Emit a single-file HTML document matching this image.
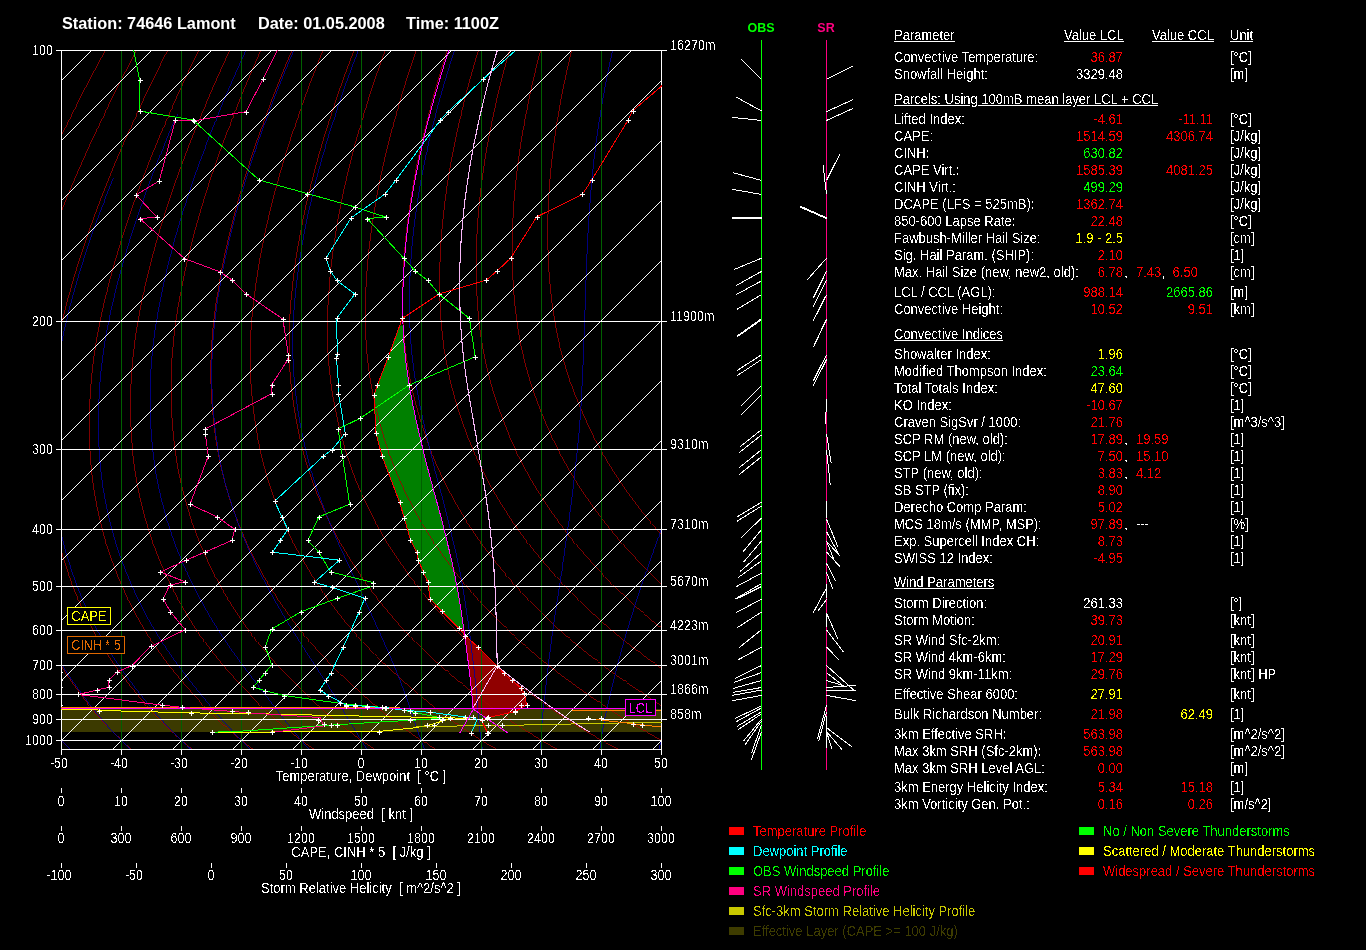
<!DOCTYPE html>
<html><head><meta charset="utf-8"><style>
html,body{margin:0;padding:0;background:#000;}
body{width:1366px;height:950px;position:relative;overflow:hidden;font-family:"Liberation Sans",sans-serif;}
svg{position:absolute;left:0;top:0;}
svg text{font-family:"Liberation Sans",sans-serif;white-space:pre;}
</style></head><body>
<svg width="1366" height="950" viewBox="0 0 1366 950">
<defs><filter id="crisp" x="0" y="0" width="1366" height="950" filterUnits="userSpaceOnUse"><feComponentTransfer><feFuncA type="discrete" tableValues="0 0 0 0 0 0 0 0 0 0 0 1 1 1 1 1 1 1 1 1"/></feComponentTransfer></filter><clipPath id="cp"><rect x="61" y="50" width="601" height="700"/></clipPath><pattern id="diag" x="0" y="0" width="60" height="60" patternUnits="userSpaceOnUse"><path d="M0 21h1v1h-1zM1 20h1v1h-1zM2 19h1v1h-1zM3 18h1v1h-1zM4 17h1v1h-1zM5 16h1v1h-1zM6 15h1v1h-1zM7 14h1v1h-1zM8 13h1v1h-1zM9 12h1v1h-1zM10 11h1v1h-1zM11 10h1v1h-1zM12 9h1v1h-1zM13 8h1v1h-1zM14 7h1v1h-1zM15 6h1v1h-1zM16 5h1v1h-1zM17 4h1v1h-1zM18 3h1v1h-1zM19 2h1v1h-1zM20 1h1v1h-1zM21 0h1v1h-1zM22 59h1v1h-1zM23 58h1v1h-1zM24 57h1v1h-1zM25 56h1v1h-1zM26 55h1v1h-1zM27 54h1v1h-1zM28 53h1v1h-1zM29 52h1v1h-1zM30 51h1v1h-1zM31 50h1v1h-1zM32 49h1v1h-1zM33 48h1v1h-1zM34 47h1v1h-1zM35 46h1v1h-1zM36 45h1v1h-1zM37 44h1v1h-1zM38 43h1v1h-1zM39 42h1v1h-1zM40 41h1v1h-1zM41 40h1v1h-1zM42 39h1v1h-1zM43 38h1v1h-1zM44 37h1v1h-1zM45 36h1v1h-1zM46 35h1v1h-1zM47 34h1v1h-1zM48 33h1v1h-1zM49 32h1v1h-1zM50 31h1v1h-1zM51 30h1v1h-1zM52 29h1v1h-1zM53 28h1v1h-1zM54 27h1v1h-1zM55 26h1v1h-1zM56 25h1v1h-1zM57 24h1v1h-1zM58 23h1v1h-1zM59 22h1v1h-1z" fill="#fff"/></pattern></defs>
<g clip-path="url(#cp)">
<rect x="61" y="709" width="600" height="23" fill="#3c3a00" stroke="none" stroke-width="1"/>
<polygon points="399.6,325.5 388.4,356.8 377.4,385.2 374.2,394.7 375.8,432.6 382.1,456.3 399.5,502.0 404.2,517.8 410.5,539.9 416.8,552.5 418.4,560.4 423.1,571.5 427.9,582.5 430.2,599.2 441.7,611.3 458.7,628.3 463.7,628.3 462.6,620.5 461.4,612.8 460.2,605.0 458.9,597.2 457.5,589.5 456.1,581.7 454.5,574.0 452.8,566.2 451.1,558.4 449.3,550.7 447.4,542.9 445.5,535.1 443.6,527.4 441.6,519.6 439.5,511.8 437.4,504.1 435.3,496.3 433.2,488.5 431.0,480.8 429.0,473.0 426.9,465.3 424.9,457.5 423.0,449.7 421.1,442.0 419.3,434.2 417.5,426.4 415.8,418.7 414.1,410.9 412.5,403.1 411.0,395.4 409.7,387.6 408.4,379.8 407.2,372.1 406.2,364.3 405.3,356.6 404.6,348.8 403.9,341.0 403.4,333.3 403.1,325.5" fill="#008000" stroke="none"/>
<polygon points="473.0,708.0 472.7,703.8 472.3,699.6 471.9,695.4 471.5,691.2 471.1,687.0 470.6,682.8 470.2,678.6 469.7,674.4 469.2,670.2 468.7,666.1 468.2,661.9 467.7,657.7 467.1,653.5 466.6,649.3 466.0,645.1 465.5,640.9 464.9,636.7 464.3,632.5 463.7,628.3 458.7,628.3 465.0,635.5 477.5,646.6 497.2,665.9 503.5,673.0 511.5,680.2 521.3,688.2 524.0,692.7 526.7,705.2 515.1,711.5 487.4,717.8 487.4,717.8 480.0,713.0 473.0,708.0" fill="#900000" stroke="none"/>
</g>
<g clip-path="url(#cp)" shape-rendering="crispEdges">
<polyline points="105.6,50.0 103.0,54.7 100.5,59.4 97.9,64.1 95.4,68.8 92.9,73.4 90.5,78.1 88.0,82.7 85.6,87.3 83.2,91.9 80.9,96.4 78.5,101.0 76.2,105.5 73.9,110.0 71.6,114.5 69.4,119.0 67.1,123.5 64.9,128.0 62.7,132.4 60.6,136.8 58.4,141.2 56.3,145.6 54.2,150.0 52.2,154.4 50.1,158.7 48.1,163.0 46.1,167.3 44.1,171.6 42.2,175.9 40.2,180.2 38.3,184.4 36.4,188.7 34.6,192.9 32.7,197.1 30.9,201.3 29.1,205.4 27.3,209.6 25.6,213.7 23.9,217.9 22.1,222.0 20.5,226.1 18.8,230.1 17.2,234.2 15.5,238.3 14.0,242.3 12.4,246.3 10.8,250.3 9.3,254.3 7.8,258.3 6.3,262.2 4.9,266.2 3.4,270.1 2.0,274.0 0.6,277.9 -0.7,281.8 -2.1,285.7 -3.4,289.5 -4.7,293.4 -6.0,297.2 -7.2,301.0 -8.5,304.8 -9.7,308.6 -10.9,312.4 -12.0,316.1 -13.2,319.9 -14.3,323.6 -15.4,327.3 -16.5,331.0 -17.5,334.7 -18.5,338.3 -19.5,341.9 -20.4,345.5 -21.3,349.1 -22.2,352.6 -23.1,356.2 -23.9,359.7 -24.7,363.2 -25.5,366.7 -26.2,370.2 -27.0,373.6 -27.7,377.0 -28.4,380.5 -29.0,383.9 -29.7,387.3 -30.3,390.6 -30.8,394.0 -31.4,397.3 -32.0,400.7 -32.5,404.0 -33.0,407.3 -33.5,410.6 -33.9,413.9 -34.3,417.1 -34.8,420.4 -35.2,423.6 -35.5,426.9 -35.9,430.1 -36.3,433.3 -36.6,436.5 -36.9,439.7 -37.2,442.9 -37.5,446.1 -37.7,449.3 -38.0,452.5 -38.2,455.6 -38.4,458.7 -38.5,461.9 -38.7,465.0 -38.8,468.0 -38.9,471.1 -38.9,474.2 -39.0,477.2 -39.0,480.3 -39.0,483.3 -39.0,486.3 -38.9,489.3 -38.9,492.3 -38.8,495.2 -38.7,498.2 -38.5,501.1 -38.4,504.1 -38.2,507.0 -38.0,509.9 -37.8,512.8 -37.6,515.8 -37.4,518.6 -37.1,521.5 -36.9,524.4 -36.6,527.3 -36.3,530.2 -35.9,533.0 -35.6,535.8 -35.2,538.7 -34.8,541.5 -34.4,544.3 -33.9,547.1 -33.5,549.9 -33.0,552.6 -32.5,555.4 -32.0,558.1 -31.4,560.9 -30.9,563.6 -30.3,566.3 -29.7,569.1 -29.1,571.8 -28.4,574.5 -27.8,577.2 -27.1,579.8 -26.4,582.5 -25.8,585.2 -25.0,587.9 -24.3,590.5 -23.6,593.2 -22.8,595.8 -22.0,598.5 -21.2,601.1 -20.4,603.7 -19.5,606.4 -18.7,609.0 -17.8,611.6 -16.9,614.2 -16.0,616.7 -15.0,619.3 -14.1,621.9 -13.1,624.4 -12.1,626.9 -11.0,629.5 -10.0,632.0 -8.9,634.5 -7.8,637.0 -6.7,639.5 -5.6,641.9 -4.4,644.4 -3.2,646.9 -2.0,649.3 -0.8,651.7 0.5,654.2 1.7,656.6 3.0,659.0 4.3,661.4 5.6,663.8 6.9,666.2 8.3,668.6 9.7,670.9 11.1,673.3 12.5,675.6 13.9,678.0 15.4,680.3 16.9,682.6 18.4,685.0 19.9,687.3 21.4,689.6 22.9,691.9 24.5,694.2 26.0,696.6 27.6,698.9 29.2,701.2 30.8,703.5 32.4,705.8 34.0,708.1 35.7,710.4 37.4,712.7 39.1,714.9 40.8,717.2 42.6,719.4 44.4,721.6 46.3,723.8 48.1,726.0 50.0,728.1 51.9,730.3 53.8,732.4 55.8,734.6 57.8,736.7 59.8,738.8 61.8,740.8 63.9,742.9 66.0,745.0 68.1,747.0 70.2,749.0 72.4,751.1" fill="none" stroke="#a00000" stroke-width="0.8" />
<polyline points="136.7,50.0 134.2,54.7 131.7,59.4 129.3,64.1 126.9,68.8 124.5,73.4 122.1,78.1 119.8,82.7 117.5,87.3 115.2,91.9 112.9,96.4 110.7,101.0 108.4,105.5 106.2,110.0 104.1,114.5 101.9,119.0 99.8,123.5 97.7,128.0 95.6,132.4 93.5,136.8 91.5,141.2 89.5,145.6 87.5,150.0 85.5,154.4 83.6,158.7 81.7,163.0 79.8,167.3 77.9,171.6 76.0,175.9 74.2,180.2 72.4,184.4 70.6,188.7 68.9,192.9 67.1,197.1 65.4,201.3 63.7,205.4 62.1,209.6 60.4,213.7 58.8,217.9 57.2,222.0 55.6,226.1 54.1,230.1 52.5,234.2 51.0,238.3 49.5,242.3 48.1,246.3 46.6,250.3 45.2,254.3 43.8,258.3 42.5,262.2 41.1,266.2 39.8,270.1 38.5,274.0 37.2,277.9 36.0,281.8 34.7,285.7 33.5,289.5 32.3,293.4 31.2,297.2 30.0,301.0 28.9,304.8 27.8,308.6 26.7,312.4 25.7,316.1 24.7,319.9 23.7,323.6 22.7,327.3 21.7,331.0 20.8,334.7 20.0,338.3 19.1,341.9 18.3,345.5 17.5,349.1 16.7,352.6 16.0,356.2 15.3,359.7 14.6,363.2 13.9,366.7 13.3,370.2 12.7,373.6 12.1,377.0 11.5,380.5 11.0,383.9 10.5,387.3 10.0,390.6 9.5,394.0 9.1,397.3 8.7,400.7 8.3,404.0 7.9,407.3 7.6,410.6 7.2,413.9 6.9,417.1 6.6,420.4 6.3,423.6 6.1,426.9 5.9,430.1 5.6,433.3 5.4,436.5 5.3,439.7 5.1,442.9 5.0,446.1 4.8,449.3 4.7,452.5 4.6,455.6 4.6,458.7 4.6,461.9 4.6,465.0 4.6,468.0 4.6,471.1 4.7,474.2 4.8,477.2 4.9,480.3 5.0,483.3 5.2,486.3 5.4,489.3 5.6,492.3 5.8,495.2 6.0,498.2 6.3,501.1 6.6,504.1 6.9,507.0 7.2,509.9 7.6,512.8 7.9,515.8 8.3,518.6 8.7,521.5 9.1,524.4 9.5,527.3 10.0,530.2 10.5,533.0 11.0,535.8 11.5,538.7 12.0,541.5 12.6,544.3 13.2,547.1 13.8,549.9 14.4,552.6 15.0,555.4 15.7,558.1 16.4,560.9 17.1,563.6 17.8,566.3 18.6,569.1 19.3,571.8 20.1,574.5 20.9,577.2 21.7,579.8 22.6,582.5 23.4,585.2 24.3,587.9 25.2,590.5 26.1,593.2 27.0,595.8 27.9,598.5 28.9,601.1 29.9,603.7 30.9,606.4 31.9,609.0 32.9,611.6 34.0,614.2 35.1,616.7 36.2,619.3 37.3,621.9 38.4,624.4 39.6,626.9 40.8,629.5 42.0,632.0 43.2,634.5 44.5,637.0 45.8,639.5 47.1,641.9 48.4,644.4 49.7,646.9 51.1,649.3 52.5,651.7 53.9,654.2 55.3,656.6 56.8,659.0 58.2,661.4 59.7,663.8 61.2,666.2 62.7,668.6 64.3,670.9 65.8,673.3 67.4,675.6 69.0,678.0 70.7,680.3 72.3,682.6 74.0,685.0 75.7,687.3 77.3,689.6 79.1,691.9 80.8,694.2 82.5,696.6 84.3,698.9 86.0,701.2 87.8,703.5 89.6,705.8 91.4,708.1 93.2,710.4 95.1,712.7 97.0,714.9 98.9,717.2 100.9,719.4 102.9,721.6 104.9,723.8 106.9,726.0 109.0,728.1 111.1,730.3 113.2,732.4 115.3,734.6 117.5,736.7 119.7,738.8 121.9,740.8 124.2,742.9 126.4,745.0 128.7,747.0 131.1,749.0 133.4,751.1" fill="none" stroke="#a00000" stroke-width="0.8" />
<polyline points="167.8,50.0 165.4,54.7 163.0,59.4 160.7,64.1 158.4,68.8 156.1,73.4 153.8,78.1 151.5,82.7 149.3,87.3 147.1,91.9 145.0,96.4 142.8,101.0 140.7,105.5 138.6,110.0 136.5,114.5 134.5,119.0 132.4,123.5 130.4,128.0 128.4,132.4 126.5,136.8 124.5,141.2 122.6,145.6 120.7,150.0 118.9,154.4 117.0,158.7 115.2,163.0 113.4,167.3 111.7,171.6 109.9,175.9 108.2,180.2 106.5,184.4 104.8,188.7 103.2,192.9 101.5,197.1 99.9,201.3 98.3,205.4 96.8,209.6 95.2,213.7 93.7,217.9 92.2,222.0 90.8,226.1 89.3,230.1 87.9,234.2 86.5,238.3 85.1,242.3 83.8,246.3 82.5,250.3 81.2,254.3 79.9,258.3 78.6,262.2 77.4,266.2 76.2,270.1 75.0,274.0 73.8,277.9 72.7,281.8 71.6,285.7 70.5,289.5 69.4,293.4 68.3,297.2 67.3,301.0 66.3,304.8 65.3,308.6 64.4,312.4 63.4,316.1 62.5,319.9 61.6,323.6 60.8,327.3 59.9,331.0 59.2,334.7 58.4,338.3 57.7,341.9 56.9,345.5 56.3,349.1 55.6,352.6 55.0,356.2 54.4,359.7 53.8,363.2 53.3,366.7 52.8,370.2 52.3,373.6 51.8,377.0 51.4,380.5 51.0,383.9 50.6,387.3 50.2,390.6 49.9,394.0 49.6,397.3 49.3,400.7 49.0,404.0 48.8,407.3 48.6,410.6 48.4,413.9 48.2,417.1 48.0,420.4 47.9,423.6 47.7,426.9 47.6,430.1 47.5,433.3 47.5,436.5 47.4,439.7 47.4,442.9 47.4,446.1 47.4,449.3 47.4,452.5 47.5,455.6 47.5,458.7 47.6,461.9 47.8,465.0 47.9,468.0 48.1,471.1 48.3,474.2 48.5,477.2 48.8,480.3 49.0,483.3 49.3,486.3 49.7,489.3 50.0,492.3 50.3,495.2 50.7,498.2 51.1,501.1 51.6,504.1 52.0,507.0 52.5,509.9 52.9,512.8 53.4,515.8 54.0,518.6 54.5,521.5 55.1,524.4 55.6,527.3 56.2,530.2 56.8,533.0 57.5,535.8 58.1,538.7 58.8,541.5 59.5,544.3 60.3,547.1 61.0,549.9 61.8,552.6 62.6,555.4 63.4,558.1 64.2,560.9 65.1,563.6 66.0,566.3 66.9,569.1 67.8,571.8 68.7,574.5 69.6,577.2 70.6,579.8 71.6,582.5 72.6,585.2 73.6,587.9 74.7,590.5 75.7,593.2 76.8,595.8 77.9,598.5 79.0,601.1 80.1,603.7 81.3,606.4 82.4,609.0 83.6,611.6 84.9,614.2 86.1,616.7 87.4,619.3 88.6,621.9 89.9,624.4 91.3,626.9 92.6,629.5 94.0,632.0 95.4,634.5 96.8,637.0 98.2,639.5 99.7,641.9 101.2,644.4 102.7,646.9 104.2,649.3 105.8,651.7 107.3,654.2 108.9,656.6 110.5,659.0 112.2,661.4 113.8,663.8 115.5,666.2 117.2,668.6 118.9,670.9 120.6,673.3 122.4,675.6 124.2,678.0 125.9,680.3 127.8,682.6 129.6,685.0 131.4,687.3 133.3,689.6 135.2,691.9 137.1,694.2 139.0,696.6 140.9,698.9 142.9,701.2 144.8,703.5 146.8,705.8 148.8,708.1 150.8,710.4 152.8,712.7 154.9,714.9 157.0,717.2 159.1,719.4 161.3,721.6 163.5,723.8 165.7,726.0 167.9,728.1 170.2,730.3 172.5,732.4 174.8,734.6 177.2,736.7 179.6,738.8 182.0,740.8 184.4,742.9 186.9,745.0 189.4,747.0 191.9,749.0 194.4,751.1" fill="none" stroke="#a00000" stroke-width="0.8" />
<polyline points="198.8,50.0 196.5,54.7 194.3,59.4 192.0,64.1 189.8,68.8 187.6,73.4 185.5,78.1 183.3,82.7 181.2,87.3 179.1,91.9 177.0,96.4 175.0,101.0 172.9,105.5 170.9,110.0 169.0,114.5 167.0,119.0 165.1,123.5 163.2,128.0 161.3,132.4 159.4,136.8 157.6,141.2 155.8,145.6 154.0,150.0 152.2,154.4 150.5,158.7 148.8,163.0 147.1,167.3 145.4,171.6 143.8,175.9 142.2,180.2 140.6,184.4 139.0,188.7 137.4,192.9 135.9,197.1 134.4,201.3 132.9,205.4 131.5,209.6 130.1,213.7 128.7,217.9 127.3,222.0 125.9,226.1 124.6,230.1 123.3,234.2 122.0,238.3 120.7,242.3 119.5,246.3 118.3,250.3 117.1,254.3 115.9,258.3 114.8,262.2 113.6,266.2 112.5,270.1 111.5,274.0 110.4,277.9 109.4,281.8 108.4,285.7 107.4,289.5 106.4,293.4 105.5,297.2 104.6,301.0 103.7,304.8 102.8,308.6 102.0,312.4 101.2,316.1 100.4,319.9 99.6,323.6 98.9,327.3 98.1,331.0 97.5,334.7 96.8,338.3 96.2,341.9 95.6,345.5 95.1,349.1 94.5,352.6 94.0,356.2 93.6,359.7 93.1,363.2 92.7,366.7 92.3,370.2 91.9,373.6 91.6,377.0 91.3,380.5 91.0,383.9 90.7,387.3 90.5,390.6 90.3,394.0 90.1,397.3 89.9,400.7 89.8,404.0 89.7,407.3 89.6,410.6 89.5,413.9 89.4,417.1 89.4,420.4 89.4,423.6 89.4,426.9 89.4,430.1 89.4,433.3 89.5,436.5 89.6,439.7 89.7,442.9 89.8,446.1 89.9,449.3 90.1,452.5 90.3,455.6 90.5,458.7 90.7,461.9 91.0,465.0 91.3,468.0 91.6,471.1 91.9,474.2 92.3,477.2 92.6,480.3 93.1,483.3 93.5,486.3 93.9,489.3 94.4,492.3 94.9,495.2 95.4,498.2 96.0,501.1 96.5,504.1 97.1,507.0 97.7,509.9 98.3,512.8 99.0,515.8 99.6,518.6 100.3,521.5 101.0,524.4 101.7,527.3 102.5,530.2 103.2,533.0 104.0,535.8 104.8,538.7 105.6,541.5 106.5,544.3 107.4,547.1 108.3,549.9 109.2,552.6 110.1,555.4 111.1,558.1 112.1,560.9 113.1,563.6 114.1,566.3 115.1,569.1 116.2,571.8 117.3,574.5 118.4,577.2 119.5,579.8 120.6,582.5 121.8,585.2 122.9,587.9 124.1,590.5 125.3,593.2 126.6,595.8 127.8,598.5 129.1,601.1 130.4,603.7 131.7,606.4 133.0,609.0 134.4,611.6 135.7,614.2 137.1,616.7 138.5,619.3 140.0,621.9 141.4,624.4 142.9,626.9 144.4,629.5 146.0,632.0 147.5,634.5 149.1,637.0 150.7,639.5 152.3,641.9 154.0,644.4 155.6,646.9 157.3,649.3 159.0,651.7 160.8,654.2 162.5,656.6 164.3,659.0 166.1,661.4 167.9,663.8 169.7,666.2 171.6,668.6 173.5,670.9 175.4,673.3 177.3,675.6 179.3,678.0 181.2,680.3 183.2,682.6 185.2,685.0 187.2,687.3 189.3,689.6 191.3,691.9 193.4,694.2 195.5,696.6 197.6,698.9 199.7,701.2 201.8,703.5 204.0,705.8 206.1,708.1 208.3,710.4 210.5,712.7 212.8,714.9 215.1,717.2 217.4,719.4 219.7,721.6 222.1,723.8 224.5,726.0 226.9,728.1 229.4,730.3 231.9,732.4 234.4,734.6 236.9,736.7 239.5,738.8 242.1,740.8 244.7,742.9 247.3,745.0 250.0,747.0 252.7,749.0 255.4,751.1" fill="none" stroke="#a00000" stroke-width="0.8" />
<polyline points="229.9,50.0 227.7,54.7 225.5,59.4 223.4,64.1 221.3,68.8 219.2,73.4 217.1,78.1 215.1,82.7 213.0,87.3 211.0,91.9 209.1,96.4 207.1,101.0 205.2,105.5 203.3,110.0 201.4,114.5 199.5,119.0 197.7,123.5 195.9,128.0 194.1,132.4 192.4,136.8 190.6,141.2 188.9,145.6 187.3,150.0 185.6,154.4 184.0,158.7 182.3,163.0 180.8,167.3 179.2,171.6 177.7,175.9 176.1,180.2 174.7,184.4 173.2,188.7 171.7,192.9 170.3,197.1 168.9,201.3 167.6,205.4 166.2,209.6 164.9,213.7 163.6,217.9 162.3,222.0 161.1,226.1 159.8,230.1 158.6,234.2 157.5,238.3 156.3,242.3 155.2,246.3 154.1,250.3 153.0,254.3 151.9,258.3 150.9,262.2 149.9,266.2 148.9,270.1 147.9,274.0 147.0,277.9 146.1,281.8 145.2,285.7 144.3,289.5 143.5,293.4 142.6,297.2 141.8,301.0 141.1,304.8 140.3,308.6 139.6,312.4 138.9,316.1 138.2,319.9 137.6,323.6 136.9,327.3 136.3,331.0 135.8,334.7 135.3,338.3 134.8,341.9 134.3,345.5 133.9,349.1 133.4,352.6 133.1,356.2 132.7,359.7 132.4,363.2 132.1,366.7 131.8,370.2 131.6,373.6 131.4,377.0 131.2,380.5 131.0,383.9 130.9,387.3 130.8,390.6 130.7,394.0 130.6,397.3 130.6,400.7 130.5,404.0 130.5,407.3 130.6,410.6 130.6,413.9 130.7,417.1 130.8,420.4 130.9,423.6 131.0,426.9 131.2,430.1 131.3,433.3 131.5,436.5 131.7,439.7 132.0,442.9 132.2,446.1 132.5,449.3 132.8,452.5 133.1,455.6 133.4,458.7 133.8,461.9 134.2,465.0 134.6,468.0 135.0,471.1 135.5,474.2 136.0,477.2 136.5,480.3 137.1,483.3 137.6,486.3 138.2,489.3 138.8,492.3 139.5,495.2 140.1,498.2 140.8,501.1 141.5,504.1 142.2,507.0 143.0,509.9 143.7,512.8 144.5,515.8 145.3,518.6 146.1,521.5 147.0,524.4 147.8,527.3 148.7,530.2 149.6,533.0 150.5,535.8 151.5,538.7 152.4,541.5 153.4,544.3 154.5,547.1 155.5,549.9 156.6,552.6 157.7,555.4 158.8,558.1 159.9,560.9 161.0,563.6 162.2,566.3 163.4,569.1 164.6,571.8 165.8,574.5 167.1,577.2 168.4,579.8 169.6,582.5 171.0,585.2 172.3,587.9 173.6,590.5 175.0,593.2 176.4,595.8 177.8,598.5 179.2,601.1 180.6,603.7 182.1,606.4 183.6,609.0 185.1,611.6 186.6,614.2 188.1,616.7 189.7,619.3 191.3,621.9 192.9,624.4 194.6,626.9 196.2,629.5 197.9,632.0 199.6,634.5 201.4,637.0 203.2,639.5 204.9,641.9 206.8,644.4 208.6,646.9 210.4,649.3 212.3,651.7 214.2,654.2 216.1,656.6 218.1,659.0 220.0,661.4 222.0,663.8 224.0,666.2 226.0,668.6 228.1,670.9 230.2,673.3 232.3,675.6 234.4,678.0 236.5,680.3 238.7,682.6 240.8,685.0 243.0,687.3 245.2,689.6 247.5,691.9 249.7,694.2 252.0,696.6 254.2,698.9 256.5,701.2 258.8,703.5 261.1,705.8 263.5,708.1 265.9,710.4 268.3,712.7 270.7,714.9 273.1,717.2 275.6,719.4 278.2,721.6 280.7,723.8 283.3,726.0 285.9,728.1 288.5,730.3 291.2,732.4 293.9,734.6 296.6,736.7 299.4,738.8 302.1,740.8 304.9,742.9 307.8,745.0 310.6,747.0 313.5,749.0 316.4,751.1" fill="none" stroke="#a00000" stroke-width="0.8" />
<polyline points="261.0,50.0 258.9,54.7 256.8,59.4 254.8,64.1 252.7,68.8 250.7,73.4 248.8,78.1 246.8,82.7 244.9,87.3 243.0,91.9 241.1,96.4 239.3,101.0 237.4,105.5 235.6,110.0 233.8,114.5 232.1,119.0 230.4,123.5 228.7,128.0 227.0,132.4 225.3,136.8 223.7,141.2 222.1,145.6 220.5,150.0 219.0,154.4 217.4,158.7 215.9,163.0 214.4,167.3 213.0,171.6 211.5,175.9 210.1,180.2 208.7,184.4 207.4,188.7 206.0,192.9 204.7,197.1 203.4,201.3 202.2,205.4 200.9,209.6 199.7,213.7 198.5,217.9 197.4,222.0 196.2,226.1 195.1,230.1 194.0,234.2 192.9,238.3 191.9,242.3 190.9,246.3 189.9,250.3 188.9,254.3 188.0,258.3 187.0,262.2 186.1,266.2 185.3,270.1 184.4,274.0 183.6,277.9 182.8,281.8 182.0,285.7 181.2,289.5 180.5,293.4 179.8,297.2 179.1,301.0 178.5,304.8 177.8,308.6 177.2,312.4 176.6,316.1 176.1,319.9 175.5,323.6 175.0,327.3 174.5,331.0 174.1,334.7 173.7,338.3 173.3,341.9 173.0,345.5 172.6,349.1 172.4,352.6 172.1,356.2 171.9,359.7 171.7,363.2 171.5,366.7 171.3,370.2 171.2,373.6 171.1,377.0 171.1,380.5 171.0,383.9 171.0,387.3 171.0,390.6 171.0,394.0 171.1,397.3 171.2,400.7 171.3,404.0 171.4,407.3 171.6,410.6 171.7,413.9 171.9,417.1 172.2,420.4 172.4,423.6 172.7,426.9 172.9,430.1 173.2,433.3 173.6,436.5 173.9,439.7 174.3,442.9 174.6,446.1 175.0,449.3 175.4,452.5 175.9,455.6 176.4,458.7 176.9,461.9 177.4,465.0 177.9,468.0 178.5,471.1 179.1,474.2 179.8,477.2 180.4,480.3 181.1,483.3 181.8,486.3 182.5,489.3 183.3,492.3 184.0,495.2 184.8,498.2 185.6,501.1 186.5,504.1 187.3,507.0 188.2,509.9 189.1,512.8 190.0,515.8 191.0,518.6 191.9,521.5 192.9,524.4 193.9,527.3 194.9,530.2 196.0,533.0 197.0,535.8 198.1,538.7 199.3,541.5 200.4,544.3 201.6,547.1 202.8,549.9 204.0,552.6 205.2,555.4 206.5,558.1 207.7,560.9 209.0,563.6 210.3,566.3 211.7,569.1 213.0,571.8 214.4,574.5 215.8,577.2 217.2,579.8 218.7,582.5 220.1,585.2 221.6,587.9 223.1,590.5 224.6,593.2 226.1,595.8 227.7,598.5 229.3,601.1 230.9,603.7 232.5,606.4 234.1,609.0 235.8,611.6 237.5,614.2 239.2,616.7 240.9,619.3 242.7,621.9 244.4,624.4 246.2,626.9 248.1,629.5 249.9,632.0 251.8,634.5 253.7,637.0 255.6,639.5 257.6,641.9 259.5,644.4 261.5,646.9 263.6,649.3 265.6,651.7 267.7,654.2 269.7,656.6 271.8,659.0 274.0,661.4 276.1,663.8 278.3,666.2 280.5,668.6 282.7,670.9 284.9,673.3 287.2,675.6 289.5,678.0 291.8,680.3 294.1,682.6 296.5,685.0 298.8,687.3 301.2,689.6 303.6,691.9 306.0,694.2 308.5,696.6 310.9,698.9 313.4,701.2 315.8,703.5 318.3,705.8 320.9,708.1 323.4,710.4 326.0,712.7 328.6,714.9 331.2,717.2 333.9,719.4 336.6,721.6 339.3,723.8 342.1,726.0 344.9,728.1 347.7,730.3 350.5,732.4 353.4,734.6 356.3,736.7 359.2,738.8 362.2,740.8 365.2,742.9 368.2,745.0 371.3,747.0 374.3,749.0 377.4,751.1" fill="none" stroke="#a00000" stroke-width="0.8" />
<polyline points="292.1,50.0 290.1,54.7 288.1,59.4 286.1,64.1 284.2,68.8 282.3,73.4 280.4,78.1 278.6,82.7 276.7,87.3 274.9,91.9 273.2,96.4 271.4,101.0 269.7,105.5 268.0,110.0 266.3,114.5 264.6,119.0 263.0,123.5 261.4,128.0 259.8,132.4 258.3,136.8 256.7,141.2 255.2,145.6 253.8,150.0 252.3,154.4 250.9,158.7 249.5,163.0 248.1,167.3 246.7,171.6 245.4,175.9 244.1,180.2 242.8,184.4 241.6,188.7 240.3,192.9 239.1,197.1 238.0,201.3 236.8,205.4 235.7,209.6 234.6,213.7 233.5,217.9 232.4,222.0 231.4,226.1 230.4,230.1 229.4,234.2 228.4,238.3 227.5,242.3 226.6,246.3 225.7,250.3 224.8,254.3 224.0,258.3 223.2,262.2 222.4,266.2 221.6,270.1 220.9,274.0 220.2,277.9 219.5,281.8 218.8,285.7 218.2,289.5 217.6,293.4 217.0,297.2 216.4,301.0 215.8,304.8 215.3,308.6 214.8,312.4 214.4,316.1 213.9,319.9 213.5,323.6 213.1,327.3 212.7,331.0 212.4,334.7 212.1,338.3 211.9,341.9 211.6,345.5 211.4,349.1 211.3,352.6 211.1,356.2 211.0,359.7 210.9,363.2 210.9,366.7 210.9,370.2 210.9,373.6 210.9,377.0 210.9,380.5 211.0,383.9 211.1,387.3 211.3,390.6 211.4,394.0 211.6,397.3 211.8,400.7 212.0,404.0 212.3,407.3 212.6,410.6 212.9,413.9 213.2,417.1 213.5,420.4 213.9,423.6 214.3,426.9 214.7,430.1 215.1,433.3 215.6,436.5 216.1,439.7 216.5,442.9 217.1,446.1 217.6,449.3 218.1,452.5 218.7,455.6 219.3,458.7 219.9,461.9 220.6,465.0 221.3,468.0 222.0,471.1 222.7,474.2 223.5,477.2 224.3,480.3 225.1,483.3 225.9,486.3 226.8,489.3 227.7,492.3 228.6,495.2 229.5,498.2 230.5,501.1 231.5,504.1 232.4,507.0 233.5,509.9 234.5,512.8 235.6,515.8 236.7,518.6 237.8,521.5 238.9,524.4 240.0,527.3 241.2,530.2 242.4,533.0 243.6,535.8 244.8,538.7 246.1,541.5 247.4,544.3 248.7,547.1 250.0,549.9 251.4,552.6 252.7,555.4 254.1,558.1 255.6,560.9 257.0,563.6 258.5,566.3 260.0,569.1 261.5,571.8 263.0,574.5 264.5,577.2 266.1,579.8 267.7,582.5 269.3,585.2 270.9,587.9 272.6,590.5 274.2,593.2 275.9,595.8 277.6,598.5 279.4,601.1 281.1,603.7 282.9,606.4 284.7,609.0 286.5,611.6 288.3,614.2 290.2,616.7 292.1,619.3 294.0,621.9 295.9,624.4 297.9,626.9 299.9,629.5 301.9,632.0 303.9,634.5 306.0,637.0 308.1,639.5 310.2,641.9 312.3,644.4 314.5,646.9 316.7,649.3 318.9,651.7 321.1,654.2 323.3,656.6 325.6,659.0 327.9,661.4 330.2,663.8 332.6,666.2 334.9,668.6 337.3,670.9 339.7,673.3 342.1,675.6 344.6,678.0 347.1,680.3 349.6,682.6 352.1,685.0 354.6,687.3 357.2,689.6 359.8,691.9 362.3,694.2 364.9,696.6 367.6,698.9 370.2,701.2 372.8,703.5 375.5,705.8 378.2,708.1 380.9,710.4 383.7,712.7 386.5,714.9 389.3,717.2 392.1,719.4 395.0,721.6 397.9,723.8 400.9,726.0 403.8,728.1 406.8,730.3 409.9,732.4 412.9,734.6 416.0,736.7 419.1,738.8 422.3,740.8 425.5,742.9 428.7,745.0 431.9,747.0 435.2,749.0 438.5,751.1" fill="none" stroke="#a00000" stroke-width="0.8" />
<polyline points="323.1,50.0 321.2,54.7 319.4,59.4 317.5,64.1 315.7,68.8 313.9,73.4 312.1,78.1 310.3,82.7 308.6,87.3 306.9,91.9 305.2,96.4 303.6,101.0 301.9,105.5 300.3,110.0 298.7,114.5 297.2,119.0 295.7,123.5 294.2,128.0 292.7,132.4 291.2,136.8 289.8,141.2 288.4,145.6 287.0,150.0 285.7,154.4 284.3,158.7 283.0,163.0 281.8,167.3 280.5,171.6 279.3,175.9 278.1,180.2 276.9,184.4 275.8,188.7 274.6,192.9 273.5,197.1 272.5,201.3 271.4,205.4 270.4,209.6 269.4,213.7 268.4,217.9 267.5,222.0 266.5,226.1 265.6,230.1 264.8,234.2 263.9,238.3 263.1,242.3 262.3,246.3 261.5,250.3 260.7,254.3 260.0,258.3 259.3,262.2 258.6,266.2 258.0,270.1 257.4,274.0 256.8,277.9 256.2,281.8 255.6,285.7 255.1,289.5 254.6,293.4 254.1,297.2 253.7,301.0 253.2,304.8 252.8,308.6 252.4,312.4 252.1,316.1 251.8,319.9 251.5,323.6 251.2,327.3 250.9,331.0 250.7,334.7 250.6,338.3 250.4,341.9 250.3,345.5 250.2,349.1 250.2,352.6 250.2,356.2 250.2,359.7 250.2,363.2 250.3,366.7 250.4,370.2 250.5,373.6 250.6,377.0 250.8,380.5 251.0,383.9 251.3,387.3 251.5,390.6 251.8,394.0 252.1,397.3 252.4,400.7 252.8,404.0 253.2,407.3 253.6,410.6 254.0,413.9 254.5,417.1 254.9,420.4 255.4,423.6 255.9,426.9 256.5,430.1 257.0,433.3 257.6,436.5 258.2,439.7 258.8,442.9 259.5,446.1 260.1,449.3 260.8,452.5 261.5,455.6 262.3,458.7 263.0,461.9 263.8,465.0 264.6,468.0 265.5,471.1 266.3,474.2 267.2,477.2 268.2,480.3 269.1,483.3 270.1,486.3 271.1,489.3 272.1,492.3 273.2,495.2 274.2,498.2 275.3,501.1 276.4,504.1 277.6,507.0 278.7,509.9 279.9,512.8 281.1,515.8 282.3,518.6 283.6,521.5 284.8,524.4 286.1,527.3 287.4,530.2 288.7,533.0 290.1,535.8 291.5,538.7 292.9,541.5 294.3,544.3 295.8,547.1 297.2,549.9 298.7,552.6 300.3,555.4 301.8,558.1 303.4,560.9 305.0,563.6 306.6,566.3 308.2,569.1 309.9,571.8 311.6,574.5 313.3,577.2 315.0,579.8 316.7,582.5 318.5,585.2 320.3,587.9 322.0,590.5 323.9,593.2 325.7,595.8 327.6,598.5 329.5,601.1 331.4,603.7 333.3,606.4 335.2,609.0 337.2,611.6 339.2,614.2 341.2,616.7 343.3,619.3 345.3,621.9 347.4,624.4 349.6,626.9 351.7,629.5 353.9,632.0 356.1,634.5 358.3,637.0 360.5,639.5 362.8,641.9 365.1,644.4 367.4,646.9 369.8,649.3 372.1,651.7 374.5,654.2 377.0,656.6 379.4,659.0 381.8,661.4 384.3,663.8 386.8,666.2 389.4,668.6 391.9,670.9 394.5,673.3 397.1,675.6 399.7,678.0 402.4,680.3 405.0,682.6 407.7,685.0 410.4,687.3 413.1,689.6 415.9,691.9 418.7,694.2 421.4,696.6 424.2,698.9 427.0,701.2 429.9,703.5 432.7,705.8 435.6,708.1 438.5,710.4 441.4,712.7 444.4,714.9 447.4,717.2 450.4,719.4 453.4,721.6 456.5,723.8 459.7,726.0 462.8,728.1 466.0,730.3 469.2,732.4 472.4,734.6 475.7,736.7 479.0,738.8 482.4,740.8 485.7,742.9 489.1,745.0 492.5,747.0 496.0,749.0 499.5,751.1" fill="none" stroke="#a00000" stroke-width="0.8" />
<polyline points="354.2,50.0 352.4,54.7 350.6,59.4 348.9,64.1 347.1,68.8 345.4,73.4 343.7,78.1 342.1,82.7 340.4,87.3 338.8,91.9 337.3,96.4 335.7,101.0 334.2,105.5 332.7,110.0 331.2,114.5 329.7,119.0 328.3,123.5 326.9,128.0 325.5,132.4 324.2,136.8 322.9,141.2 321.6,145.6 320.3,150.0 319.0,154.4 317.8,158.7 316.6,163.0 315.4,167.3 314.3,171.6 313.2,175.9 312.1,180.2 311.0,184.4 310.0,188.7 308.9,192.9 307.9,197.1 307.0,201.3 306.0,205.4 305.1,209.6 304.2,213.7 303.3,217.9 302.5,222.0 301.7,226.1 300.9,230.1 300.1,234.2 299.4,238.3 298.7,242.3 298.0,246.3 297.3,250.3 296.7,254.3 296.0,258.3 295.5,262.2 294.9,266.2 294.4,270.1 293.8,274.0 293.3,277.9 292.9,281.8 292.4,285.7 292.0,289.5 291.6,293.4 291.3,297.2 290.9,301.0 290.6,304.8 290.3,308.6 290.1,312.4 289.8,316.1 289.6,319.9 289.4,323.6 289.3,327.3 289.2,331.0 289.1,334.7 289.0,338.3 289.0,341.9 289.0,345.5 289.0,349.1 289.1,352.6 289.2,356.2 289.3,359.7 289.5,363.2 289.7,366.7 289.9,370.2 290.1,373.6 290.4,377.0 290.7,380.5 291.0,383.9 291.4,387.3 291.8,390.6 292.2,394.0 292.6,397.3 293.1,400.7 293.5,404.0 294.1,407.3 294.6,410.6 295.1,413.9 295.7,417.1 296.3,420.4 296.9,423.6 297.6,426.9 298.2,430.1 298.9,433.3 299.6,436.5 300.4,439.7 301.1,442.9 301.9,446.1 302.7,449.3 303.5,452.5 304.3,455.6 305.2,458.7 306.1,461.9 307.0,465.0 308.0,468.0 309.0,471.1 310.0,474.2 311.0,477.2 312.0,480.3 313.1,483.3 314.2,486.3 315.4,489.3 316.5,492.3 317.7,495.2 318.9,498.2 320.1,501.1 321.4,504.1 322.7,507.0 324.0,509.9 325.3,512.8 326.6,515.8 328.0,518.6 329.4,521.5 330.8,524.4 332.2,527.3 333.7,530.2 335.1,533.0 336.6,535.8 338.1,538.7 339.7,541.5 341.3,544.3 342.9,547.1 344.5,549.9 346.1,552.6 347.8,555.4 349.5,558.1 351.2,560.9 353.0,563.6 354.7,566.3 356.5,569.1 358.3,571.8 360.1,574.5 362.0,577.2 363.9,579.8 365.7,582.5 367.7,585.2 369.6,587.9 371.5,590.5 373.5,593.2 375.5,595.8 377.5,598.5 379.5,601.1 381.6,603.7 383.7,606.4 385.8,609.0 387.9,611.6 390.1,614.2 392.3,616.7 394.5,619.3 396.7,621.9 398.9,624.4 401.2,626.9 403.5,629.5 405.9,632.0 408.2,634.5 410.6,637.0 413.0,639.5 415.4,641.9 417.9,644.4 420.4,646.9 422.9,649.3 425.4,651.7 428.0,654.2 430.6,656.6 433.2,659.0 435.8,661.4 438.4,663.8 441.1,666.2 443.8,668.6 446.5,670.9 449.3,673.3 452.0,675.6 454.8,678.0 457.6,680.3 460.5,682.6 463.3,685.0 466.2,687.3 469.1,689.6 472.0,691.9 475.0,694.2 477.9,696.6 480.9,698.9 483.9,701.2 486.9,703.5 489.9,705.8 492.9,708.1 496.0,710.4 499.1,712.7 502.3,714.9 505.4,717.2 508.6,719.4 511.9,721.6 515.2,723.8 518.5,726.0 521.8,728.1 525.2,730.3 528.5,732.4 532.0,734.6 535.4,736.7 538.9,738.8 542.4,740.8 546.0,742.9 549.6,745.0 553.2,747.0 556.8,749.0 560.5,751.1" fill="none" stroke="#a00000" stroke-width="0.8" />
<polyline points="385.3,50.0 383.6,54.7 381.9,59.4 380.2,64.1 378.6,68.8 377.0,73.4 375.4,78.1 373.8,82.7 372.3,87.3 370.8,91.9 369.3,96.4 367.9,101.0 366.4,105.5 365.0,110.0 363.6,114.5 362.3,119.0 361.0,123.5 359.7,128.0 358.4,132.4 357.1,136.8 355.9,141.2 354.7,145.6 353.5,150.0 352.4,154.4 351.3,158.7 350.2,163.0 349.1,167.3 348.1,171.6 347.0,175.9 346.1,180.2 345.1,184.4 344.1,188.7 343.2,192.9 342.3,197.1 341.5,201.3 340.6,205.4 339.8,209.6 339.0,213.7 338.3,217.9 337.5,222.0 336.8,226.1 336.1,230.1 335.5,234.2 334.9,238.3 334.3,242.3 333.7,246.3 333.1,250.3 332.6,254.3 332.1,258.3 331.6,262.2 331.1,266.2 330.7,270.1 330.3,274.0 329.9,277.9 329.6,281.8 329.3,285.7 329.0,289.5 328.7,293.4 328.4,297.2 328.2,301.0 328.0,304.8 327.8,308.6 327.7,312.4 327.6,316.1 327.5,319.9 327.4,323.6 327.4,327.3 327.4,331.0 327.4,334.7 327.4,338.3 327.5,341.9 327.7,345.5 327.8,349.1 328.0,352.6 328.2,356.2 328.5,359.7 328.8,363.2 329.1,366.7 329.4,370.2 329.8,373.6 330.2,377.0 330.6,380.5 331.0,383.9 331.5,387.3 332.0,390.6 332.6,394.0 333.1,397.3 333.7,400.7 334.3,404.0 334.9,407.3 335.6,410.6 336.3,413.9 337.0,417.1 337.7,420.4 338.4,423.6 339.2,426.9 340.0,430.1 340.8,433.3 341.7,436.5 342.5,439.7 343.4,442.9 344.3,446.1 345.2,449.3 346.2,452.5 347.1,455.6 348.1,458.7 349.2,461.9 350.2,465.0 351.3,468.0 352.4,471.1 353.6,474.2 354.7,477.2 355.9,480.3 357.1,483.3 358.4,486.3 359.7,489.3 361.0,492.3 362.3,495.2 363.6,498.2 365.0,501.1 366.4,504.1 367.8,507.0 369.2,509.9 370.7,512.8 372.2,515.8 373.7,518.6 375.2,521.5 376.7,524.4 378.3,527.3 379.9,530.2 381.5,533.0 383.1,535.8 384.8,538.7 386.5,541.5 388.2,544.3 390.0,547.1 391.7,549.9 393.5,552.6 395.3,555.4 397.2,558.1 399.1,560.9 400.9,563.6 402.9,566.3 404.8,569.1 406.7,571.8 408.7,574.5 410.7,577.2 412.7,579.8 414.8,582.5 416.8,585.2 418.9,587.9 421.0,590.5 423.1,593.2 425.3,595.8 427.4,598.5 429.6,601.1 431.9,603.7 434.1,606.4 436.4,609.0 438.6,611.6 441.0,614.2 443.3,616.7 445.6,619.3 448.0,621.9 450.4,624.4 452.9,626.9 455.3,629.5 457.8,632.0 460.3,634.5 462.9,637.0 465.5,639.5 468.1,641.9 470.7,644.4 473.3,646.9 476.0,649.3 478.7,651.7 481.4,654.2 484.2,656.6 486.9,659.0 489.7,661.4 492.5,663.8 495.4,666.2 498.2,668.6 501.1,670.9 504.0,673.3 507.0,675.6 509.9,678.0 512.9,680.3 515.9,682.6 519.0,685.0 522.0,687.3 525.1,689.6 528.2,691.9 531.3,694.2 534.4,696.6 537.5,698.9 540.7,701.2 543.9,703.5 547.1,705.8 550.3,708.1 553.6,710.4 556.8,712.7 560.2,714.9 563.5,717.2 566.9,719.4 570.3,721.6 573.8,723.8 577.3,726.0 580.8,728.1 584.3,730.3 587.9,732.4 591.5,734.6 595.1,736.7 598.8,738.8 602.5,740.8 606.2,742.9 610.0,745.0 613.8,747.0 617.6,749.0 621.5,751.1" fill="none" stroke="#a00000" stroke-width="0.8" />
<polyline points="416.4,50.0 414.8,54.7 413.2,59.4 411.6,64.1 410.1,68.8 408.5,73.4 407.1,78.1 405.6,82.7 404.2,87.3 402.7,91.9 401.4,96.4 400.0,101.0 398.7,105.5 397.4,110.0 396.1,114.5 394.8,119.0 393.6,123.5 392.4,128.0 391.2,132.4 390.1,136.8 389.0,141.2 387.9,145.6 386.8,150.0 385.7,154.4 384.7,158.7 383.7,163.0 382.8,167.3 381.8,171.6 380.9,175.9 380.0,180.2 379.2,184.4 378.3,188.7 377.5,192.9 376.7,197.1 376.0,201.3 375.3,205.4 374.5,209.6 373.9,213.7 373.2,217.9 372.6,222.0 372.0,226.1 371.4,230.1 370.9,234.2 370.3,238.3 369.8,242.3 369.4,246.3 368.9,250.3 368.5,254.3 368.1,258.3 367.7,262.2 367.4,266.2 367.1,270.1 366.8,274.0 366.5,277.9 366.3,281.8 366.1,285.7 365.9,289.5 365.7,293.4 365.6,297.2 365.5,301.0 365.4,304.8 365.3,308.6 365.3,312.4 365.3,316.1 365.3,319.9 365.4,323.6 365.4,327.3 365.6,331.0 365.7,334.7 365.9,338.3 366.1,341.9 366.3,345.5 366.6,349.1 366.9,352.6 367.3,356.2 367.6,359.7 368.0,363.2 368.5,366.7 368.9,370.2 369.4,373.6 369.9,377.0 370.5,380.5 371.0,383.9 371.6,387.3 372.3,390.6 372.9,394.0 373.6,397.3 374.3,400.7 375.1,404.0 375.8,407.3 376.6,410.6 377.4,413.9 378.2,417.1 379.1,420.4 380.0,423.6 380.9,426.9 381.8,430.1 382.7,433.3 383.7,436.5 384.7,439.7 385.7,442.9 386.7,446.1 387.8,449.3 388.8,452.5 390.0,455.6 391.1,458.7 392.2,461.9 393.4,465.0 394.7,468.0 395.9,471.1 397.2,474.2 398.5,477.2 399.8,480.3 401.2,483.3 402.5,486.3 403.9,489.3 405.4,492.3 406.8,495.2 408.3,498.2 409.8,501.1 411.3,504.1 412.9,507.0 414.5,509.9 416.1,512.8 417.7,515.8 419.3,518.6 421.0,521.5 422.7,524.4 424.4,527.3 426.1,530.2 427.9,533.0 429.7,535.8 431.5,538.7 433.3,541.5 435.2,544.3 437.1,547.1 439.0,549.9 440.9,552.6 442.9,555.4 444.9,558.1 446.9,560.9 448.9,563.6 451.0,566.3 453.1,569.1 455.2,571.8 457.3,574.5 459.4,577.2 461.6,579.8 463.8,582.5 466.0,585.2 468.2,587.9 470.5,590.5 472.8,593.2 475.1,595.8 477.4,598.5 479.7,601.1 482.1,603.7 484.5,606.4 486.9,609.0 489.4,611.6 491.8,614.2 494.3,616.7 496.8,619.3 499.4,621.9 501.9,624.4 504.5,626.9 507.2,629.5 509.8,632.0 512.5,634.5 515.2,637.0 517.9,639.5 520.7,641.9 523.5,644.4 526.3,646.9 529.1,649.3 532.0,651.7 534.9,654.2 537.8,656.6 540.7,659.0 543.7,661.4 546.6,663.8 549.6,666.2 552.7,668.6 555.7,670.9 558.8,673.3 561.9,675.6 565.0,678.0 568.2,680.3 571.4,682.6 574.6,685.0 577.8,687.3 581.0,689.6 584.3,691.9 587.6,694.2 590.9,696.6 594.2,698.9 597.5,701.2 600.9,703.5 604.3,705.8 607.7,708.1 611.1,710.4 614.6,712.7 618.1,714.9 621.6,717.2 625.1,719.4 628.7,721.6 632.4,723.8 636.0,726.0 639.7,728.1 643.5,730.3 647.2,732.4 651.0,734.6 654.8,736.7 658.7,738.8 662.6,740.8 666.5,742.9 670.4,745.0 674.4,747.0 678.4,749.0 682.5,751.1" fill="none" stroke="#a00000" stroke-width="0.8" />
<polyline points="447.5,50.0 445.9,54.7 444.4,59.4 443.0,64.1 441.5,68.8 440.1,73.4 438.7,78.1 437.3,82.7 436.0,87.3 434.7,91.9 433.4,96.4 432.2,101.0 430.9,105.5 429.7,110.0 428.5,114.5 427.4,119.0 426.3,123.5 425.2,128.0 424.1,132.4 423.0,136.8 422.0,141.2 421.0,145.6 420.0,150.0 419.1,154.4 418.2,158.7 417.3,163.0 416.4,167.3 415.6,171.6 414.8,175.9 414.0,180.2 413.3,184.4 412.5,188.7 411.8,192.9 411.1,197.1 410.5,201.3 409.9,205.4 409.3,209.6 408.7,213.7 408.2,217.9 407.6,222.0 407.1,226.1 406.7,230.1 406.2,234.2 405.8,238.3 405.4,242.3 405.1,246.3 404.7,250.3 404.4,254.3 404.1,258.3 403.9,262.2 403.6,266.2 403.4,270.1 403.3,274.0 403.1,277.9 403.0,281.8 402.9,285.7 402.8,289.5 402.8,293.4 402.7,297.2 402.7,301.0 402.8,304.8 402.8,308.6 402.9,312.4 403.0,316.1 403.2,319.9 403.3,323.6 403.5,327.3 403.8,331.0 404.0,334.7 404.3,338.3 404.6,341.9 405.0,345.5 405.4,349.1 405.8,352.6 406.3,356.2 406.8,359.7 407.3,363.2 407.9,366.7 408.4,370.2 409.1,373.6 409.7,377.0 410.4,380.5 411.1,383.9 411.8,387.3 412.5,390.6 413.3,394.0 414.1,397.3 414.9,400.7 415.8,404.0 416.7,407.3 417.6,410.6 418.5,413.9 419.5,417.1 420.5,420.4 421.5,423.6 422.5,426.9 423.6,430.1 424.6,433.3 425.7,436.5 426.8,439.7 428.0,442.9 429.1,446.1 430.3,449.3 431.5,452.5 432.8,455.6 434.0,458.7 435.3,461.9 436.6,465.0 438.0,468.0 439.4,471.1 440.8,474.2 442.2,477.2 443.7,480.3 445.2,483.3 446.7,486.3 448.2,489.3 449.8,492.3 451.4,495.2 453.0,498.2 454.7,501.1 456.3,504.1 458.0,507.0 459.7,509.9 461.5,512.8 463.2,515.8 465.0,518.6 466.8,521.5 468.6,524.4 470.5,527.3 472.4,530.2 474.3,533.0 476.2,535.8 478.1,538.7 480.1,541.5 482.1,544.3 484.2,547.1 486.2,549.9 488.3,552.6 490.4,555.4 492.6,558.1 494.7,560.9 496.9,563.6 499.1,566.3 501.3,569.1 503.6,571.8 505.9,574.5 508.2,577.2 510.5,579.8 512.8,582.5 515.2,585.2 517.6,587.9 520.0,590.5 522.4,593.2 524.8,595.8 527.3,598.5 529.8,601.1 532.3,603.7 534.9,606.4 537.5,609.0 540.1,611.6 542.7,614.2 545.3,616.7 548.0,619.3 550.7,621.9 553.4,624.4 556.2,626.9 559.0,629.5 561.8,632.0 564.6,634.5 567.5,637.0 570.4,639.5 573.3,641.9 576.2,644.4 579.2,646.9 582.2,649.3 585.2,651.7 588.3,654.2 591.4,656.6 594.5,659.0 597.6,661.4 600.7,663.8 603.9,666.2 607.1,668.6 610.3,670.9 613.6,673.3 616.9,675.6 620.2,678.0 623.5,680.3 626.8,682.6 630.2,685.0 633.6,687.3 637.0,689.6 640.5,691.9 643.9,694.2 647.4,696.6 650.9,698.9 654.4,701.2 657.9,703.5 661.5,705.8 665.0,708.1 668.6,710.4 672.3,712.7 675.9,714.9 679.7,717.2 683.4,719.4 687.2,721.6 691.0,723.8 694.8,726.0 698.7,728.1 702.6,730.3 706.6,732.4 710.5,734.6 714.5,736.7 718.6,738.8 722.7,740.8 726.8,742.9 730.9,745.0 735.1,747.0 739.3,749.0 743.5,751.1" fill="none" stroke="#a00000" stroke-width="0.8" />
<polyline points="478.5,50.0 477.1,54.7 475.7,59.4 474.3,64.1 473.0,68.8 471.7,73.4 470.4,78.1 469.1,82.7 467.9,87.3 466.6,91.9 465.5,96.4 464.3,101.0 463.2,105.5 462.1,110.0 461.0,114.5 459.9,119.0 458.9,123.5 457.9,128.0 456.9,132.4 456.0,136.8 455.1,141.2 454.2,145.6 453.3,150.0 452.5,154.4 451.7,158.7 450.9,163.0 450.1,167.3 449.4,171.6 448.7,175.9 448.0,180.2 447.3,184.4 446.7,188.7 446.1,192.9 445.5,197.1 445.0,201.3 444.5,205.4 444.0,209.6 443.5,213.7 443.1,217.9 442.7,222.0 442.3,226.1 441.9,230.1 441.6,234.2 441.3,238.3 441.0,242.3 440.8,246.3 440.5,250.3 440.3,254.3 440.2,258.3 440.0,262.2 439.9,266.2 439.8,270.1 439.7,274.0 439.7,277.9 439.7,281.8 439.7,285.7 439.7,289.5 439.8,293.4 439.9,297.2 440.0,301.0 440.2,304.8 440.3,308.6 440.5,312.4 440.8,316.1 441.0,319.9 441.3,323.6 441.6,327.3 442.0,331.0 442.3,334.7 442.8,338.3 443.2,341.9 443.7,345.5 444.2,349.1 444.7,352.6 445.3,356.2 445.9,359.7 446.6,363.2 447.3,366.7 448.0,370.2 448.7,373.6 449.5,377.0 450.2,380.5 451.1,383.9 451.9,387.3 452.8,390.6 453.7,394.0 454.6,397.3 455.6,400.7 456.6,404.0 457.6,407.3 458.6,410.6 459.7,413.9 460.7,417.1 461.9,420.4 463.0,423.6 464.1,426.9 465.3,430.1 466.5,433.3 467.8,436.5 469.0,439.7 470.3,442.9 471.6,446.1 472.9,449.3 474.2,452.5 475.6,455.6 477.0,458.7 478.4,461.9 479.9,465.0 481.3,468.0 482.9,471.1 484.4,474.2 486.0,477.2 487.6,480.3 489.2,483.3 490.8,486.3 492.5,489.3 494.2,492.3 496.0,495.2 497.7,498.2 499.5,501.1 501.3,504.1 503.1,507.0 505.0,509.9 506.9,512.8 508.8,515.8 510.7,518.6 512.6,521.5 514.6,524.4 516.6,527.3 518.6,530.2 520.6,533.0 522.7,535.8 524.8,538.7 526.9,541.5 529.1,544.3 531.3,547.1 533.5,549.9 535.7,552.6 538.0,555.4 540.2,558.1 542.5,560.9 544.9,563.6 547.2,566.3 549.6,569.1 552.0,571.8 554.4,574.5 556.9,577.2 559.4,579.8 561.8,582.5 564.4,585.2 566.9,587.9 569.4,590.5 572.0,593.2 574.6,595.8 577.3,598.5 579.9,601.1 582.6,603.7 585.3,606.4 588.0,609.0 590.8,611.6 593.6,614.2 596.4,616.7 599.2,619.3 602.1,621.9 604.9,624.4 607.9,626.9 610.8,629.5 613.8,632.0 616.8,634.5 619.8,637.0 622.8,639.5 625.9,641.9 629.0,644.4 632.2,646.9 635.3,649.3 638.5,651.7 641.7,654.2 645.0,656.6 648.2,659.0 651.5,661.4 654.8,663.8 658.2,666.2 661.5,668.6 664.9,670.9 668.3,673.3 671.8,675.6 675.3,678.0 678.8,680.3 682.3,682.6 685.8,685.0 689.4,687.3 693.0,689.6 696.6,691.9 700.2,694.2 703.9,696.6 707.5,698.9 711.2,701.2 714.9,703.5 718.6,705.8 722.4,708.1 726.2,710.4 730.0,712.7 733.8,714.9 737.7,717.2 741.7,719.4 745.6,721.6 749.6,723.8 753.6,726.0 757.7,728.1 761.8,730.3 765.9,732.4 770.1,734.6 774.3,736.7 778.5,738.8 782.7,740.8 787.0,742.9 791.3,745.0 795.7,747.0 800.1,749.0 804.5,751.1" fill="none" stroke="#a00000" stroke-width="0.8" />
<polyline points="509.6,50.0 508.3,54.7 507.0,59.4 505.7,64.1 504.4,68.8 503.2,73.4 502.0,78.1 500.9,82.7 499.7,87.3 498.6,91.9 497.5,96.4 496.4,101.0 495.4,105.5 494.4,110.0 493.4,114.5 492.5,119.0 491.5,123.5 490.6,128.0 489.8,132.4 488.9,136.8 488.1,141.2 487.3,145.6 486.6,150.0 485.8,154.4 485.1,158.7 484.4,163.0 483.8,167.3 483.2,171.6 482.6,175.9 482.0,180.2 481.4,184.4 480.9,188.7 480.4,192.9 480.0,197.1 479.5,201.3 479.1,205.4 478.7,209.6 478.4,213.7 478.0,217.9 477.7,222.0 477.4,226.1 477.2,230.1 477.0,234.2 476.8,238.3 476.6,242.3 476.5,246.3 476.3,250.3 476.3,254.3 476.2,258.3 476.2,262.2 476.1,266.2 476.2,270.1 476.2,274.0 476.3,277.9 476.4,281.8 476.5,285.7 476.7,289.5 476.8,293.4 477.1,297.2 477.3,301.0 477.5,304.8 477.8,308.6 478.1,312.4 478.5,316.1 478.9,319.9 479.3,323.6 479.7,327.3 480.2,331.0 480.7,334.7 481.2,338.3 481.8,341.9 482.4,345.5 483.0,349.1 483.7,352.6 484.4,356.2 485.1,359.7 485.9,363.2 486.6,366.7 487.5,370.2 488.3,373.6 489.2,377.0 490.1,380.5 491.1,383.9 492.0,387.3 493.0,390.6 494.1,394.0 495.1,397.3 496.2,400.7 497.3,404.0 498.4,407.3 499.6,410.6 500.8,413.9 502.0,417.1 503.2,420.4 504.5,423.6 505.8,426.9 507.1,430.1 508.4,433.3 509.8,436.5 511.2,439.7 512.6,442.9 514.0,446.1 515.4,449.3 516.9,452.5 518.4,455.6 519.9,458.7 521.5,461.9 523.1,465.0 524.7,468.0 526.3,471.1 528.0,474.2 529.7,477.2 531.4,480.3 533.2,483.3 535.0,486.3 536.8,489.3 538.6,492.3 540.5,495.2 542.4,498.2 544.3,501.1 546.3,504.1 548.2,507.0 550.2,509.9 552.2,512.8 554.3,515.8 556.4,518.6 558.4,521.5 560.6,524.4 562.7,527.3 564.8,530.2 567.0,533.0 569.2,535.8 571.5,538.7 573.7,541.5 576.0,544.3 578.4,547.1 580.7,549.9 583.1,552.6 585.5,555.4 587.9,558.1 590.4,560.9 592.9,563.6 595.4,566.3 597.9,569.1 600.4,571.8 603.0,574.5 605.6,577.2 608.2,579.8 610.9,582.5 613.5,585.2 616.2,587.9 618.9,590.5 621.7,593.2 624.4,595.8 627.2,598.5 630.0,601.1 632.8,603.7 635.7,606.4 638.6,609.0 641.5,611.6 644.4,614.2 647.4,616.7 650.4,619.3 653.4,621.9 656.4,624.4 659.5,626.9 662.6,629.5 665.7,632.0 668.9,634.5 672.1,637.0 675.3,639.5 678.5,641.9 681.8,644.4 685.1,646.9 688.4,649.3 691.8,651.7 695.2,654.2 698.6,656.6 702.0,659.0 705.5,661.4 708.9,663.8 712.4,666.2 716.0,668.6 719.5,670.9 723.1,673.3 726.7,675.6 730.4,678.0 734.0,680.3 737.7,682.6 741.5,685.0 745.2,687.3 748.9,689.6 752.7,691.9 756.5,694.2 760.3,696.6 764.2,698.9 768.0,701.2 771.9,703.5 775.8,705.8 779.8,708.1 783.7,710.4 787.7,712.7 791.7,714.9 795.8,717.2 799.9,719.4 804.0,721.6 808.2,723.8 812.4,726.0 816.7,728.1 820.9,730.3 825.2,732.4 829.6,734.6 834.0,736.7 838.4,738.8 842.8,740.8 847.3,742.9 851.8,745.0 856.3,747.0 860.9,749.0 865.5,751.1" fill="none" stroke="#a00000" stroke-width="0.8" />
<polyline points="540.7,50.0 539.5,54.7 538.2,59.4 537.1,64.1 535.9,68.8 534.8,73.4 533.7,78.1 532.6,82.7 531.6,87.3 530.5,91.9 529.6,96.4 528.6,101.0 527.7,105.5 526.8,110.0 525.9,114.5 525.0,119.0 524.2,123.5 523.4,128.0 522.6,132.4 521.9,136.8 521.2,141.2 520.5,145.6 519.8,150.0 519.2,154.4 518.6,158.7 518.0,163.0 517.4,167.3 516.9,171.6 516.4,175.9 516.0,180.2 515.5,184.4 515.1,188.7 514.7,192.9 514.4,197.1 514.0,201.3 513.7,205.4 513.4,209.6 513.2,213.7 513.0,217.9 512.8,222.0 512.6,226.1 512.5,230.1 512.3,234.2 512.3,238.3 512.2,242.3 512.2,246.3 512.2,250.3 512.2,254.3 512.2,258.3 512.3,262.2 512.4,266.2 512.5,270.1 512.7,274.0 512.9,277.9 513.1,281.8 513.3,285.7 513.6,289.5 513.9,293.4 514.2,297.2 514.6,301.0 514.9,304.8 515.3,308.6 515.8,312.4 516.2,316.1 516.7,319.9 517.2,323.6 517.8,327.3 518.4,331.0 519.0,334.7 519.6,338.3 520.3,341.9 521.0,345.5 521.8,349.1 522.6,352.6 523.4,356.2 524.2,359.7 525.1,363.2 526.0,366.7 527.0,370.2 528.0,373.6 529.0,377.0 530.0,380.5 531.1,383.9 532.2,387.3 533.3,390.6 534.4,394.0 535.6,397.3 536.8,400.7 538.1,404.0 539.3,407.3 540.6,410.6 541.9,413.9 543.3,417.1 544.6,420.4 546.0,423.6 547.4,426.9 548.9,430.1 550.3,433.3 551.8,436.5 553.3,439.7 554.8,442.9 556.4,446.1 558.0,449.3 559.6,452.5 561.2,455.6 562.9,458.7 564.5,461.9 566.3,465.0 568.0,468.0 569.8,471.1 571.6,474.2 573.5,477.2 575.3,480.3 577.2,483.3 579.1,486.3 581.1,489.3 583.1,492.3 585.1,495.2 587.1,498.2 589.2,501.1 591.2,504.1 593.3,507.0 595.5,509.9 597.6,512.8 599.8,515.8 602.0,518.6 604.3,521.5 606.5,524.4 608.8,527.3 611.1,530.2 613.4,533.0 615.8,535.8 618.1,538.7 620.6,541.5 623.0,544.3 625.5,547.1 628.0,549.9 630.5,552.6 633.0,555.4 635.6,558.1 638.2,560.9 640.8,563.6 643.5,566.3 646.2,569.1 648.9,571.8 651.6,574.5 654.3,577.2 657.1,579.8 659.9,582.5 662.7,585.2 665.5,587.9 668.4,590.5 671.3,593.2 674.2,595.8 677.1,598.5 680.1,601.1 683.1,603.7 686.1,606.4 689.1,609.0 692.2,611.6 695.3,614.2 698.4,616.7 701.6,619.3 704.7,621.9 707.9,624.4 711.2,626.9 714.4,629.5 717.7,632.0 721.0,634.5 724.4,637.0 727.8,639.5 731.2,641.9 734.6,644.4 738.1,646.9 741.6,649.3 745.1,651.7 748.6,654.2 752.2,656.6 755.8,659.0 759.4,661.4 763.0,663.8 766.7,666.2 770.4,668.6 774.1,670.9 777.9,673.3 781.7,675.6 785.5,678.0 789.3,680.3 793.2,682.6 797.1,685.0 801.0,687.3 804.9,689.6 808.9,691.9 812.8,694.2 816.8,696.6 820.8,698.9 824.9,701.2 828.9,703.5 833.0,705.8 837.1,708.1 841.3,710.4 845.4,712.7 849.6,714.9 853.9,717.2 858.2,719.4 862.5,721.6 866.8,723.8 871.2,726.0 875.6,728.1 880.1,730.3 884.6,732.4 889.1,734.6 893.7,736.7 898.3,738.8 902.9,740.8 907.5,742.9 912.2,745.0 917.0,747.0 921.7,749.0 926.5,751.1" fill="none" stroke="#a00000" stroke-width="0.8" />
<polyline points="571.8,50.0 570.6,54.7 569.5,59.4 568.4,64.1 567.4,68.8 566.3,73.4 565.3,78.1 564.4,82.7 563.4,87.3 562.5,91.9 561.6,96.4 560.7,101.0 559.9,105.5 559.1,110.0 558.3,114.5 557.6,119.0 556.8,123.5 556.1,128.0 555.5,132.4 554.8,136.8 554.2,141.2 553.6,145.6 553.1,150.0 552.5,154.4 552.0,158.7 551.6,163.0 551.1,167.3 550.7,171.6 550.3,175.9 549.9,180.2 549.6,184.4 549.3,188.7 549.0,192.9 548.8,197.1 548.5,201.3 548.3,205.4 548.2,209.6 548.0,213.7 547.9,217.9 547.8,222.0 547.7,226.1 547.7,230.1 547.7,234.2 547.7,238.3 547.8,242.3 547.9,246.3 548.0,250.3 548.1,254.3 548.3,258.3 548.4,262.2 548.7,266.2 548.9,270.1 549.2,274.0 549.5,277.9 549.8,281.8 550.1,285.7 550.5,289.5 550.9,293.4 551.4,297.2 551.8,301.0 552.3,304.8 552.8,308.6 553.4,312.4 554.0,316.1 554.6,319.9 555.2,323.6 555.9,327.3 556.6,331.0 557.3,334.7 558.1,338.3 558.9,341.9 559.7,345.5 560.6,349.1 561.5,352.6 562.4,356.2 563.4,359.7 564.4,363.2 565.4,366.7 566.5,370.2 567.6,373.6 568.7,377.0 569.9,380.5 571.1,383.9 572.3,387.3 573.5,390.6 574.8,394.0 576.1,397.3 577.5,400.7 578.8,404.0 580.2,407.3 581.6,410.6 583.1,413.9 584.5,417.1 586.0,420.4 587.5,423.6 589.1,426.9 590.6,430.1 592.2,433.3 593.8,436.5 595.5,439.7 597.1,442.9 598.8,446.1 600.5,449.3 602.2,452.5 604.0,455.6 605.8,458.7 607.6,461.9 609.5,465.0 611.4,468.0 613.3,471.1 615.2,474.2 617.2,477.2 619.2,480.3 621.2,483.3 623.3,486.3 625.4,489.3 627.5,492.3 629.6,495.2 631.8,498.2 634.0,501.1 636.2,504.1 638.5,507.0 640.7,509.9 643.0,512.8 645.4,515.8 647.7,518.6 650.1,521.5 652.5,524.4 654.9,527.3 657.3,530.2 659.8,533.0 662.3,535.8 664.8,538.7 667.4,541.5 670.0,544.3 672.6,547.1 675.2,549.9 677.9,552.6 680.6,555.4 683.3,558.1 686.0,560.9 688.8,563.6 691.6,566.3 694.4,569.1 697.3,571.8 700.2,574.5 703.1,577.2 706.0,579.8 708.9,582.5 711.9,585.2 714.9,587.9 717.9,590.5 720.9,593.2 724.0,595.8 727.1,598.5 730.2,601.1 733.3,603.7 736.5,606.4 739.7,609.0 742.9,611.6 746.2,614.2 749.4,616.7 752.8,619.3 756.1,621.9 759.4,624.4 762.8,626.9 766.3,629.5 769.7,632.0 773.2,634.5 776.7,637.0 780.2,639.5 783.8,641.9 787.4,644.4 791.0,646.9 794.7,649.3 798.3,651.7 802.1,654.2 805.8,656.6 809.5,659.0 813.3,661.4 817.1,663.8 821.0,666.2 824.8,668.6 828.7,670.9 832.7,673.3 836.6,675.6 840.6,678.0 844.6,680.3 848.6,682.6 852.7,685.0 856.8,687.3 860.9,689.6 865.0,691.9 869.2,694.2 873.3,696.6 877.5,698.9 881.7,701.2 885.9,703.5 890.2,705.8 894.5,708.1 898.8,710.4 903.1,712.7 907.5,714.9 911.9,717.2 916.4,719.4 920.9,721.6 925.4,723.8 930.0,726.0 934.6,728.1 939.3,730.3 943.9,732.4 948.6,734.6 953.4,736.7 958.1,738.8 963.0,740.8 967.8,742.9 972.7,745.0 977.6,747.0 982.5,749.0 987.5,751.1" fill="none" stroke="#a00000" stroke-width="0.8" />
<polyline points="72.2,751.1 71.8,750.7 71.4,750.4 71.0,750.0 70.7,749.6 70.3,749.3 69.9,748.9 69.6,748.6 69.2,748.2 68.8,747.9 68.4,747.5 68.1,747.1 67.7,746.8 67.3,746.4 67.0,746.0 66.6,745.7 66.2,745.3 65.8,744.9 65.5,744.5 65.1,744.2 64.7,743.8 64.4,743.4 64.0,743.1 63.6,742.7 63.2,742.3 62.9,741.9 62.5,741.5 62.1,741.2 61.8,740.8 61.4,740.4 61.0,740.0 60.7,739.6 60.3,739.2 59.9,738.8 59.5,738.4 59.2,738.1 58.8,737.7 58.4,737.3 58.1,736.9 57.7,736.5 57.3,736.1 57.0,735.7 56.6,735.3 56.2,734.9 55.8,734.5 55.5,734.1 55.1,733.7 54.7,733.2 54.4,732.8 54.0,732.4 53.6,732.0 53.3,731.6 52.9,731.2 52.5,730.8 52.2,730.4 51.8,729.9 51.4,729.5 51.1,729.1 50.7,728.7 50.3,728.2 50.0,727.8 49.6,727.4 49.2,727.0 48.9,726.5 48.5,726.1 48.1,725.7 47.8,725.2 47.4,724.8 47.0,724.4 46.7,723.9 46.3,723.5 45.9,723.0 45.6,722.6 45.2,722.2 44.8,721.7 44.5,721.3 44.1,720.8 43.7,720.4 43.4,719.9 43.0,719.5 42.7,719.0 42.3,718.5 41.9,718.1 41.6,717.6 41.2,717.2 40.8,716.7 40.5,716.2 40.1,715.8 39.8,715.3 39.4,714.8 39.1,714.3 38.7,713.9 38.3,713.4 38.0,712.9 37.6,712.4 37.3,711.9 36.9,711.5 36.6,711.0 36.2,710.5 35.8,710.0 35.5,709.5 35.1,709.0 34.8,708.5 34.4,708.0 34.1,707.5 33.7,707.0 33.4,706.5 33.0,706.0 32.7,705.5 32.3,705.0 32.0,704.5 31.6,704.0 31.3,703.5 30.9,702.9 30.5,702.4 30.2,701.9 29.8,701.4 29.5,700.9 29.1,700.4 28.8,699.8 28.4,699.3 28.1,698.8 27.7,698.3 27.4,697.7 27.0,697.2 26.7,696.7 26.3,696.1 25.9,695.6 25.6,695.1 25.2,694.5 24.9,694.0 24.5,693.5 24.2,692.9 23.8,692.4 23.4,691.8 23.1,691.3 22.7,690.8 22.4,690.2 22.0,689.7 21.7,689.1 21.3,688.6 20.9,688.0 20.6,687.5 20.2,686.9 19.9,686.3 19.5,685.8 19.1,685.2 18.8,684.7 18.4,684.1 18.1,683.5 17.7,683.0 17.3,682.4 17.0,681.8 16.6,681.3 16.3,680.7 15.9,680.1 15.5,679.5 15.2,678.9 14.8,678.4 14.5,677.8 14.1,677.2 13.7,676.6 13.4,676.0 13.0,675.4 12.7,674.8 12.3,674.2 12.0,673.6 11.6,673.0 11.2,672.4 10.9,671.8 10.5,671.2 10.2,670.6 9.8,670.0 9.5,669.4 9.1,668.8 8.8,668.1 8.4,667.5 8.1,666.9 7.7,666.3 7.3,665.6 7.0,665.0 6.6,664.4 6.3,663.7 5.9,663.1 5.6,662.4 5.2,661.8 4.9,661.2 4.5,660.5 4.2,659.9 3.8,659.2 3.5,658.5 3.2,657.9 2.8,657.2 2.5,656.6 2.1,655.9 1.8,655.2 1.4,654.6 1.1,653.9 0.7,653.2 0.4,652.5 0.0,651.8 -0.3,651.2 -0.7,650.5 -1.0,649.8 -1.3,649.1 -1.7,648.4 -2.0,647.7 -2.4,647.0 -2.7,646.3 -3.0,645.6 -3.4,644.9 -3.7,644.2 -4.1,643.5 -4.4,642.7 -4.7,642.0 -5.1,641.3 -5.4,640.6 -5.7,639.8 -6.1,639.1 -6.4,638.4 -6.7,637.6 -7.1,636.9 -7.4,636.1 -7.7,635.4 -8.0,634.6 -8.4,633.8 -8.7,633.1 -9.0,632.3 -9.4,631.6 -9.7,630.8 -10.0,630.0 -10.3,629.2 -10.6,628.4 -11.0,627.6 -11.3,626.9 -11.6,626.1 -11.9,625.3 -12.2,624.5 -12.5,623.6 -12.8,622.8 -13.1,622.0 -13.5,621.2 -13.8,620.4 -14.1,619.6 -14.4,618.7 -14.7,617.9 -15.0,617.1 -15.3,616.2 -15.6,615.4 -15.9,614.5 -16.2,613.7 -16.5,612.8 -16.8,611.9 -17.1,611.1 -17.4,610.2 -17.7,609.3 -18.0,608.4 -18.3,607.6 -18.6,606.7 -18.8,605.8 -19.1,604.9 -19.4,604.0 -19.7,603.1 -20.0,602.2 -20.3,601.3 -20.6,600.3 -20.8,599.4 -21.1,598.5 -21.4,597.6 -21.7,596.6 -21.9,595.7 -22.2,594.7 -22.5,593.8 -22.8,592.8 -23.0,591.9 -23.3,590.9 -23.6,589.9 -23.8,589.0 -24.1,588.0 -24.4,587.0 -24.6,586.0 -24.9,585.0 -25.1,584.0 -25.4,583.0 -25.7,582.0 -25.9,581.0 -26.2,580.0 -26.4,578.9 -26.7,577.9 -26.9,576.9 -27.2,575.8 -27.4,574.8 -27.7,573.7 -27.9,572.7 -28.2,571.6 -28.4,570.6 -28.6,569.5 -28.9,568.4 -29.1,567.3 -29.3,566.2 -29.6,565.1 -29.8,564.0 -30.0,562.9 -30.3,561.8 -30.5,560.7 -30.7,559.6 -30.9,558.4 -31.2,557.3 -31.4,556.2 -31.6,555.0 -31.8,553.8 -32.0,552.7 -32.2,551.5 -32.4,550.3 -32.6,549.1 -32.8,547.9 -33.0,546.7 -33.2,545.5 -33.4,544.3 -33.6,543.1 -33.7,541.8 -33.9,540.6 -34.1,539.3 -34.3,538.1 -34.4,536.8 -34.6,535.5 -34.7,534.2 -34.9,532.9 -35.1,531.6 -35.2,530.3 -35.3,529.0 -35.5,527.7 -35.6,526.3 -35.8,525.0 -35.9,523.6 -36.0,522.3 -36.1,520.9 -36.3,519.5 -36.4,518.1 -36.5,516.7 -36.6,515.3 -36.7,513.9 -36.8,512.4 -36.9,511.0 -37.0,509.5 -37.1,508.1 -37.2,506.6 -37.3,505.1 -37.3,503.6 -37.4,502.1 -37.5,500.6 -37.5,499.1 -37.6,497.6 -37.6,496.0 -37.7,494.5 -37.7,492.9 -37.8,491.3 -37.8,489.7 -37.8,488.1 -37.8,486.5 -37.9,484.8 -37.9,483.2 -37.9,481.5 -37.9,479.9 -37.8,478.2 -37.8,476.5 -37.8,474.8 -37.8,473.0 -37.7,471.3 -37.7,469.5 -37.6,467.7 -37.5,465.9 -37.5,464.1 -37.4,462.3 -37.3,460.4 -37.2,458.6 -37.1,456.7 -36.9,454.8 -36.8,452.9 -36.7,451.0 -36.5,449.0 -36.3,447.0 -36.2,445.0 -36.0,443.0 -35.8,441.0 -35.6,439.0 -35.4,436.9 -35.2,434.8 -35.0,432.8 -34.7,430.6 -34.5,428.5 -34.2,426.4 -34.0,424.2 -33.7,422.0 -33.4,419.8 -33.2,417.6 -32.8,415.3 -32.5,413.0 -32.2,410.7 -31.9,408.4 -31.5,406.1 -31.1,403.7 -30.8,401.3 -30.4,398.9 -30.0,396.5 -29.5,394.0 -29.1,391.5 -28.6,388.9 -28.2,386.4 -27.7,383.8 -27.2,381.2 -26.6,378.5 -26.1,375.9 -25.5,373.1 -24.9,370.4 -24.3,367.6 -23.7,364.8 -23.0,361.9 -22.4,359.0 -21.7,356.1 -20.9,353.1 -20.2,350.1 -19.4,347.1 -18.6,344.0 -17.8,340.8 -16.9,337.7 -16.0,334.4 -15.1,331.1 -14.1,327.8 -13.1,324.4 -12.1,321.0 -11.0,317.5 -9.9,314.0 -8.8,310.4 -7.6,306.8 -6.4,303.1 -5.2,299.4 -3.9,295.6 -2.6,291.7" fill="none" stroke="#0000a0" stroke-width="0.8" />
<polyline points="132.8,751.1 132.4,750.7 132.0,750.4 131.6,750.0 131.2,749.6 130.8,749.3 130.4,748.9 130.0,748.6 129.6,748.2 129.3,747.9 128.9,747.5 128.5,747.1 128.1,746.8 127.7,746.4 127.3,746.0 126.9,745.7 126.5,745.3 126.1,744.9 125.7,744.5 125.3,744.2 125.0,743.8 124.6,743.4 124.2,743.1 123.8,742.7 123.4,742.3 123.0,741.9 122.6,741.5 122.2,741.2 121.8,740.8 121.4,740.4 121.0,740.0 120.6,739.6 120.2,739.2 119.9,738.8 119.5,738.4 119.1,738.1 118.7,737.7 118.3,737.3 117.9,736.9 117.5,736.5 117.1,736.1 116.7,735.7 116.3,735.3 115.9,734.9 115.5,734.5 115.1,734.1 114.7,733.7 114.3,733.2 114.0,732.8 113.6,732.4 113.2,732.0 112.8,731.6 112.4,731.2 112.0,730.8 111.6,730.4 111.2,729.9 110.8,729.5 110.4,729.1 110.0,728.7 109.6,728.2 109.2,727.8 108.8,727.4 108.4,727.0 108.0,726.5 107.7,726.1 107.3,725.7 106.9,725.2 106.5,724.8 106.1,724.4 105.7,723.9 105.3,723.5 104.9,723.0 104.5,722.6 104.1,722.2 103.7,721.7 103.3,721.3 102.9,720.8 102.5,720.4 102.2,719.9 101.8,719.5 101.4,719.0 101.0,718.5 100.6,718.1 100.2,717.6 99.8,717.2 99.4,716.7 99.0,716.2 98.6,715.8 98.2,715.3 97.9,714.8 97.5,714.3 97.1,713.9 96.7,713.4 96.3,712.9 95.9,712.4 95.5,711.9 95.1,711.5 94.8,711.0 94.4,710.5 94.0,710.0 93.6,709.5 93.2,709.0 92.8,708.5 92.4,708.0 92.0,707.5 91.7,707.0 91.3,706.5 90.9,706.0 90.5,705.5 90.1,705.0 89.7,704.5 89.3,704.0 89.0,703.5 88.6,702.9 88.2,702.4 87.8,701.9 87.4,701.4 87.0,700.9 86.6,700.4 86.2,699.8 85.9,699.3 85.5,698.8 85.1,698.3 84.7,697.7 84.3,697.2 83.9,696.7 83.5,696.1 83.1,695.6 82.7,695.1 82.3,694.5 81.9,694.0 81.6,693.5 81.2,692.9 80.8,692.4 80.4,691.8 80.0,691.3 79.6,690.8 79.2,690.2 78.8,689.7 78.4,689.1 78.0,688.6 77.6,688.0 77.2,687.5 76.8,686.9 76.4,686.3 76.0,685.8 75.6,685.2 75.2,684.7 74.8,684.1 74.4,683.5 74.0,683.0 73.6,682.4 73.2,681.8 72.8,681.3 72.4,680.7 72.0,680.1 71.6,679.5 71.2,678.9 70.8,678.4 70.4,677.8 70.0,677.2 69.6,676.6 69.2,676.0 68.8,675.4 68.4,674.8 68.0,674.2 67.6,673.6 67.2,673.0 66.9,672.4 66.5,671.8 66.1,671.2 65.7,670.6 65.3,670.0 64.9,669.4 64.5,668.8 64.1,668.1 63.7,667.5 63.3,666.9 62.9,666.3 62.5,665.6 62.1,665.0 61.7,664.4 61.3,663.7 60.9,663.1 60.5,662.4 60.1,661.8 59.7,661.2 59.4,660.5 59.0,659.9 58.6,659.2 58.2,658.5 57.8,657.9 57.4,657.2 57.0,656.6 56.6,655.9 56.2,655.2 55.8,654.6 55.4,653.9 55.0,653.2 54.7,652.5 54.3,651.8 53.9,651.2 53.5,650.5 53.1,649.8 52.7,649.1 52.3,648.4 51.9,647.7 51.5,647.0 51.2,646.3 50.8,645.6 50.4,644.9 50.0,644.2 49.6,643.5 49.2,642.7 48.9,642.0 48.5,641.3 48.1,640.6 47.7,639.8 47.3,639.1 46.9,638.4 46.6,637.6 46.2,636.9 45.8,636.1 45.4,635.4 45.1,634.6 44.7,633.8 44.3,633.1 43.9,632.3 43.6,631.6 43.2,630.8 42.8,630.0 42.5,629.2 42.1,628.4 41.7,627.6 41.3,626.9 41.0,626.1 40.6,625.3 40.3,624.5 39.9,623.6 39.5,622.8 39.2,622.0 38.8,621.2 38.4,620.4 38.1,619.6 37.7,618.7 37.4,617.9 37.0,617.1 36.7,616.2 36.3,615.4 36.0,614.5 35.6,613.7 35.3,612.8 34.9,611.9 34.6,611.1 34.2,610.2 33.9,609.3 33.5,608.4 33.2,607.6 32.8,606.7 32.5,605.8 32.1,604.9 31.8,604.0 31.5,603.1 31.1,602.2 30.8,601.3 30.5,600.3 30.1,599.4 29.8,598.5 29.5,597.6 29.1,596.6 28.8,595.7 28.5,594.7 28.1,593.8 27.8,592.8 27.5,591.9 27.2,590.9 26.8,589.9 26.5,589.0 26.2,588.0 25.9,587.0 25.5,586.0 25.2,585.0 24.9,584.0 24.6,583.0 24.3,582.0 24.0,581.0 23.7,580.0 23.3,578.9 23.0,577.9 22.7,576.9 22.4,575.8 22.1,574.8 21.8,573.7 21.5,572.7 21.2,571.6 20.9,570.6 20.6,569.5 20.3,568.4 20.0,567.3 19.7,566.2 19.4,565.1 19.1,564.0 18.8,562.9 18.5,561.8 18.3,560.7 18.0,559.6 17.7,558.4 17.4,557.3 17.1,556.2 16.9,555.0 16.6,553.8 16.3,552.7 16.1,551.5 15.8,550.3 15.5,549.1 15.3,547.9 15.0,546.7 14.8,545.5 14.5,544.3 14.3,543.1 14.0,541.8 13.8,540.6 13.5,539.3 13.3,538.1 13.1,536.8 12.8,535.5 12.6,534.2 12.4,532.9 12.2,531.6 12.0,530.3 11.7,529.0 11.5,527.7 11.3,526.3 11.1,525.0 10.9,523.6 10.7,522.3 10.6,520.9 10.4,519.5 10.2,518.1 10.0,516.7 9.8,515.3 9.6,513.9 9.5,512.4 9.3,511.0 9.1,509.5 9.0,508.1 8.8,506.6 8.7,505.1 8.5,503.6 8.4,502.1 8.2,500.6 8.1,499.1 8.0,497.6 7.8,496.0 7.7,494.5 7.6,492.9 7.5,491.3 7.4,489.7 7.3,488.1 7.2,486.5 7.1,484.8 7.0,483.2 6.9,481.5 6.9,479.9 6.8,478.2 6.8,476.5 6.7,474.8 6.7,473.0 6.6,471.3 6.6,469.5 6.6,467.7 6.6,465.9 6.6,464.1 6.6,462.3 6.6,460.4 6.6,458.6 6.7,456.7 6.7,454.8 6.8,452.9 6.8,451.0 6.9,449.0 7.0,447.0 7.1,445.0 7.2,443.0 7.3,441.0 7.4,439.0 7.5,436.9 7.6,434.8 7.7,432.8 7.9,430.6 8.0,428.5 8.2,426.4 8.4,424.2 8.6,422.0 8.7,419.8 9.0,417.6 9.2,415.3 9.4,413.0 9.6,410.7 9.9,408.4 10.1,406.1 10.4,403.7 10.7,401.3 11.0,398.9 11.3,396.5 11.6,394.0 12.0,391.5 12.4,388.9 12.7,386.4 13.1,383.8 13.5,381.2 14.0,378.5 14.4,375.9 14.9,373.1 15.4,370.4 15.9,367.6 16.4,364.8 17.0,361.9 17.6,359.0 18.2,356.1 18.8,353.1 19.4,350.1 20.1,347.1 20.8,344.0 21.5,340.8 22.3,337.7 23.1,334.4 23.9,331.1 24.8,327.8 25.7,324.4 26.6,321.0 27.5,317.5 28.5,314.0 29.6,310.4 30.6,306.8 31.7,303.1 32.8,299.4 33.9,295.6 35.1,291.7 36.3,287.8 37.6,283.9 38.9,279.8 40.2,275.7 41.6,271.6 43.0,267.4 44.5,263.1 46.0,258.8 47.5,254.4 49.1,249.9 50.8,245.3 52.5,240.7 54.2,236.0" fill="none" stroke="#0000a0" stroke-width="0.8" />
<polyline points="192.9,751.1 192.5,750.7 192.1,750.4 191.7,750.0 191.3,749.6 190.9,749.3 190.5,748.9 190.1,748.6 189.7,748.2 189.3,747.9 189.0,747.5 188.6,747.1 188.2,746.8 187.8,746.4 187.4,746.0 187.0,745.7 186.6,745.3 186.2,744.9 185.8,744.5 185.4,744.2 185.0,743.8 184.6,743.4 184.2,743.1 183.8,742.7 183.4,742.3 183.0,741.9 182.6,741.5 182.2,741.2 181.8,740.8 181.4,740.4 181.0,740.0 180.6,739.6 180.2,739.2 179.8,738.8 179.4,738.4 179.0,738.1 178.6,737.7 178.2,737.3 177.8,736.9 177.4,736.5 177.0,736.1 176.6,735.7 176.2,735.3 175.8,734.9 175.4,734.5 175.0,734.1 174.6,733.7 174.2,733.2 173.8,732.8 173.4,732.4 173.0,732.0 172.6,731.6 172.2,731.2 171.8,730.8 171.4,730.4 171.0,729.9 170.6,729.5 170.2,729.1 169.7,728.7 169.3,728.2 168.9,727.8 168.5,727.4 168.1,727.0 167.7,726.5 167.3,726.1 166.9,725.7 166.5,725.2 166.1,724.8 165.7,724.4 165.3,723.9 164.9,723.5 164.4,723.0 164.0,722.6 163.6,722.2 163.2,721.7 162.8,721.3 162.4,720.8 162.0,720.4 161.6,719.9 161.2,719.5 160.8,719.0 160.3,718.5 159.9,718.1 159.5,717.6 159.1,717.2 158.7,716.7 158.3,716.2 157.9,715.8 157.5,715.3 157.1,714.8 156.7,714.3 156.2,713.9 155.8,713.4 155.4,712.9 155.0,712.4 154.6,711.9 154.2,711.5 153.8,711.0 153.4,710.5 153.0,710.0 152.6,709.5 152.2,709.0 151.7,708.5 151.3,708.0 150.9,707.5 150.5,707.0 150.1,706.5 149.7,706.0 149.3,705.5 148.9,705.0 148.5,704.5 148.1,704.0 147.6,703.5 147.2,702.9 146.8,702.4 146.4,701.9 146.0,701.4 145.6,700.9 145.2,700.4 144.7,699.8 144.3,699.3 143.9,698.8 143.5,698.3 143.1,697.7 142.7,697.2 142.2,696.7 141.8,696.1 141.4,695.6 141.0,695.1 140.6,694.5 140.1,694.0 139.7,693.5 139.3,692.9 138.9,692.4 138.5,691.8 138.0,691.3 137.6,690.8 137.2,690.2 136.7,689.7 136.3,689.1 135.9,688.6 135.5,688.0 135.0,687.5 134.6,686.9 134.2,686.3 133.7,685.8 133.3,685.2 132.9,684.7 132.5,684.1 132.0,683.5 131.6,683.0 131.2,682.4 130.7,681.8 130.3,681.3 129.9,680.7 129.4,680.1 129.0,679.5 128.6,678.9 128.1,678.4 127.7,677.8 127.3,677.2 126.8,676.6 126.4,676.0 126.0,675.4 125.5,674.8 125.1,674.2 124.7,673.6 124.2,673.0 123.8,672.4 123.4,671.8 122.9,671.2 122.5,670.6 122.1,670.0 121.6,669.4 121.2,668.8 120.7,668.1 120.3,667.5 119.9,666.9 119.4,666.3 119.0,665.6 118.6,665.0 118.2,664.4 117.7,663.7 117.3,663.1 116.9,662.4 116.4,661.8 116.0,661.2 115.6,660.5 115.1,659.9 114.7,659.2 114.3,658.5 113.8,657.9 113.4,657.2 113.0,656.6 112.5,655.9 112.1,655.2 111.7,654.6 111.2,653.9 110.8,653.2 110.4,652.5 109.9,651.8 109.5,651.2 109.1,650.5 108.6,649.8 108.2,649.1 107.8,648.4 107.3,647.7 106.9,647.0 106.5,646.3 106.0,645.6 105.6,644.9 105.2,644.2 104.7,643.5 104.3,642.7 103.9,642.0 103.5,641.3 103.0,640.6 102.6,639.8 102.2,639.1 101.8,638.4 101.3,637.6 100.9,636.9 100.5,636.1 100.1,635.4 99.6,634.6 99.2,633.8 98.8,633.1 98.4,632.3 97.9,631.6 97.5,630.8 97.1,630.0 96.7,629.2 96.3,628.4 95.9,627.6 95.4,626.9 95.0,626.1 94.6,625.3 94.2,624.5 93.8,623.6 93.4,622.8 93.0,622.0 92.5,621.2 92.1,620.4 91.7,619.6 91.3,618.7 90.9,617.9 90.5,617.1 90.1,616.2 89.7,615.4 89.3,614.5 88.9,613.7 88.5,612.8 88.1,611.9 87.7,611.1 87.3,610.2 86.9,609.3 86.5,608.4 86.1,607.6 85.7,606.7 85.3,605.8 84.9,604.9 84.5,604.0 84.1,603.1 83.7,602.2 83.3,601.3 82.9,600.3 82.5,599.4 82.2,598.5 81.8,597.6 81.4,596.6 81.0,595.7 80.6,594.7 80.2,593.8 79.8,592.8 79.5,591.9 79.1,590.9 78.7,589.9 78.3,589.0 77.9,588.0 77.6,587.0 77.2,586.0 76.8,585.0 76.4,584.0 76.1,583.0 75.7,582.0 75.3,581.0 74.9,580.0 74.6,578.9 74.2,577.9 73.8,576.9 73.5,575.8 73.1,574.8 72.7,573.7 72.4,572.7 72.0,571.6 71.6,570.6 71.3,569.5 70.9,568.4 70.6,567.3 70.2,566.2 69.9,565.1 69.5,564.0 69.2,562.9 68.8,561.8 68.5,560.7 68.1,559.6 67.8,558.4 67.4,557.3 67.1,556.2 66.7,555.0 66.4,553.8 66.1,552.7 65.7,551.5 65.4,550.3 65.1,549.1 64.8,547.9 64.4,546.7 64.1,545.5 63.8,544.3 63.5,543.1 63.2,541.8 62.9,540.6 62.6,539.3 62.3,538.1 62.0,536.8 61.7,535.5 61.4,534.2 61.1,532.9 60.8,531.6 60.5,530.3 60.2,529.0 60.0,527.7 59.7,526.3 59.4,525.0 59.1,523.6 58.9,522.3 58.6,520.9 58.4,519.5 58.1,518.1 57.8,516.7 57.6,515.3 57.3,513.9 57.1,512.4 56.9,511.0 56.6,509.5 56.4,508.1 56.2,506.6 55.9,505.1 55.7,503.6 55.5,502.1 55.3,500.6 55.1,499.1 54.9,497.6 54.7,496.0 54.5,494.5 54.3,492.9 54.1,491.3 53.9,489.7 53.7,488.1 53.6,486.5 53.4,484.8 53.2,483.2 53.1,481.5 52.9,479.9 52.8,478.2 52.7,476.5 52.5,474.8 52.4,473.0 52.3,471.3 52.2,469.5 52.1,467.7 52.0,465.9 51.9,464.1 51.8,462.3 51.8,460.4 51.7,458.6 51.7,456.7 51.6,454.8 51.6,452.9 51.6,451.0 51.6,449.0 51.6,447.0 51.6,445.0 51.6,443.0 51.6,441.0 51.6,439.0 51.6,436.9 51.7,434.8 51.7,432.8 51.8,430.6 51.9,428.5 51.9,426.4 52.0,424.2 52.1,422.0 52.2,419.8 52.3,417.6 52.4,415.3 52.6,413.0 52.7,410.7 52.9,408.4 53.0,406.1 53.2,403.7 53.4,401.3 53.6,398.9 53.8,396.5 54.1,394.0 54.3,391.5 54.6,388.9 54.9,386.4 55.2,383.8 55.5,381.2 55.8,378.5 56.2,375.9 56.5,373.1 56.9,370.4 57.3,367.6 57.7,364.8 58.2,361.9 58.7,359.0 59.2,356.1 59.7,353.1 60.2,350.1 60.8,347.1 61.4,344.0 62.0,340.8 62.7,337.7 63.3,334.4 64.1,331.1 64.8,327.8 65.6,324.4 66.4,321.0 67.2,317.5 68.1,314.0 69.0,310.4 69.9,306.8 70.9,303.1 71.9,299.4 72.9,295.6 74.0,291.7 75.1,287.8 76.2,283.9 77.4,279.8 78.6,275.7 79.9,271.6 81.2,267.4 82.5,263.1 83.9,258.8 85.3,254.4 86.8,249.9 88.3,245.3 89.9,240.7 91.5,236.0 93.1,231.2 94.9,226.3 96.6,221.3 98.5,216.3 100.4,211.1 102.4,205.9 104.4,200.5 106.5,195.1 108.6,189.6 110.9,183.9 113.2,178.1" fill="none" stroke="#0000a0" stroke-width="0.8" />
<polyline points="252.1,751.1 251.8,750.7 251.4,750.4 251.1,750.0 250.7,749.6 250.3,749.3 250.0,748.9 249.6,748.6 249.2,748.2 248.9,747.9 248.5,747.5 248.1,747.1 247.8,746.8 247.4,746.4 247.0,746.0 246.7,745.7 246.3,745.3 245.9,744.9 245.5,744.5 245.2,744.2 244.8,743.8 244.4,743.4 244.1,743.1 243.7,742.7 243.3,742.3 242.9,741.9 242.6,741.5 242.2,741.2 241.8,740.8 241.4,740.4 241.0,740.0 240.7,739.6 240.3,739.2 239.9,738.8 239.5,738.4 239.1,738.1 238.8,737.7 238.4,737.3 238.0,736.9 237.6,736.5 237.2,736.1 236.8,735.7 236.4,735.3 236.1,734.9 235.7,734.5 235.3,734.1 234.9,733.7 234.5,733.2 234.1,732.8 233.7,732.4 233.3,732.0 233.0,731.6 232.6,731.2 232.2,730.8 231.8,730.4 231.4,729.9 231.0,729.5 230.6,729.1 230.2,728.7 229.8,728.2 229.4,727.8 229.0,727.4 228.6,727.0 228.2,726.5 227.8,726.1 227.4,725.7 227.0,725.2 226.6,724.8 226.2,724.4 225.8,723.9 225.4,723.5 225.0,723.0 224.6,722.6 224.2,722.2 223.8,721.7 223.4,721.3 223.0,720.8 222.6,720.4 222.2,719.9 221.8,719.5 221.4,719.0 221.0,718.5 220.6,718.1 220.2,717.6 219.8,717.2 219.4,716.7 218.9,716.2 218.5,715.8 218.1,715.3 217.7,714.8 217.3,714.3 216.9,713.9 216.5,713.4 216.1,712.9 215.7,712.4 215.3,711.9 214.9,711.5 214.5,711.0 214.0,710.5 213.6,710.0 213.2,709.5 212.8,709.0 212.4,708.5 212.0,708.0 211.6,707.5 211.2,707.0 210.7,706.5 210.3,706.0 209.9,705.5 209.5,705.0 209.1,704.5 208.7,704.0 208.2,703.5 207.8,702.9 207.4,702.4 207.0,701.9 206.6,701.4 206.1,700.9 205.7,700.4 205.3,699.8 204.9,699.3 204.4,698.8 204.0,698.3 203.6,697.7 203.2,697.2 202.7,696.7 202.3,696.1 201.9,695.6 201.4,695.1 201.0,694.5 200.6,694.0 200.1,693.5 199.7,692.9 199.3,692.4 198.8,691.8 198.4,691.3 197.9,690.8 197.5,690.2 197.1,689.7 196.6,689.1 196.2,688.6 195.7,688.0 195.3,687.5 194.8,686.9 194.4,686.3 193.9,685.8 193.5,685.2 193.0,684.7 192.6,684.1 192.1,683.5 191.7,683.0 191.2,682.4 190.8,681.8 190.3,681.3 189.9,680.7 189.4,680.1 189.0,679.5 188.5,678.9 188.1,678.4 187.6,677.8 187.1,677.2 186.7,676.6 186.2,676.0 185.8,675.4 185.3,674.8 184.9,674.2 184.4,673.6 183.9,673.0 183.5,672.4 183.0,671.8 182.6,671.2 182.1,670.6 181.6,670.0 181.2,669.4 180.7,668.8 180.3,668.1 179.8,667.5 179.3,666.9 178.9,666.3 178.4,665.6 177.9,665.0 177.5,664.4 177.0,663.7 176.6,663.1 176.1,662.4 175.6,661.8 175.2,661.2 174.7,660.5 174.2,659.9 173.8,659.2 173.3,658.5 172.8,657.9 172.4,657.2 171.9,656.6 171.4,655.9 171.0,655.2 170.5,654.6 170.0,653.9 169.6,653.2 169.1,652.5 168.6,651.8 168.1,651.2 167.7,650.5 167.2,649.8 166.7,649.1 166.3,648.4 165.8,647.7 165.3,647.0 164.9,646.3 164.4,645.6 163.9,644.9 163.5,644.2 163.0,643.5 162.5,642.7 162.0,642.0 161.6,641.3 161.1,640.6 160.6,639.8 160.2,639.1 159.7,638.4 159.2,637.6 158.8,636.9 158.3,636.1 157.8,635.4 157.4,634.6 156.9,633.8 156.4,633.1 156.0,632.3 155.5,631.6 155.0,630.8 154.6,630.0 154.1,629.2 153.7,628.4 153.2,627.6 152.7,626.9 152.3,626.1 151.8,625.3 151.3,624.5 150.9,623.6 150.4,622.8 150.0,622.0 149.5,621.2 149.0,620.4 148.6,619.6 148.1,618.7 147.7,617.9 147.2,617.1 146.8,616.2 146.3,615.4 145.9,614.5 145.4,613.7 144.9,612.8 144.5,611.9 144.0,611.1 143.6,610.2 143.1,609.3 142.7,608.4 142.2,607.6 141.8,606.7 141.3,605.8 140.9,604.9 140.4,604.0 140.0,603.1 139.5,602.2 139.1,601.3 138.7,600.3 138.2,599.4 137.8,598.5 137.3,597.6 136.9,596.6 136.4,595.7 136.0,594.7 135.6,593.8 135.1,592.8 134.7,591.9 134.2,590.9 133.8,589.9 133.4,589.0 132.9,588.0 132.5,587.0 132.1,586.0 131.6,585.0 131.2,584.0 130.8,583.0 130.3,582.0 129.9,581.0 129.5,580.0 129.0,578.9 128.6,577.9 128.2,576.9 127.7,575.8 127.3,574.8 126.9,573.7 126.5,572.7 126.0,571.6 125.6,570.6 125.2,569.5 124.8,568.4 124.3,567.3 123.9,566.2 123.5,565.1 123.1,564.0 122.7,562.9 122.2,561.8 121.8,560.7 121.4,559.6 121.0,558.4 120.6,557.3 120.2,556.2 119.8,555.0 119.4,553.8 119.0,552.7 118.6,551.5 118.2,550.3 117.8,549.1 117.4,547.9 117.0,546.7 116.6,545.5 116.2,544.3 115.9,543.1 115.5,541.8 115.1,540.6 114.7,539.3 114.4,538.1 114.0,536.8 113.6,535.5 113.2,534.2 112.9,532.9 112.5,531.6 112.2,530.3 111.8,529.0 111.5,527.7 111.1,526.3 110.8,525.0 110.4,523.6 110.1,522.3 109.8,520.9 109.4,519.5 109.1,518.1 108.8,516.7 108.5,515.3 108.1,513.9 107.8,512.4 107.5,511.0 107.2,509.5 106.9,508.1 106.6,506.6 106.3,505.1 106.0,503.6 105.7,502.1 105.4,500.6 105.1,499.1 104.8,497.6 104.5,496.0 104.2,494.5 104.0,492.9 103.7,491.3 103.4,489.7 103.2,488.1 102.9,486.5 102.7,484.8 102.4,483.2 102.2,481.5 102.0,479.9 101.8,478.2 101.5,476.5 101.3,474.8 101.1,473.0 100.9,471.3 100.7,469.5 100.5,467.7 100.4,465.9 100.2,464.1 100.0,462.3 99.9,460.4 99.7,458.6 99.6,456.7 99.5,454.8 99.3,452.9 99.2,451.0 99.1,449.0 99.0,447.0 98.9,445.0 98.9,443.0 98.8,441.0 98.7,439.0 98.7,436.9 98.6,434.8 98.6,432.8 98.5,430.6 98.5,428.5 98.5,426.4 98.5,424.2 98.4,422.0 98.5,419.8 98.5,417.6 98.5,415.3 98.5,413.0 98.6,410.7 98.6,408.4 98.7,406.1 98.8,403.7 98.9,401.3 99.0,398.9 99.1,396.5 99.2,394.0 99.4,391.5 99.5,388.9 99.7,386.4 99.9,383.8 100.1,381.2 100.3,378.5 100.6,375.9 100.8,373.1 101.1,370.4 101.4,367.6 101.7,364.8 102.1,361.9 102.4,359.0 102.8,356.1 103.2,353.1 103.7,350.1 104.1,347.1 104.6,344.0 105.1,340.8 105.6,337.7 106.2,334.4 106.8,331.1 107.4,327.8 108.1,324.4 108.8,321.0 109.5,317.5 110.3,314.0 111.0,310.4 111.8,306.8 112.7,303.1 113.6,299.4 114.5,295.6 115.4,291.7 116.4,287.8 117.4,283.9 118.4,279.8 119.5,275.7 120.6,271.6 121.8,267.4 123.0,263.1 124.2,258.8 125.5,254.4 126.8,249.9 128.2,245.3 129.6,240.7 131.1,236.0 132.6,231.2 134.2,226.3 135.8,221.3 137.5,216.3 139.3,211.1 141.1,205.9 143.0,200.5 144.9,195.1 146.9,189.6 149.0,183.9 151.2,178.1 153.4,172.3 155.7,166.3 158.1,160.2 160.6,153.9 163.2,147.5 165.9,141.0 168.6,134.4 171.5,127.6 174.5,120.6 177.6,113.5" fill="none" stroke="#0000a0" stroke-width="0.8" />
<polyline points="310.4,751.1 310.1,750.7 309.8,750.4 309.5,750.0 309.2,749.6 308.9,749.3 308.6,748.9 308.3,748.6 308.0,748.2 307.7,747.9 307.4,747.5 307.1,747.1 306.8,746.8 306.4,746.4 306.1,746.0 305.8,745.7 305.5,745.3 305.2,744.9 304.9,744.5 304.6,744.2 304.2,743.8 303.9,743.4 303.6,743.1 303.3,742.7 303.0,742.3 302.7,741.9 302.3,741.5 302.0,741.2 301.7,740.8 301.4,740.4 301.0,740.0 300.7,739.6 300.4,739.2 300.1,738.8 299.7,738.4 299.4,738.1 299.1,737.7 298.8,737.3 298.4,736.9 298.1,736.5 297.8,736.1 297.4,735.7 297.1,735.3 296.8,734.9 296.4,734.5 296.1,734.1 295.8,733.7 295.4,733.2 295.1,732.8 294.7,732.4 294.4,732.0 294.1,731.6 293.7,731.2 293.4,730.8 293.0,730.4 292.7,729.9 292.4,729.5 292.0,729.1 291.7,728.7 291.3,728.2 291.0,727.8 290.6,727.4 290.3,727.0 289.9,726.5 289.6,726.1 289.2,725.7 288.9,725.2 288.5,724.8 288.2,724.4 287.8,723.9 287.5,723.5 287.1,723.0 286.8,722.6 286.4,722.2 286.0,721.7 285.7,721.3 285.3,720.8 285.0,720.4 284.6,719.9 284.2,719.5 283.9,719.0 283.5,718.5 283.1,718.1 282.8,717.6 282.4,717.2 282.0,716.7 281.7,716.2 281.3,715.8 280.9,715.3 280.6,714.8 280.2,714.3 279.8,713.9 279.5,713.4 279.1,712.9 278.7,712.4 278.4,711.9 278.0,711.5 277.6,711.0 277.2,710.5 276.9,710.0 276.5,709.5 276.1,709.0 275.7,708.5 275.4,708.0 275.0,707.5 274.6,707.0 274.2,706.5 273.8,706.0 273.5,705.5 273.1,705.0 272.7,704.5 272.3,704.0 271.9,703.5 271.5,702.9 271.1,702.4 270.7,701.9 270.3,701.4 270.0,700.9 269.6,700.4 269.2,699.8 268.8,699.3 268.4,698.8 268.0,698.3 267.6,697.7 267.2,697.2 266.8,696.7 266.4,696.1 265.9,695.6 265.5,695.1 265.1,694.5 264.7,694.0 264.3,693.5 263.9,692.9 263.5,692.4 263.0,691.8 262.6,691.3 262.2,690.8 261.8,690.2 261.4,689.7 260.9,689.1 260.5,688.6 260.1,688.0 259.7,687.5 259.2,686.9 258.8,686.3 258.4,685.8 257.9,685.2 257.5,684.7 257.1,684.1 256.6,683.5 256.2,683.0 255.7,682.4 255.3,681.8 254.9,681.3 254.4,680.7 254.0,680.1 253.5,679.5 253.1,678.9 252.6,678.4 252.2,677.8 251.7,677.2 251.3,676.6 250.8,676.0 250.4,675.4 249.9,674.8 249.5,674.2 249.0,673.6 248.5,673.0 248.1,672.4 247.6,671.8 247.2,671.2 246.7,670.6 246.3,670.0 245.8,669.4 245.3,668.8 244.9,668.1 244.4,667.5 243.9,666.9 243.5,666.3 243.0,665.6 242.5,665.0 242.1,664.4 241.6,663.7 241.1,663.1 240.7,662.4 240.2,661.8 239.7,661.2 239.2,660.5 238.8,659.9 238.3,659.2 237.8,658.5 237.3,657.9 236.9,657.2 236.4,656.6 235.9,655.9 235.4,655.2 234.9,654.6 234.5,653.9 234.0,653.2 233.5,652.5 233.0,651.8 232.5,651.2 232.0,650.5 231.6,649.8 231.1,649.1 230.6,648.4 230.1,647.7 229.6,647.0 229.1,646.3 228.6,645.6 228.1,644.9 227.6,644.2 227.2,643.5 226.7,642.7 226.2,642.0 225.7,641.3 225.2,640.6 224.7,639.8 224.2,639.1 223.7,638.4 223.2,637.6 222.7,636.9 222.2,636.1 221.7,635.4 221.2,634.6 220.7,633.8 220.2,633.1 219.7,632.3 219.3,631.6 218.8,630.8 218.3,630.0 217.8,629.2 217.3,628.4 216.8,627.6 216.3,626.9 215.8,626.1 215.3,625.3 214.8,624.5 214.3,623.6 213.8,622.8 213.3,622.0 212.8,621.2 212.3,620.4 211.8,619.6 211.3,618.7 210.8,617.9 210.3,617.1 209.8,616.2 209.3,615.4 208.8,614.5 208.3,613.7 207.8,612.8 207.3,611.9 206.8,611.1 206.3,610.2 205.8,609.3 205.4,608.4 204.9,607.6 204.4,606.7 203.9,605.8 203.4,604.9 202.9,604.0 202.4,603.1 201.9,602.2 201.4,601.3 200.9,600.3 200.4,599.4 199.9,598.5 199.4,597.6 198.9,596.6 198.4,595.7 197.9,594.7 197.4,593.8 196.9,592.8 196.4,591.9 195.9,590.9 195.5,589.9 195.0,589.0 194.5,588.0 194.0,587.0 193.5,586.0 193.0,585.0 192.5,584.0 192.0,583.0 191.5,582.0 191.0,581.0 190.5,580.0 190.0,578.9 189.6,577.9 189.1,576.9 188.6,575.8 188.1,574.8 187.6,573.7 187.1,572.7 186.6,571.6 186.1,570.6 185.6,569.5 185.2,568.4 184.7,567.3 184.2,566.2 183.7,565.1 183.2,564.0 182.7,562.9 182.2,561.8 181.8,560.7 181.3,559.6 180.8,558.4 180.3,557.3 179.9,556.2 179.4,555.0 178.9,553.8 178.4,552.7 178.0,551.5 177.5,550.3 177.0,549.1 176.6,547.9 176.1,546.7 175.6,545.5 175.2,544.3 174.7,543.1 174.3,541.8 173.8,540.6 173.4,539.3 172.9,538.1 172.5,536.8 172.0,535.5 171.6,534.2 171.2,532.9 170.7,531.6 170.3,530.3 169.9,529.0 169.4,527.7 169.0,526.3 168.6,525.0 168.2,523.6 167.7,522.3 167.3,520.9 166.9,519.5 166.5,518.1 166.1,516.7 165.7,515.3 165.3,513.9 164.9,512.4 164.5,511.0 164.1,509.5 163.7,508.1 163.3,506.6 162.9,505.1 162.5,503.6 162.1,502.1 161.7,500.6 161.4,499.1 161.0,497.6 160.6,496.0 160.3,494.5 159.9,492.9 159.5,491.3 159.2,489.7 158.8,488.1 158.5,486.5 158.2,484.8 157.8,483.2 157.5,481.5 157.2,479.9 156.9,478.2 156.6,476.5 156.2,474.8 155.9,473.0 155.7,471.3 155.4,469.5 155.1,467.7 154.8,465.9 154.5,464.1 154.3,462.3 154.0,460.4 153.8,458.6 153.6,456.7 153.3,454.8 153.1,452.9 152.9,451.0 152.7,449.0 152.5,447.0 152.3,445.0 152.1,443.0 151.9,441.0 151.8,439.0 151.6,436.9 151.4,434.8 151.3,432.8 151.2,430.6 151.0,428.5 150.9,426.4 150.8,424.2 150.7,422.0 150.5,419.8 150.5,417.6 150.4,415.3 150.3,413.0 150.2,410.7 150.2,408.4 150.1,406.1 150.1,403.7 150.1,401.3 150.1,398.9 150.1,396.5 150.1,394.0 150.1,391.5 150.2,388.9 150.2,386.4 150.3,383.8 150.4,381.2 150.5,378.5 150.6,375.9 150.8,373.1 150.9,370.4 151.1,367.6 151.3,364.8 151.5,361.9 151.7,359.0 152.0,356.1 152.3,353.1 152.6,350.1 152.9,347.1 153.3,344.0 153.6,340.8 154.0,337.7 154.5,334.4 154.9,331.1 155.4,327.8 156.0,324.4 156.5,321.0 157.1,317.5 157.7,314.0 158.4,310.4 159.0,306.8 159.7,303.1 160.5,299.4 161.2,295.6 162.0,291.7 162.8,287.8 163.7,283.9 164.6,279.8 165.5,275.7 166.5,271.6 167.5,267.4 168.5,263.1 169.6,258.8 170.8,254.4 171.9,249.9 173.2,245.3 174.4,240.7 175.7,236.0 177.1,231.2 178.5,226.3 180.0,221.3 181.5,216.3 183.1,211.1 184.8,205.9 186.5,200.5 188.2,195.1 190.1,189.6 192.0,183.9 194.0,178.1 196.0,172.3 198.2,166.3 200.4,160.2 202.7,153.9 205.1,147.5 207.5,141.0 210.1,134.4 212.8,127.6 215.6,120.6 218.4,113.5 221.4,106.2 224.6,98.8 227.8,91.1 231.2,83.3 234.7,75.3 238.3,67.1 242.1,58.7 246.1,50.0" fill="none" stroke="#0000a0" stroke-width="0.8" />
<polyline points="367.9,751.1 367.7,750.7 367.5,750.4 367.2,750.0 367.0,749.6 366.8,749.3 366.6,748.9 366.3,748.6 366.1,748.2 365.9,747.9 365.7,747.5 365.4,747.1 365.2,746.8 365.0,746.4 364.8,746.0 364.5,745.7 364.3,745.3 364.1,744.9 363.8,744.5 363.6,744.2 363.4,743.8 363.2,743.4 362.9,743.1 362.7,742.7 362.5,742.3 362.2,741.9 362.0,741.5 361.8,741.2 361.5,740.8 361.3,740.4 361.0,740.0 360.8,739.6 360.6,739.2 360.3,738.8 360.1,738.4 359.8,738.1 359.6,737.7 359.4,737.3 359.1,736.9 358.9,736.5 358.6,736.1 358.4,735.7 358.1,735.3 357.9,734.9 357.6,734.5 357.4,734.1 357.2,733.7 356.9,733.2 356.7,732.8 356.4,732.4 356.2,732.0 355.9,731.6 355.6,731.2 355.4,730.8 355.1,730.4 354.9,729.9 354.6,729.5 354.4,729.1 354.1,728.7 353.9,728.2 353.6,727.8 353.3,727.4 353.1,727.0 352.8,726.5 352.6,726.1 352.3,725.7 352.0,725.2 351.8,724.8 351.5,724.4 351.2,723.9 351.0,723.5 350.7,723.0 350.4,722.6 350.2,722.2 349.9,721.7 349.6,721.3 349.4,720.8 349.1,720.4 348.8,719.9 348.6,719.5 348.3,719.0 348.0,718.5 347.7,718.1 347.5,717.6 347.2,717.2 346.9,716.7 346.6,716.2 346.3,715.8 346.1,715.3 345.8,714.8 345.5,714.3 345.2,713.9 344.9,713.4 344.7,712.9 344.4,712.4 344.1,711.9 343.8,711.5 343.5,711.0 343.2,710.5 343.0,710.0 342.7,709.5 342.4,709.0 342.1,708.5 341.8,708.0 341.5,707.5 341.2,707.0 340.9,706.5 340.6,706.0 340.3,705.5 340.0,705.0 339.7,704.5 339.4,704.0 339.1,703.5 338.8,702.9 338.5,702.4 338.2,701.9 337.9,701.4 337.6,700.9 337.3,700.4 337.0,699.8 336.7,699.3 336.3,698.8 336.0,698.3 335.7,697.7 335.4,697.2 335.1,696.7 334.7,696.1 334.4,695.6 334.1,695.1 333.8,694.5 333.4,694.0 333.1,693.5 332.8,692.9 332.4,692.4 332.1,691.8 331.7,691.3 331.4,690.8 331.1,690.2 330.7,689.7 330.4,689.1 330.0,688.6 329.7,688.0 329.3,687.5 329.0,686.9 328.6,686.3 328.2,685.8 327.9,685.2 327.5,684.7 327.2,684.1 326.8,683.5 326.4,683.0 326.1,682.4 325.7,681.8 325.3,681.3 325.0,680.7 324.6,680.1 324.2,679.5 323.8,678.9 323.5,678.4 323.1,677.8 322.7,677.2 322.3,676.6 321.9,676.0 321.5,675.4 321.2,674.8 320.8,674.2 320.4,673.6 320.0,673.0 319.6,672.4 319.2,671.8 318.8,671.2 318.4,670.6 318.0,670.0 317.6,669.4 317.2,668.8 316.8,668.1 316.4,667.5 316.0,666.9 315.6,666.3 315.2,665.6 314.8,665.0 314.3,664.4 313.9,663.7 313.5,663.1 313.1,662.4 312.7,661.8 312.3,661.2 311.8,660.5 311.4,659.9 311.0,659.2 310.6,658.5 310.1,657.9 309.7,657.2 309.3,656.6 308.8,655.9 308.4,655.2 308.0,654.6 307.5,653.9 307.1,653.2 306.7,652.5 306.2,651.8 305.8,651.2 305.3,650.5 304.9,649.8 304.4,649.1 304.0,648.4 303.5,647.7 303.1,647.0 302.6,646.3 302.2,645.6 301.7,644.9 301.2,644.2 300.8,643.5 300.3,642.7 299.9,642.0 299.4,641.3 298.9,640.6 298.5,639.8 298.0,639.1 297.5,638.4 297.1,637.6 296.6,636.9 296.1,636.1 295.6,635.4 295.2,634.6 294.7,633.8 294.2,633.1 293.7,632.3 293.3,631.6 292.8,630.8 292.3,630.0 291.8,629.2 291.3,628.4 290.8,627.6 290.4,626.9 289.9,626.1 289.4,625.3 288.9,624.5 288.4,623.6 287.9,622.8 287.4,622.0 286.9,621.2 286.4,620.4 285.9,619.6 285.4,618.7 284.9,617.9 284.4,617.1 283.9,616.2 283.4,615.4 282.9,614.5 282.4,613.7 281.9,612.8 281.4,611.9 280.9,611.1 280.4,610.2 279.9,609.3 279.4,608.4 278.9,607.6 278.4,606.7 277.9,605.8 277.4,604.9 276.8,604.0 276.3,603.1 275.8,602.2 275.3,601.3 274.8,600.3 274.3,599.4 273.8,598.5 273.2,597.6 272.7,596.6 272.2,595.7 271.7,594.7 271.1,593.8 270.6,592.8 270.1,591.9 269.6,590.9 269.1,589.9 268.5,589.0 268.0,588.0 267.5,587.0 266.9,586.0 266.4,585.0 265.9,584.0 265.4,583.0 264.8,582.0 264.3,581.0 263.8,580.0 263.2,578.9 262.7,577.9 262.1,576.9 261.6,575.8 261.1,574.8 260.5,573.7 260.0,572.7 259.5,571.6 258.9,570.6 258.4,569.5 257.8,568.4 257.3,567.3 256.8,566.2 256.2,565.1 255.7,564.0 255.1,562.9 254.6,561.8 254.1,560.7 253.5,559.6 253.0,558.4 252.4,557.3 251.9,556.2 251.4,555.0 250.8,553.8 250.3,552.7 249.8,551.5 249.2,550.3 248.7,549.1 248.1,547.9 247.6,546.7 247.1,545.5 246.6,544.3 246.0,543.1 245.5,541.8 245.0,540.6 244.4,539.3 243.9,538.1 243.4,536.8 242.9,535.5 242.4,534.2 241.8,532.9 241.3,531.6 240.8,530.3 240.3,529.0 239.8,527.7 239.3,526.3 238.8,525.0 238.3,523.6 237.8,522.3 237.3,520.9 236.8,519.5 236.3,518.1 235.8,516.7 235.3,515.3 234.8,513.9 234.3,512.4 233.8,511.0 233.3,509.5 232.8,508.1 232.3,506.6 231.8,505.1 231.3,503.6 230.9,502.1 230.4,500.6 229.9,499.1 229.4,497.6 229.0,496.0 228.5,494.5 228.0,492.9 227.6,491.3 227.1,489.7 226.7,488.1 226.2,486.5 225.8,484.8 225.3,483.2 224.9,481.5 224.5,479.9 224.1,478.2 223.6,476.5 223.2,474.8 222.8,473.0 222.4,471.3 222.0,469.5 221.6,467.7 221.2,465.9 220.8,464.1 220.5,462.3 220.1,460.4 219.7,458.6 219.4,456.7 219.0,454.8 218.7,452.9 218.4,451.0 218.1,449.0 217.7,447.0 217.4,445.0 217.1,443.0 216.8,441.0 216.5,439.0 216.2,436.9 215.9,434.8 215.7,432.8 215.4,430.6 215.1,428.5 214.9,426.4 214.6,424.2 214.4,422.0 214.2,419.8 213.9,417.6 213.7,415.3 213.5,413.0 213.3,410.7 213.1,408.4 212.9,406.1 212.8,403.7 212.6,401.3 212.5,398.9 212.3,396.5 212.2,394.0 212.1,391.5 212.0,388.9 211.9,386.4 211.8,383.8 211.8,381.2 211.7,378.5 211.7,375.9 211.7,373.1 211.7,370.4 211.8,367.6 211.8,364.8 211.9,361.9 212.0,359.0 212.1,356.1 212.2,353.1 212.3,350.1 212.5,347.1 212.7,344.0 212.9,340.8 213.2,337.7 213.4,334.4 213.7,331.1 214.1,327.8 214.4,324.4 214.8,321.0 215.2,317.5 215.7,314.0 216.2,310.4 216.7,306.8 217.2,303.1 217.7,299.4 218.3,295.6 219.0,291.7 219.6,287.8 220.3,283.9 221.0,279.8 221.8,275.7 222.5,271.6 223.4,267.4 224.2,263.1 225.1,258.8 226.1,254.4 227.1,249.9 228.1,245.3 229.2,240.7 230.3,236.0 231.4,231.2 232.7,226.3 233.9,221.3 235.3,216.3 236.6,211.1 238.1,205.9 239.6,200.5 241.1,195.1 242.8,189.6 244.5,183.9 246.2,178.1 248.1,172.3 250.0,166.3 252.0,160.2 254.0,153.9 256.2,147.5 258.4,141.0 260.8,134.4 263.2,127.6 265.8,120.6 268.4,113.5 271.2,106.2 274.0,98.8 277.0,91.1 280.1,83.3 283.4,75.3 286.8,67.1 290.3,58.7 294.0,50.0" fill="none" stroke="#0000a0" stroke-width="0.8" />
<polyline points="425.1,751.1 425.0,750.7 424.9,750.4 424.7,750.0 424.6,749.6 424.5,749.3 424.3,748.9 424.2,748.6 424.0,748.2 423.9,747.9 423.8,747.5 423.6,747.1 423.5,746.8 423.4,746.4 423.2,746.0 423.1,745.7 423.0,745.3 422.8,744.9 422.7,744.5 422.6,744.2 422.4,743.8 422.3,743.4 422.1,743.1 422.0,742.7 421.9,742.3 421.7,741.9 421.6,741.5 421.5,741.2 421.3,740.8 421.2,740.4 421.0,740.0 420.9,739.6 420.8,739.2 420.6,738.8 420.5,738.4 420.3,738.1 420.2,737.7 420.0,737.3 419.9,736.9 419.8,736.5 419.6,736.1 419.5,735.7 419.3,735.3 419.2,734.9 419.0,734.5 418.9,734.1 418.8,733.7 418.6,733.2 418.5,732.8 418.3,732.4 418.2,732.0 418.0,731.6 417.9,731.2 417.7,730.8 417.6,730.4 417.4,729.9 417.3,729.5 417.2,729.1 417.0,728.7 416.9,728.2 416.7,727.8 416.6,727.4 416.4,727.0 416.3,726.5 416.1,726.1 416.0,725.7 415.8,725.2 415.7,724.8 415.5,724.4 415.4,723.9 415.2,723.5 415.0,723.0 414.9,722.6 414.7,722.2 414.6,721.7 414.4,721.3 414.3,720.8 414.1,720.4 414.0,719.9 413.8,719.5 413.7,719.0 413.5,718.5 413.3,718.1 413.2,717.6 413.0,717.2 412.9,716.7 412.7,716.2 412.6,715.8 412.4,715.3 412.2,714.8 412.1,714.3 411.9,713.9 411.8,713.4 411.6,712.9 411.5,712.4 411.3,711.9 411.1,711.5 411.0,711.0 410.8,710.5 410.6,710.0 410.5,709.5 410.3,709.0 410.2,708.5 410.0,708.0 409.8,707.5 409.7,707.0 409.5,706.5 409.3,706.0 409.2,705.5 409.0,705.0 408.8,704.5 408.7,704.0 408.5,703.5 408.3,702.9 408.1,702.4 408.0,701.9 407.8,701.4 407.6,700.9 407.4,700.4 407.3,699.8 407.1,699.3 406.9,698.8 406.7,698.3 406.5,697.7 406.4,697.2 406.2,696.7 406.0,696.1 405.8,695.6 405.6,695.1 405.4,694.5 405.2,694.0 405.0,693.5 404.8,692.9 404.6,692.4 404.4,691.8 404.2,691.3 404.0,690.8 403.8,690.2 403.6,689.7 403.4,689.1 403.2,688.6 403.0,688.0 402.8,687.5 402.6,686.9 402.4,686.3 402.1,685.8 401.9,685.2 401.7,684.7 401.5,684.1 401.3,683.5 401.1,683.0 400.8,682.4 400.6,681.8 400.4,681.3 400.2,680.7 399.9,680.1 399.7,679.5 399.5,678.9 399.2,678.4 399.0,677.8 398.8,677.2 398.5,676.6 398.3,676.0 398.0,675.4 397.8,674.8 397.6,674.2 397.3,673.6 397.1,673.0 396.8,672.4 396.6,671.8 396.3,671.2 396.1,670.6 395.8,670.0 395.6,669.4 395.3,668.8 395.1,668.1 394.8,667.5 394.6,666.9 394.3,666.3 394.0,665.6 393.8,665.0 393.5,664.4 393.3,663.7 393.0,663.1 392.7,662.4 392.5,661.8 392.2,661.2 391.9,660.5 391.6,659.9 391.4,659.2 391.1,658.5 390.8,657.9 390.5,657.2 390.2,656.6 389.9,655.9 389.7,655.2 389.4,654.6 389.1,653.9 388.8,653.2 388.5,652.5 388.2,651.8 387.9,651.2 387.6,650.5 387.3,649.8 387.0,649.1 386.7,648.4 386.4,647.7 386.1,647.0 385.8,646.3 385.4,645.6 385.1,644.9 384.8,644.2 384.5,643.5 384.2,642.7 383.9,642.0 383.5,641.3 383.2,640.6 382.9,639.8 382.6,639.1 382.2,638.4 381.9,637.6 381.6,636.9 381.2,636.1 380.9,635.4 380.6,634.6 380.2,633.8 379.9,633.1 379.5,632.3 379.2,631.6 378.8,630.8 378.5,630.0 378.1,629.2 377.8,628.4 377.4,627.6 377.1,626.9 376.7,626.1 376.3,625.3 376.0,624.5 375.6,623.6 375.2,622.8 374.9,622.0 374.5,621.2 374.1,620.4 373.8,619.6 373.4,618.7 373.0,617.9 372.6,617.1 372.2,616.2 371.8,615.4 371.5,614.5 371.1,613.7 370.7,612.8 370.3,611.9 369.9,611.1 369.5,610.2 369.1,609.3 368.7,608.4 368.3,607.6 367.9,606.7 367.5,605.8 367.0,604.9 366.6,604.0 366.2,603.1 365.8,602.2 365.4,601.3 364.9,600.3 364.5,599.4 364.1,598.5 363.7,597.6 363.2,596.6 362.8,595.7 362.3,594.7 361.9,593.8 361.5,592.8 361.0,591.9 360.6,590.9 360.1,589.9 359.7,589.0 359.2,588.0 358.7,587.0 358.3,586.0 357.8,585.0 357.3,584.0 356.9,583.0 356.4,582.0 355.9,581.0 355.5,580.0 355.0,578.9 354.5,577.9 354.0,576.9 353.5,575.8 353.0,574.8 352.5,573.7 352.0,572.7 351.5,571.6 351.0,570.6 350.5,569.5 350.0,568.4 349.5,567.3 349.0,566.2 348.5,565.1 348.0,564.0 347.5,562.9 346.9,561.8 346.4,560.7 345.9,559.6 345.4,558.4 344.8,557.3 344.3,556.2 343.8,555.0 343.2,553.8 342.7,552.7 342.2,551.5 341.6,550.3 341.1,549.1 340.6,547.9 340.0,546.7 339.5,545.5 338.9,544.3 338.4,543.1 337.9,541.8 337.3,540.6 336.8,539.3 336.2,538.1 335.7,536.8 335.1,535.5 334.6,534.2 334.0,532.9 333.5,531.6 332.9,530.3 332.4,529.0 331.8,527.7 331.3,526.3 330.7,525.0 330.2,523.6 329.6,522.3 329.1,520.9 328.5,519.5 327.9,518.1 327.4,516.7 326.8,515.3 326.3,513.9 325.7,512.4 325.1,511.0 324.6,509.5 324.0,508.1 323.5,506.6 322.9,505.1 322.3,503.6 321.8,502.1 321.2,500.6 320.7,499.1 320.1,497.6 319.6,496.0 319.0,494.5 318.4,492.9 317.9,491.3 317.3,489.7 316.8,488.1 316.2,486.5 315.7,484.8 315.2,483.2 314.6,481.5 314.1,479.9 313.5,478.2 313.0,476.5 312.5,474.8 312.0,473.0 311.4,471.3 310.9,469.5 310.4,467.7 309.9,465.9 309.4,464.1 308.9,462.3 308.4,460.4 307.9,458.6 307.4,456.7 306.9,454.8 306.5,452.9 306.0,451.0 305.5,449.0 305.1,447.0 304.6,445.0 304.2,443.0 303.7,441.0 303.3,439.0 302.9,436.9 302.4,434.8 302.0,432.8 301.6,430.6 301.1,428.5 300.7,426.4 300.3,424.2 299.9,422.0 299.5,419.8 299.1,417.6 298.8,415.3 298.4,413.0 298.0,410.7 297.7,408.4 297.3,406.1 297.0,403.7 296.6,401.3 296.3,398.9 296.0,396.5 295.7,394.0 295.4,391.5 295.1,388.9 294.9,386.4 294.6,383.8 294.4,381.2 294.1,378.5 293.9,375.9 293.7,373.1 293.5,370.4 293.4,367.6 293.2,364.8 293.1,361.9 293.0,359.0 292.9,356.1 292.8,353.1 292.7,350.1 292.7,347.1 292.7,344.0 292.7,340.8 292.7,337.7 292.8,334.4 292.9,331.1 293.0,327.8 293.1,324.4 293.3,321.0 293.5,317.5 293.7,314.0 294.0,310.4 294.3,306.8 294.6,303.1 294.9,299.4 295.2,295.6 295.6,291.7 296.0,287.8 296.5,283.9 297.0,279.8 297.5,275.7 298.0,271.6 298.6,267.4 299.2,263.1 299.8,258.8 300.5,254.4 301.3,249.9 302.0,245.3 302.9,240.7 303.7,236.0 304.6,231.2 305.6,226.3 306.6,221.3 307.6,216.3 308.7,211.1 309.9,205.9 311.1,200.5 312.4,195.1 313.7,189.6 315.1,183.9 316.6,178.1 318.1,172.3 319.8,166.3 321.4,160.2 323.2,153.9 325.1,147.5 327.0,141.0 329.0,134.4 331.1,127.6 333.4,120.6 335.7,113.5 338.1,106.2 340.6,98.8 343.3,91.1 346.0,83.3 349.0,75.3 352.0,67.1 355.2,58.7 358.5,50.0" fill="none" stroke="#0000a0" stroke-width="0.8" />
<polyline points="482.6,751.1 482.6,750.7 482.5,750.4 482.5,750.0 482.4,749.6 482.4,749.3 482.3,748.9 482.3,748.6 482.2,748.2 482.1,747.9 482.1,747.5 482.0,747.1 482.0,746.8 481.9,746.4 481.9,746.0 481.8,745.7 481.8,745.3 481.7,744.9 481.7,744.5 481.6,744.2 481.6,743.8 481.5,743.4 481.4,743.1 481.4,742.7 481.3,742.3 481.3,741.9 481.2,741.5 481.2,741.2 481.1,740.8 481.1,740.4 481.0,740.0 481.0,739.6 480.9,739.2 480.9,738.8 480.8,738.4 480.8,738.1 480.7,737.7 480.7,737.3 480.6,736.9 480.6,736.5 480.5,736.1 480.5,735.7 480.4,735.3 480.4,734.9 480.3,734.5 480.3,734.1 480.2,733.7 480.2,733.2 480.1,732.8 480.1,732.4 480.0,732.0 480.0,731.6 479.9,731.2 479.9,730.8 479.8,730.4 479.8,729.9 479.7,729.5 479.7,729.1 479.6,728.7 479.6,728.2 479.5,727.8 479.5,727.4 479.4,727.0 479.4,726.5 479.3,726.1 479.3,725.7 479.2,725.2 479.2,724.8 479.1,724.4 479.1,723.9 479.1,723.5 479.0,723.0 479.0,722.6 478.9,722.2 478.9,721.7 478.8,721.3 478.8,720.8 478.7,720.4 478.7,719.9 478.6,719.5 478.6,719.0 478.6,718.5 478.5,718.1 478.5,717.6 478.4,717.2 478.4,716.7 478.3,716.2 478.3,715.8 478.3,715.3 478.2,714.8 478.2,714.3 478.1,713.9 478.1,713.4 478.1,712.9 478.0,712.4 478.0,711.9 477.9,711.5 477.9,711.0 477.9,710.5 477.8,710.0 477.8,709.5 477.7,709.0 477.7,708.5 477.7,708.0 477.6,707.5 477.6,707.0 477.6,706.5 477.5,706.0 477.5,705.5 477.4,705.0 477.4,704.5 477.4,704.0 477.3,703.5 477.3,702.9 477.2,702.4 477.2,701.9 477.2,701.4 477.1,700.9 477.1,700.4 477.0,699.8 477.0,699.3 477.0,698.8 476.9,698.3 476.9,697.7 476.8,697.2 476.8,696.7 476.7,696.1 476.7,695.6 476.6,695.1 476.6,694.5 476.5,694.0 476.5,693.5 476.4,692.9 476.4,692.4 476.3,691.8 476.3,691.3 476.2,690.8 476.2,690.2 476.1,689.7 476.1,689.1 476.0,688.6 476.0,688.0 475.9,687.5 475.9,686.9 475.8,686.3 475.7,685.8 475.7,685.2 475.6,684.7 475.6,684.1 475.5,683.5 475.5,683.0 475.4,682.4 475.3,681.8 475.3,681.3 475.2,680.7 475.1,680.1 475.1,679.5 475.0,678.9 475.0,678.4 474.9,677.8 474.8,677.2 474.8,676.6 474.7,676.0 474.6,675.4 474.6,674.8 474.5,674.2 474.4,673.6 474.4,673.0 474.3,672.4 474.2,671.8 474.2,671.2 474.1,670.6 474.0,670.0 474.0,669.4 473.9,668.8 473.8,668.1 473.8,667.5 473.7,666.9 473.6,666.3 473.6,665.6 473.5,665.0 473.4,664.4 473.3,663.7 473.3,663.1 473.2,662.4 473.1,661.8 473.0,661.2 473.0,660.5 472.9,659.9 472.8,659.2 472.7,658.5 472.7,657.9 472.6,657.2 472.5,656.6 472.4,655.9 472.4,655.2 472.3,654.6 472.2,653.9 472.1,653.2 472.0,652.5 471.9,651.8 471.9,651.2 471.8,650.5 471.7,649.8 471.6,649.1 471.5,648.4 471.4,647.7 471.3,647.0 471.3,646.3 471.2,645.6 471.1,644.9 471.0,644.2 470.9,643.5 470.8,642.7 470.7,642.0 470.6,641.3 470.5,640.6 470.4,639.8 470.3,639.1 470.2,638.4 470.1,637.6 470.0,636.9 470.0,636.1 469.9,635.4 469.8,634.6 469.7,633.8 469.6,633.1 469.5,632.3 469.4,631.6 469.3,630.8 469.2,630.0 469.0,629.2 468.9,628.4 468.8,627.6 468.7,626.9 468.6,626.1 468.5,625.3 468.4,624.5 468.3,623.6 468.2,622.8 468.1,622.0 468.0,621.2 467.9,620.4 467.7,619.6 467.6,618.7 467.5,617.9 467.4,617.1 467.3,616.2 467.2,615.4 467.0,614.5 466.9,613.7 466.8,612.8 466.7,611.9 466.5,611.1 466.4,610.2 466.3,609.3 466.2,608.4 466.0,607.6 465.9,606.7 465.8,605.8 465.6,604.9 465.5,604.0 465.4,603.1 465.2,602.2 465.1,601.3 464.9,600.3 464.8,599.4 464.6,598.5 464.5,597.6 464.3,596.6 464.2,595.7 464.0,594.7 463.9,593.8 463.7,592.8 463.6,591.9 463.4,590.9 463.2,589.9 463.1,589.0 462.9,588.0 462.7,587.0 462.6,586.0 462.4,585.0 462.2,584.0 462.0,583.0 461.8,582.0 461.6,581.0 461.5,580.0 461.3,578.9 461.1,577.9 460.9,576.9 460.7,575.8 460.5,574.8 460.3,573.7 460.1,572.7 459.8,571.6 459.6,570.6 459.4,569.5 459.2,568.4 459.0,567.3 458.8,566.2 458.5,565.1 458.3,564.0 458.1,562.9 457.8,561.8 457.6,560.7 457.3,559.6 457.1,558.4 456.8,557.3 456.6,556.2 456.3,555.0 456.1,553.8 455.8,552.7 455.6,551.5 455.3,550.3 455.0,549.1 454.7,547.9 454.5,546.7 454.2,545.5 453.9,544.3 453.6,543.1 453.3,541.8 453.0,540.6 452.8,539.3 452.5,538.1 452.2,536.8 451.9,535.5 451.6,534.2 451.2,532.9 450.9,531.6 450.6,530.3 450.3,529.0 450.0,527.7 449.7,526.3 449.3,525.0 449.0,523.6 448.7,522.3 448.3,520.9 448.0,519.5 447.6,518.1 447.3,516.7 446.9,515.3 446.5,513.9 446.2,512.4 445.8,511.0 445.4,509.5 445.1,508.1 444.7,506.6 444.3,505.1 443.9,503.6 443.5,502.1 443.1,500.6 442.7,499.1 442.3,497.6 441.9,496.0 441.5,494.5 441.0,492.9 440.6,491.3 440.2,489.7 439.8,488.1 439.3,486.5 438.9,484.8 438.5,483.2 438.0,481.5 437.6,479.9 437.1,478.2 436.7,476.5 436.2,474.8 435.8,473.0 435.3,471.3 434.9,469.5 434.4,467.7 433.9,465.9 433.5,464.1 433.0,462.3 432.5,460.4 432.1,458.6 431.6,456.7 431.1,454.8 430.7,452.9 430.2,451.0 429.7,449.0 429.3,447.0 428.8,445.0 428.3,443.0 427.9,441.0 427.4,439.0 426.9,436.9 426.4,434.8 425.9,432.8 425.4,430.6 425.0,428.5 424.5,426.4 424.0,424.2 423.5,422.0 423.0,419.8 422.5,417.6 422.0,415.3 421.5,413.0 421.1,410.7 420.6,408.4 420.1,406.1 419.6,403.7 419.2,401.3 418.7,398.9 418.2,396.5 417.8,394.0 417.3,391.5 416.9,388.9 416.4,386.4 416.0,383.8 415.6,381.2 415.1,378.5 414.7,375.9 414.3,373.1 413.9,370.4 413.5,367.6 413.2,364.8 412.8,361.9 412.5,359.0 412.2,356.1 411.8,353.1 411.5,350.1 411.3,347.1 411.0,344.0 410.7,340.8 410.5,337.7 410.3,334.4 410.1,331.1 410.0,327.8 409.8,324.4 409.7,321.0 409.6,317.5 409.5,314.0 409.5,310.4 409.4,306.8 409.4,303.1 409.4,299.4 409.5,295.6 409.5,291.7 409.6,287.8 409.7,283.9 409.9,279.8 410.0,275.7 410.2,271.6 410.5,267.4 410.7,263.1 411.0,258.8 411.3,254.4 411.7,249.9 412.1,245.3 412.5,240.7 413.0,236.0 413.5,231.2 414.1,226.3 414.7,221.3 415.4,216.3 416.1,211.1 416.8,205.9 417.6,200.5 418.5,195.1 419.4,189.6 420.4,183.9 421.4,178.1 422.5,172.3 423.7,166.3 425.0,160.2 426.3,153.9 427.7,147.5 429.1,141.0 430.7,134.4 432.3,127.6 434.1,120.6 435.9,113.5 437.8,106.2 439.9,98.8 442.0,91.1 444.3,83.3 446.7,75.3 449.2,67.1 451.8,58.7 454.6,50.0" fill="none" stroke="#0000a0" stroke-width="0.8" />
<polyline points="540.8,751.1 540.8,750.7 540.8,750.4 540.8,750.0 540.8,749.6 540.8,749.3 540.8,748.9 540.8,748.6 540.8,748.2 540.8,747.9 540.8,747.5 540.8,747.1 540.8,746.8 540.8,746.4 540.9,746.0 540.9,745.7 540.9,745.3 540.9,744.9 540.9,744.5 540.9,744.2 540.9,743.8 540.9,743.4 540.9,743.1 540.9,742.7 540.9,742.3 541.0,741.9 541.0,741.5 541.0,741.2 541.0,740.8 541.0,740.4 541.0,740.0 541.0,739.6 541.0,739.2 541.1,738.8 541.1,738.4 541.1,738.1 541.1,737.7 541.1,737.3 541.1,736.9 541.2,736.5 541.2,736.1 541.2,735.7 541.2,735.3 541.2,734.9 541.3,734.5 541.3,734.1 541.3,733.7 541.3,733.2 541.3,732.8 541.4,732.4 541.4,732.0 541.4,731.6 541.4,731.2 541.4,730.8 541.5,730.4 541.5,729.9 541.5,729.5 541.5,729.1 541.6,728.7 541.6,728.2 541.6,727.8 541.7,727.4 541.7,727.0 541.7,726.5 541.7,726.1 541.8,725.7 541.8,725.2 541.8,724.8 541.9,724.4 541.9,723.9 541.9,723.5 542.0,723.0 542.0,722.6 542.0,722.2 542.1,721.7 542.1,721.3 542.1,720.8 542.2,720.4 542.2,719.9 542.3,719.5 542.3,719.0 542.3,718.5 542.4,718.1 542.4,717.6 542.5,717.2 542.5,716.7 542.5,716.2 542.6,715.8 542.6,715.3 542.7,714.8 542.7,714.3 542.8,713.9 542.8,713.4 542.9,712.9 542.9,712.4 543.0,711.9 543.0,711.5 543.1,711.0 543.1,710.5 543.2,710.0 543.2,709.5 543.3,709.0 543.3,708.5 543.4,708.0 543.4,707.5 543.5,707.0 543.6,706.5 543.6,706.0 543.7,705.5 543.7,705.0 543.8,704.5 543.8,704.0 543.9,703.5 544.0,702.9 544.0,702.4 544.1,701.9 544.1,701.4 544.2,700.9 544.3,700.4 544.3,699.8 544.4,699.3 544.4,698.8 544.5,698.3 544.6,697.7 544.6,697.2 544.7,696.7 544.8,696.1 544.8,695.6 544.9,695.1 544.9,694.5 545.0,694.0 545.1,693.5 545.1,692.9 545.2,692.4 545.2,691.8 545.3,691.3 545.4,690.8 545.4,690.2 545.5,689.7 545.5,689.1 545.6,688.6 545.7,688.0 545.7,687.5 545.8,686.9 545.8,686.3 545.9,685.8 546.0,685.2 546.0,684.7 546.1,684.1 546.2,683.5 546.2,683.0 546.3,682.4 546.3,681.8 546.4,681.3 546.5,680.7 546.5,680.1 546.6,679.5 546.7,678.9 546.7,678.4 546.8,677.8 546.9,677.2 546.9,676.6 547.0,676.0 547.1,675.4 547.1,674.8 547.2,674.2 547.3,673.6 547.3,673.0 547.4,672.4 547.5,671.8 547.6,671.2 547.6,670.6 547.7,670.0 547.8,669.4 547.8,668.8 547.9,668.1 548.0,667.5 548.1,666.9 548.1,666.3 548.2,665.6 548.3,665.0 548.4,664.4 548.5,663.7 548.5,663.1 548.6,662.4 548.7,661.8 548.8,661.2 548.9,660.5 548.9,659.9 549.0,659.2 549.1,658.5 549.2,657.9 549.3,657.2 549.4,656.6 549.4,655.9 549.5,655.2 549.6,654.6 549.7,653.9 549.8,653.2 549.9,652.5 550.0,651.8 550.0,651.2 550.1,650.5 550.2,649.8 550.3,649.1 550.4,648.4 550.5,647.7 550.6,647.0 550.7,646.3 550.8,645.6 550.9,644.9 551.0,644.2 551.0,643.5 551.1,642.7 551.2,642.0 551.3,641.3 551.4,640.6 551.5,639.8 551.6,639.1 551.7,638.4 551.8,637.6 551.9,636.9 552.0,636.1 552.1,635.4 552.2,634.6 552.4,633.8 552.5,633.1 552.6,632.3 552.7,631.6 552.8,630.8 552.9,630.0 553.0,629.2 553.1,628.4 553.2,627.6 553.4,626.9 553.5,626.1 553.6,625.3 553.7,624.5 553.8,623.6 553.9,622.8 554.1,622.0 554.2,621.2 554.3,620.4 554.4,619.6 554.5,618.7 554.7,617.9 554.8,617.1 554.9,616.2 555.0,615.4 555.2,614.5 555.3,613.7 555.4,612.8 555.6,611.9 555.7,611.1 555.8,610.2 556.0,609.3 556.1,608.4 556.2,607.6 556.4,606.7 556.5,605.8 556.6,604.9 556.8,604.0 556.9,603.1 557.0,602.2 557.2,601.3 557.3,600.3 557.5,599.4 557.6,598.5 557.8,597.6 557.9,596.6 558.0,595.7 558.2,594.7 558.3,593.8 558.5,592.8 558.6,591.9 558.8,590.9 558.9,589.9 559.1,589.0 559.2,588.0 559.4,587.0 559.5,586.0 559.7,585.0 559.8,584.0 560.0,583.0 560.1,582.0 560.3,581.0 560.4,580.0 560.6,578.9 560.7,577.9 560.9,576.9 561.0,575.8 561.2,574.8 561.4,573.7 561.5,572.7 561.7,571.6 561.8,570.6 562.0,569.5 562.1,568.4 562.3,567.3 562.4,566.2 562.6,565.1 562.8,564.0 562.9,562.9 563.1,561.8 563.2,560.7 563.4,559.6 563.6,558.4 563.7,557.3 563.9,556.2 564.1,555.0 564.2,553.8 564.4,552.7 564.6,551.5 564.7,550.3 564.9,549.1 565.1,547.9 565.2,546.7 565.4,545.5 565.6,544.3 565.8,543.1 565.9,541.8 566.1,540.6 566.3,539.3 566.5,538.1 566.6,536.8 566.8,535.5 567.0,534.2 567.2,532.9 567.4,531.6 567.6,530.3 567.8,529.0 567.9,527.7 568.1,526.3 568.3,525.0 568.5,523.6 568.7,522.3 568.9,520.9 569.1,519.5 569.3,518.1 569.5,516.7 569.6,515.3 569.8,513.9 570.0,512.4 570.2,511.0 570.4,509.5 570.6,508.1 570.8,506.6 571.0,505.1 571.2,503.6 571.3,502.1 571.5,500.6 571.7,499.1 571.9,497.6 572.1,496.0 572.3,494.5 572.5,492.9 572.7,491.3 572.9,489.7 573.1,488.1 573.3,486.5 573.4,484.8 573.6,483.2 573.8,481.5 574.0,479.9 574.2,478.2 574.4,476.5 574.6,474.8 574.8,473.0 575.0,471.3 575.2,469.5 575.4,467.7 575.6,465.9 575.8,464.1 576.0,462.3 576.2,460.4 576.4,458.6 576.6,456.7 576.8,454.8 577.0,452.9 577.2,451.0 577.4,449.0 577.6,447.0 577.8,445.0 578.0,443.0 578.2,441.0 578.4,439.0 578.6,436.9 578.8,434.8 579.0,432.8 579.2,430.6 579.3,428.5 579.5,426.4 579.7,424.2 579.9,422.0 580.0,419.8 580.2,417.6 580.3,415.3 580.5,413.0 580.7,410.7 580.8,408.4 581.0,406.1 581.1,403.7 581.2,401.3 581.4,398.9 581.5,396.5 581.7,394.0 581.8,391.5 581.9,388.9 582.0,386.4 582.2,383.8 582.3,381.2 582.4,378.5 582.5,375.9 582.6,373.1 582.8,370.4 582.9,367.6 583.0,364.8 583.1,361.9 583.2,359.0 583.3,356.1 583.4,353.1 583.5,350.1 583.6,347.1 583.7,344.0 583.8,340.8 584.0,337.7 584.1,334.4 584.2,331.1 584.3,327.8 584.4,324.4 584.6,321.0 584.7,317.5 584.8,314.0 585.0,310.4 585.1,306.8 585.2,303.1 585.4,299.4 585.5,295.6 585.6,291.7 585.8,287.8 585.9,283.9 586.0,279.8 586.2,275.7 586.3,271.6 586.5,267.4 586.6,263.1 586.8,258.8 587.0,254.4 587.2,249.9 587.4,245.3 587.6,240.7 587.9,236.0 588.1,231.2 588.4,226.3 588.7,221.3 589.0,216.3 589.3,211.1 589.7,205.9 590.1,200.5 590.5,195.1 591.0,189.6 591.5,183.9 592.0,178.1 592.6,172.3 593.3,166.3 593.9,160.2 594.7,153.9 595.4,147.5 596.3,141.0 597.2,134.4 598.2,127.6 599.2,120.6 600.4,113.5 601.6,106.2 602.9,98.8 604.3,91.1 605.7,83.3 607.3,75.3 609.0,67.1 610.8,58.7 612.8,50.0" fill="none" stroke="#0000a0" stroke-width="0.8" />
<polyline points="599.6,751.1 599.6,750.7 599.7,750.4 599.7,750.0 599.7,749.6 599.8,749.3 599.8,748.9 599.9,748.6 599.9,748.2 600.0,747.9 600.0,747.5 600.0,747.1 600.1,746.8 600.1,746.4 600.2,746.0 600.2,745.7 600.3,745.3 600.3,744.9 600.4,744.5 600.4,744.2 600.5,743.8 600.5,743.4 600.6,743.1 600.6,742.7 600.7,742.3 600.7,741.9 600.8,741.5 600.8,741.2 600.9,740.8 601.0,740.4 601.0,740.0 601.1,739.6 601.1,739.2 601.2,738.8 601.2,738.4 601.3,738.1 601.4,737.7 601.4,737.3 601.5,736.9 601.5,736.5 601.6,736.1 601.7,735.7 601.7,735.3 601.8,734.9 601.9,734.5 601.9,734.1 602.0,733.7 602.1,733.2 602.1,732.8 602.2,732.4 602.3,732.0 602.3,731.6 602.4,731.2 602.5,730.8 602.6,730.4 602.6,729.9 602.7,729.5 602.8,729.1 602.8,728.7 602.9,728.2 603.0,727.8 603.1,727.4 603.1,727.0 603.2,726.5 603.3,726.1 603.4,725.7 603.5,725.2 603.5,724.8 603.6,724.4 603.7,723.9 603.8,723.5 603.9,723.0 604.0,722.6 604.0,722.2 604.1,721.7 604.2,721.3 604.3,720.8 604.4,720.4 604.5,719.9 604.6,719.5 604.7,719.0 604.8,718.5 604.9,718.1 604.9,717.6 605.0,717.2 605.1,716.7 605.2,716.2 605.3,715.8 605.4,715.3 605.5,714.8 605.6,714.3 605.7,713.9 605.8,713.4 605.9,712.9 606.1,712.4 606.2,711.9 606.3,711.5 606.4,711.0 606.5,710.5 606.6,710.0 606.7,709.5 606.8,709.0 606.9,708.5 607.0,708.0 607.2,707.5 607.3,707.0 607.4,706.5 607.5,706.0 607.6,705.5 607.7,705.0 607.9,704.5 608.0,704.0 608.1,703.5 608.2,702.9 608.3,702.4 608.5,701.9 608.6,701.4 608.7,700.9 608.8,700.4 609.0,699.8 609.1,699.3 609.2,698.8 609.3,698.3 609.5,697.7 609.6,697.2 609.7,696.7 609.8,696.1 610.0,695.6 610.1,695.1 610.2,694.5 610.3,694.0 610.5,693.5 610.6,692.9 610.7,692.4 610.9,691.8 611.0,691.3 611.1,690.8 611.2,690.2 611.4,689.7 611.5,689.1 611.6,688.6 611.8,688.0 611.9,687.5 612.0,686.9 612.2,686.3 612.3,685.8 612.4,685.2 612.6,684.7 612.7,684.1 612.8,683.5 613.0,683.0 613.1,682.4 613.3,681.8 613.4,681.3 613.5,680.7 613.7,680.1 613.8,679.5 614.0,678.9 614.1,678.4 614.2,677.8 614.4,677.2 614.5,676.6 614.7,676.0 614.8,675.4 615.0,674.8 615.1,674.2 615.3,673.6 615.4,673.0 615.6,672.4 615.7,671.8 615.9,671.2 616.0,670.6 616.2,670.0 616.4,669.4 616.5,668.8 616.7,668.1 616.8,667.5 617.0,666.9 617.2,666.3 617.3,665.6 617.5,665.0 617.7,664.4 617.8,663.7 618.0,663.1 618.2,662.4 618.3,661.8 618.5,661.2 618.7,660.5 618.9,659.9 619.0,659.2 619.2,658.5 619.4,657.9 619.6,657.2 619.7,656.6 619.9,655.9 620.1,655.2 620.3,654.6 620.5,653.9 620.7,653.2 620.8,652.5 621.0,651.8 621.2,651.2 621.4,650.5 621.6,649.8 621.8,649.1 622.0,648.4 622.2,647.7 622.4,647.0 622.6,646.3 622.8,645.6 623.0,644.9 623.2,644.2 623.4,643.5 623.6,642.7 623.8,642.0 624.0,641.3 624.2,640.6 624.4,639.8 624.6,639.1 624.8,638.4 625.0,637.6 625.3,636.9 625.5,636.1 625.7,635.4 625.9,634.6 626.1,633.8 626.4,633.1 626.6,632.3 626.8,631.6 627.1,630.8 627.3,630.0 627.5,629.2 627.8,628.4 628.0,627.6 628.2,626.9 628.5,626.1 628.7,625.3 629.0,624.5 629.2,623.6 629.5,622.8 629.7,622.0 630.0,621.2 630.2,620.4 630.5,619.6 630.7,618.7 631.0,617.9 631.3,617.1 631.5,616.2 631.8,615.4 632.1,614.5 632.3,613.7 632.6,612.8 632.9,611.9 633.2,611.1 633.4,610.2 633.7,609.3 634.0,608.4 634.3,607.6 634.6,606.7 634.9,605.8 635.1,604.9 635.4,604.0 635.7,603.1 636.0,602.2 636.3,601.3 636.6,600.3 636.9,599.4 637.2,598.5 637.5,597.6 637.9,596.6 638.2,595.7 638.5,594.7 638.8,593.8 639.1,592.8 639.4,591.9 639.8,590.9 640.1,589.9 640.4,589.0 640.7,588.0 641.1,587.0 641.4,586.0 641.7,585.0 642.1,584.0 642.4,583.0 642.7,582.0 643.1,581.0 643.4,580.0 643.8,578.9 644.1,577.9 644.5,576.9 644.8,575.8 645.2,574.8 645.6,573.7 645.9,572.7 646.3,571.6 646.6,570.6 647.0,569.5 647.4,568.4 647.8,567.3 648.1,566.2 648.5,565.1 648.9,564.0 649.3,562.9 649.7,561.8 650.1,560.7 650.4,559.6 650.8,558.4 651.2,557.3 651.6,556.2 652.1,555.0 652.5,553.8 652.9,552.7 653.3,551.5 653.7,550.3 654.1,549.1 654.6,547.9 655.0,546.7 655.4,545.5 655.9,544.3 656.3,543.1 656.8,541.8 657.2,540.6 657.7,539.3 658.1,538.1 658.6,536.8 659.1,535.5 659.5,534.2 660.0,532.9 660.5,531.6 661.0,530.3 661.5,529.0 662.0,527.7 662.5,526.3 663.0,525.0 663.5,523.6 664.0,522.3 664.5,520.9 665.0,519.5 665.5,518.1 666.1,516.7 666.6,515.3 667.1,513.9 667.7,512.4 668.2,511.0 668.8,509.5 669.3,508.1 669.9,506.6 670.5,505.1 671.0,503.6 671.6,502.1 672.2,500.6 672.8,499.1 673.4,497.6 674.0,496.0 674.6,494.5 675.2,492.9 675.8,491.3 676.4,489.7 677.0,488.1 677.7,486.5 678.3,484.8 678.9,483.2 679.6,481.5 680.3,479.9 680.9,478.2 681.6,476.5 682.3,474.8 683.0,473.0 683.7,471.3 684.4,469.5 685.1,467.7 685.8,465.9 686.5,464.1 687.3,462.3 688.0,460.4 688.8,458.6 689.6,456.7 690.3,454.8 691.1,452.9 691.9,451.0 692.7,449.0 693.5,447.0 694.4,445.0 695.2,443.0 696.0,441.0 696.9,439.0 697.7,436.9 698.6,434.8 699.5,432.8 700.3,430.6 701.2,428.5 702.1,426.4 703.0,424.2 703.9,422.0 704.9,419.8 705.8,417.6 706.7,415.3 707.7,413.0 708.6,410.7 709.6,408.4 710.6,406.1 711.6,403.7 712.6,401.3 713.6,398.9 714.7,396.5 715.7,394.0 716.8,391.5 717.9,388.9 718.9,386.4 720.0,383.8 721.2,381.2 722.3,378.5 723.5,375.9 724.6,373.1 725.8,370.4 727.0,367.6 728.2,364.8 729.5,361.9 730.7,359.0 732.0,356.1 733.3,353.1 734.6,350.1 736.0,347.1 737.3,344.0 738.7,340.8 740.1,337.7 741.6,334.4 743.0,331.1 744.5,327.8 746.0,324.4 747.6,321.0 749.2,317.5 750.7,314.0 752.4,310.4 754.0,306.8 755.6,303.1 757.3,299.4 759.0,295.6 760.8,291.7 762.5,287.8 764.3,283.9 766.1,279.8 767.9,275.7 769.8,271.6 771.7,267.4 773.6,263.1 775.6,258.8 777.5,254.4 779.5,249.9 781.6,245.3 783.6,240.7 785.7,236.0 787.8,231.2 790.0,226.3 792.2,221.3 794.4,216.3 796.7,211.1 799.0,205.9 801.3,200.5 803.7,195.1 806.1,189.6 808.5,183.9 811.0,178.1 813.5,172.3 816.1,166.3 818.7,160.2 821.3,153.9 824.0,147.5 826.7,141.0 829.5,134.4 832.3,127.6 835.1,120.6 838.0,113.5 840.9,106.2 843.9,98.8 846.9,91.1 850.0,83.3 853.1,75.3 856.3,67.1 859.5,58.7 862.7,50.0" fill="none" stroke="#0000a0" stroke-width="0.8" />
<polyline points="658.9,751.1 658.9,750.7 659.0,750.4 659.1,750.0 659.1,749.6 659.2,749.3 659.3,748.9 659.3,748.6 659.4,748.2 659.5,747.9 659.5,747.5 659.6,747.1 659.7,746.8 659.7,746.4 659.8,746.0 659.9,745.7 659.9,745.3 660.0,744.9 660.1,744.5 660.2,744.2 660.2,743.8 660.3,743.4 660.4,743.1 660.5,742.7 660.5,742.3 660.6,741.9 660.7,741.5 660.8,741.2 660.9,740.8 660.9,740.4 661.0,740.0 661.1,739.6 661.2,739.2 661.3,738.8 661.3,738.4 661.4,738.1 661.5,737.7 661.6,737.3 661.7,736.9 661.8,736.5 661.9,736.1 661.9,735.7 662.0,735.3 662.1,734.9 662.2,734.5 662.3,734.1 662.4,733.7 662.5,733.2 662.6,732.8 662.7,732.4 662.8,732.0 662.9,731.6 663.0,731.2 663.1,730.8 663.2,730.4 663.3,729.9 663.4,729.5 663.5,729.1 663.6,728.7 663.7,728.2 663.8,727.8 663.9,727.4 664.0,727.0 664.1,726.5 664.2,726.1 664.3,725.7 664.4,725.2 664.5,724.8 664.6,724.4 664.7,723.9 664.9,723.5 665.0,723.0 665.1,722.6 665.2,722.2 665.3,721.7 665.4,721.3 665.5,720.8 665.7,720.4 665.8,719.9 665.9,719.5 666.0,719.0 666.1,718.5 666.3,718.1 666.4,717.6 666.5,717.2 666.6,716.7 666.8,716.2 666.9,715.8 667.0,715.3 667.2,714.8 667.3,714.3 667.4,713.9 667.6,713.4 667.7,712.9 667.8,712.4 668.0,711.9 668.1,711.5 668.2,711.0 668.4,710.5 668.5,710.0 668.7,709.5 668.8,709.0 669.0,708.5 669.1,708.0 669.3,707.5 669.4,707.0 669.6,706.5 669.7,706.0 669.9,705.5 670.0,705.0 670.2,704.5 670.3,704.0 670.5,703.5 670.6,702.9 670.8,702.4 670.9,701.9 671.1,701.4 671.2,700.9 671.4,700.4 671.6,699.8 671.7,699.3 671.9,698.8 672.0,698.3 672.2,697.7 672.4,697.2 672.5,696.7 672.7,696.1 672.8,695.6 673.0,695.1 673.2,694.5 673.3,694.0 673.5,693.5 673.7,692.9 673.8,692.4 674.0,691.8 674.2,691.3 674.3,690.8 674.5,690.2 674.7,689.7 674.8,689.1 675.0,688.6 675.2,688.0 675.3,687.5 675.5,686.9 675.7,686.3 675.9,685.8 676.0,685.2 676.2,684.7 676.4,684.1 676.6,683.5 676.7,683.0 676.9,682.4 677.1,681.8 677.3,681.3 677.4,680.7 677.6,680.1 677.8,679.5 678.0,678.9 678.2,678.4 678.4,677.8 678.5,677.2 678.7,676.6 678.9,676.0 679.1,675.4 679.3,674.8 679.5,674.2 679.7,673.6 679.9,673.0 680.1,672.4 680.3,671.8 680.5,671.2 680.7,670.6 680.9,670.0 681.1,669.4 681.3,668.8 681.5,668.1 681.7,667.5 681.9,666.9 682.1,666.3 682.3,665.6 682.5,665.0 682.7,664.4 683.0,663.7 683.2,663.1 683.4,662.4 683.6,661.8 683.8,661.2 684.0,660.5 684.3,659.9 684.5,659.2 684.7,658.5 684.9,657.9 685.2,657.2 685.4,656.6 685.6,655.9 685.8,655.2 686.1,654.6 686.3,653.9 686.5,653.2 686.8,652.5 687.0,651.8 687.3,651.2 687.5,650.5 687.7,649.8 688.0,649.1 688.2,648.4 688.5,647.7 688.7,647.0 689.0,646.3 689.2,645.6 689.5,644.9 689.7,644.2 690.0,643.5 690.3,642.7 690.5,642.0 690.8,641.3 691.0,640.6 691.3,639.8 691.6,639.1 691.8,638.4 692.1,637.6 692.4,636.9 692.7,636.1 692.9,635.4 693.2,634.6 693.5,633.8 693.8,633.1 694.1,632.3 694.4,631.6 694.7,630.8 694.9,630.0 695.2,629.2 695.5,628.4 695.8,627.6 696.1,626.9 696.4,626.1 696.8,625.3 697.1,624.5 697.4,623.6 697.7,622.8 698.0,622.0 698.3,621.2 698.6,620.4 699.0,619.6 699.3,618.7 699.6,617.9 699.9,617.1 700.3,616.2 700.6,615.4 700.9,614.5 701.3,613.7 701.6,612.8 702.0,611.9 702.3,611.1 702.7,610.2 703.0,609.3 703.4,608.4 703.7,607.6 704.1,606.7 704.4,605.8 704.8,604.9 705.2,604.0 705.5,603.1 705.9,602.2 706.3,601.3 706.7,600.3 707.0,599.4 707.4,598.5 707.8,597.6 708.2,596.6 708.6,595.7 709.0,594.7 709.4,593.8 709.8,592.8 710.2,591.9 710.6,590.9 711.0,589.9 711.4,589.0 711.8,588.0 712.2,587.0 712.6,586.0 713.0,585.0 713.5,584.0 713.9,583.0 714.3,582.0 714.7,581.0 715.2,580.0 715.6,578.9 716.0,577.9 716.5,576.9 716.9,575.8 717.4,574.8 717.8,573.7 718.3,572.7 718.7,571.6 719.2,570.6 719.7,569.5 720.1,568.4 720.6,567.3 721.1,566.2 721.5,565.1 722.0,564.0 722.5,562.9 723.0,561.8 723.5,560.7 724.0,559.6 724.5,558.4 725.0,557.3 725.5,556.2 726.0,555.0 726.5,553.8 727.0,552.7 727.6,551.5 728.1,550.3 728.6,549.1 729.2,547.9 729.7,546.7 730.3,545.5 730.8,544.3 731.4,543.1 731.9,541.8 732.5,540.6 733.1,539.3 733.7,538.1 734.2,536.8 734.8,535.5 735.4,534.2 736.0,532.9 736.6,531.6 737.2,530.3 737.9,529.0 738.5,527.7 739.1,526.3 739.8,525.0 740.4,523.6 741.0,522.3 741.7,520.9 742.4,519.5 743.0,518.1 743.7,516.7 744.4,515.3 745.0,513.9 745.7,512.4 746.4,511.0 747.1,509.5 747.8,508.1 748.5,506.6 749.2,505.1 750.0,503.6 750.7,502.1 751.4,500.6 752.2,499.1 752.9,497.6 753.7,496.0 754.4,494.5 755.2,492.9 756.0,491.3 756.8,489.7 757.6,488.1 758.4,486.5 759.2,484.8 760.0,483.2 760.9,481.5 761.7,479.9 762.5,478.2 763.4,476.5 764.3,474.8 765.2,473.0 766.0,471.3 766.9,469.5 767.9,467.7 768.8,465.9 769.7,464.1 770.6,462.3 771.6,460.4 772.6,458.6 773.6,456.7 774.5,454.8 775.6,452.9 776.6,451.0 777.6,449.0 778.6,447.0 779.7,445.0 780.8,443.0 781.8,441.0 782.9,439.0 784.0,436.9 785.1,434.8 786.2,432.8 787.4,430.6 788.5,428.5 789.7,426.4 790.8,424.2 792.0,422.0 793.2,419.8 794.4,417.6 795.7,415.3 796.9,413.0 798.1,410.7 799.4,408.4 800.7,406.1 802.0,403.7 803.3,401.3 804.7,398.9 806.0,396.5 807.4,394.0 808.8,391.5 810.2,388.9 811.6,386.4 813.1,383.8 814.6,381.2 816.1,378.5 817.6,375.9 819.1,373.1 820.7,370.4 822.3,367.6 823.9,364.8 825.5,361.9 827.2,359.0 828.9,356.1 830.6,353.1 832.4,350.1 834.2,347.1 836.0,344.0 837.9,340.8 839.7,337.7 841.7,334.4 843.6,331.1 845.6,327.8 847.6,324.4 849.7,321.0 851.8,317.5 854.0,314.0 856.1,310.4 858.3,306.8 860.6,303.1 862.9,299.4 865.2,295.6 867.6,291.7 870.0,287.8 872.4,283.9 874.9,279.8 877.4,275.7 880.0,271.6 882.7,267.4 885.3,263.1 888.1,258.8 890.8,254.4 893.7,249.9 896.5,245.3 899.5,240.7 902.5,236.0 905.5,231.2 908.6,226.3 911.8,221.3 915.0,216.3 918.4,211.1 921.7,205.9 925.2,200.5 928.7,195.1 932.3,189.6 936.0,183.9 939.7,178.1 943.6,172.3 947.5,166.3 951.5,160.2 955.6,153.9 959.8,147.5 964.1,141.0 968.5,134.4 973.1,127.6 977.7,120.6 982.4,113.5 987.3,106.2 992.3,98.8 997.5,91.1 1002.7,83.3 1008.2,75.3 1013.7,67.1 1019.5,58.7 1025.3,50.0" fill="none" stroke="#0000a0" stroke-width="0.8" />
<line x1="121.5" y1="50.0" x2="121.5" y2="749.0" stroke="#006000" stroke-width="1" />
<line x1="181.5" y1="50.0" x2="181.5" y2="749.0" stroke="#006000" stroke-width="1" />
<line x1="241.5" y1="50.0" x2="241.5" y2="749.0" stroke="#006000" stroke-width="1" />
<line x1="301.5" y1="50.0" x2="301.5" y2="749.0" stroke="#006000" stroke-width="1" />
<line x1="361.5" y1="50.0" x2="361.5" y2="749.0" stroke="#006000" stroke-width="1" />
<line x1="421.5" y1="50.0" x2="421.5" y2="749.0" stroke="#006000" stroke-width="1" />
<line x1="481.5" y1="50.0" x2="481.5" y2="749.0" stroke="#006000" stroke-width="1" />
<line x1="541.5" y1="50.0" x2="541.5" y2="749.0" stroke="#006000" stroke-width="1" />
<line x1="601.5" y1="50.0" x2="601.5" y2="749.0" stroke="#006000" stroke-width="1" />
<rect x="61" y="50" width="600" height="699" fill="url(#diag)"/>
</g>
<g shape-rendering="crispEdges">
<rect x="56" y="321" width="611" height="1" fill="#fff" stroke="none" stroke-width="1"/>
<rect x="56" y="449" width="611" height="1" fill="#fff" stroke="none" stroke-width="1"/>
<rect x="56" y="529" width="611" height="1" fill="#fff" stroke="none" stroke-width="1"/>
<rect x="56" y="586" width="611" height="1" fill="#fff" stroke="none" stroke-width="1"/>
<rect x="56" y="630" width="611" height="1" fill="#fff" stroke="none" stroke-width="1"/>
<rect x="56" y="665" width="611" height="1" fill="#fff" stroke="none" stroke-width="1"/>
<rect x="56" y="694" width="611" height="1" fill="#fff" stroke="none" stroke-width="1"/>
<rect x="56" y="719" width="611" height="1" fill="#fff" stroke="none" stroke-width="1"/>
<rect x="56" y="740" width="606" height="1" fill="#fff" stroke="none" stroke-width="1"/>
<rect x="56" y="50" width="611" height="1" fill="#fff" stroke="none" stroke-width="1"/>
<rect x="61" y="50" width="1" height="705" fill="#fff" stroke="none" stroke-width="1"/>
<rect x="661" y="50" width="1" height="705" fill="#fff" stroke="none" stroke-width="1"/>
<rect x="61" y="749" width="601" height="1" fill="#fff" stroke="none" stroke-width="1"/>
<rect x="121" y="749" width="1" height="6" fill="#fff" stroke="none" stroke-width="1"/>
<rect x="181" y="749" width="1" height="6" fill="#fff" stroke="none" stroke-width="1"/>
<rect x="241" y="749" width="1" height="6" fill="#fff" stroke="none" stroke-width="1"/>
<rect x="301" y="749" width="1" height="6" fill="#fff" stroke="none" stroke-width="1"/>
<rect x="361" y="749" width="1" height="6" fill="#fff" stroke="none" stroke-width="1"/>
<rect x="421" y="749" width="1" height="6" fill="#fff" stroke="none" stroke-width="1"/>
<rect x="481" y="749" width="1" height="6" fill="#fff" stroke="none" stroke-width="1"/>
<rect x="541" y="749" width="1" height="6" fill="#fff" stroke="none" stroke-width="1"/>
<rect x="601" y="749" width="1" height="6" fill="#fff" stroke="none" stroke-width="1"/>
<rect x="61" y="788" width="1" height="5" fill="#fff" stroke="none" stroke-width="1"/>
<rect x="61" y="826" width="1" height="5" fill="#fff" stroke="none" stroke-width="1"/>
<rect x="121" y="788" width="1" height="5" fill="#fff" stroke="none" stroke-width="1"/>
<rect x="121" y="826" width="1" height="5" fill="#fff" stroke="none" stroke-width="1"/>
<rect x="181" y="788" width="1" height="5" fill="#fff" stroke="none" stroke-width="1"/>
<rect x="181" y="826" width="1" height="5" fill="#fff" stroke="none" stroke-width="1"/>
<rect x="241" y="788" width="1" height="5" fill="#fff" stroke="none" stroke-width="1"/>
<rect x="241" y="826" width="1" height="5" fill="#fff" stroke="none" stroke-width="1"/>
<rect x="301" y="788" width="1" height="5" fill="#fff" stroke="none" stroke-width="1"/>
<rect x="301" y="826" width="1" height="5" fill="#fff" stroke="none" stroke-width="1"/>
<rect x="361" y="788" width="1" height="5" fill="#fff" stroke="none" stroke-width="1"/>
<rect x="361" y="826" width="1" height="5" fill="#fff" stroke="none" stroke-width="1"/>
<rect x="421" y="788" width="1" height="5" fill="#fff" stroke="none" stroke-width="1"/>
<rect x="421" y="826" width="1" height="5" fill="#fff" stroke="none" stroke-width="1"/>
<rect x="481" y="788" width="1" height="5" fill="#fff" stroke="none" stroke-width="1"/>
<rect x="481" y="826" width="1" height="5" fill="#fff" stroke="none" stroke-width="1"/>
<rect x="541" y="788" width="1" height="5" fill="#fff" stroke="none" stroke-width="1"/>
<rect x="541" y="826" width="1" height="5" fill="#fff" stroke="none" stroke-width="1"/>
<rect x="601" y="788" width="1" height="5" fill="#fff" stroke="none" stroke-width="1"/>
<rect x="601" y="826" width="1" height="5" fill="#fff" stroke="none" stroke-width="1"/>
<rect x="661" y="788" width="1" height="5" fill="#fff" stroke="none" stroke-width="1"/>
<rect x="661" y="826" width="1" height="5" fill="#fff" stroke="none" stroke-width="1"/>
<rect x="61" y="863" width="1" height="5" fill="#fff" stroke="none" stroke-width="1"/>
<rect x="136" y="863" width="1" height="5" fill="#fff" stroke="none" stroke-width="1"/>
<rect x="211" y="863" width="1" height="5" fill="#fff" stroke="none" stroke-width="1"/>
<rect x="286" y="863" width="1" height="5" fill="#fff" stroke="none" stroke-width="1"/>
<rect x="361" y="863" width="1" height="5" fill="#fff" stroke="none" stroke-width="1"/>
<rect x="436" y="863" width="1" height="5" fill="#fff" stroke="none" stroke-width="1"/>
<rect x="511" y="863" width="1" height="5" fill="#fff" stroke="none" stroke-width="1"/>
<rect x="586" y="863" width="1" height="5" fill="#fff" stroke="none" stroke-width="1"/>
<rect x="661" y="863" width="1" height="5" fill="#fff" stroke="none" stroke-width="1"/>
</g>
<g clip-path="url(#cp)" shape-rendering="crispEdges">
<polyline points="61.0,709.5 81.4,709.3 123.0,711.1 169.2,712.3 213.1,713.3 255.0,713.7 341.4,715.7 380.0,716.4 431.2,717.4 470.0,718.4" fill="none" stroke="#ffff00" stroke-width="1" />
<polyline points="210.2,732.3 378.5,731.5 415.9,727.7 431.2,724.6 447.6,719.5" fill="none" stroke="#ffff00" stroke-width="1" />
<polyline points="415.9,726.6 520.0,725.1 665.0,722.0" fill="none" stroke="#c8c800" stroke-width="1" />
<polyline points="571.8,710.5 661.0,710.5" fill="none" stroke="#ff8000" stroke-width="1" />
<polyline points="596.5,719.5 661.0,727.0" fill="none" stroke="#ff8000" stroke-width="1" />
<polyline points="61.0,707.3 400.0,707.3" fill="none" stroke="#ff8000" stroke-width="1" />
<polyline points="133.6,50.0 139.6,79.5 139.6,111.0 193.0,120.0 259.0,180.0 307.0,193.5 355.0,207.0 385.5,217.0 367.2,218.6 403.8,258.3 415.4,271.1 427.6,280.2 438.9,294.0 469.4,318.4 475.2,356.8 408.9,385.2 360.0,418.4 338.0,429.0 342.4,456.2 349.7,504.2 318.8,516.9 307.9,540.5 318.8,552.2 330.6,572.0 373.4,582.6 373.4,585.8 337.1,598.4 300.8,611.8 271.6,629.2 265.3,646.6 271.6,664.7 265.3,672.6 258.9,680.5 253.4,687.1 265.3,690.8 284.2,695.5 339.8,703.3 384.9,707.7 403.6,710.2 441.5,718.0 431.2,719.0 415.9,720.0 380.0,722.0 318.9,725.9 240.0,731.2 210.0,732.3" fill="none" stroke="#00ff00" stroke-width="1.0" />
<polyline points="277.6,50.0 262.9,79.4 246.0,111.6 193.7,120.9 175.3,120.2 159.3,180.8 136.2,194.9 156.8,217.1 139.9,218.6 184.5,258.6 219.9,271.8 232.1,280.1 246.0,293.9 282.9,319.1 288.4,355.4 287.8,359.8 271.6,384.8 271.6,393.7 205.3,429.0 205.3,433.5 208.3,456.2 190.0,504.2 217.1,516.9 234.8,529.3 231.8,540.5 204.7,552.2 186.2,560.2 160.5,572.0 184.7,581.7 169.5,585.4 163.2,598.8 170.4,611.8 185.2,629.7 150.7,646.5 131.9,665.5 116.7,672.1 108.7,680.2 108.7,687.3 97.0,690.0 78.3,694.5 162.3,705.2 182.0,707.4 255.0,713.3 320.0,717.5 323.7,725.9 272.2,732.3" fill="none" stroke="#ff0080" stroke-width="1.0" />
<polyline points="515.2,50.7 483.2,79.1 448.0,111.7 440.4,120.0 396.2,179.8 384.9,194.2 351.3,217.7 325.9,258.3 330.5,271.1 336.6,280.2 354.9,294.0 336.6,318.4 337.3,353.9 336.5,358.3 338.5,384.8 338.5,393.7 345.3,433.5 332.0,449.7 323.2,456.2 274.6,501.3 281.9,516.9 287.8,529.3 280.5,540.5 272.5,552.2 339.4,560.2 314.4,582.3 332.3,587.4 364.7,598.4 359.2,611.8 343.4,646.6 331.2,672.6 326.0,680.5 319.7,690.0 328.4,695.5 345.8,705.0 355.2,705.4 367.1,706.5 386.5,707.7 403.6,710.2 430.2,712.3 465.0,716.9 475.3,718.4 476.9,720.5 471.2,732.8" fill="none" stroke="#00ffff" stroke-width="1.0" />
<polyline points="690.0,60.0 660.2,87.3 660.2,87.3 632.7,110.8 628.1,120.0 591.5,180.4 582.4,194.2 536.6,217.0 510.6,258.3 496.9,271.1 486.2,280.2 438.9,294.0 402.3,318.4 388.4,356.8 377.4,385.2 374.2,394.7 375.8,432.6 382.1,456.3 399.5,502.0 404.2,517.8 410.5,539.9 416.8,552.5 418.4,560.4 423.1,571.5 427.9,582.5 430.2,599.2 441.7,611.3 458.7,628.3 465.0,635.5 477.5,646.6 497.2,665.9 503.5,673.0 511.5,680.2 521.3,688.2 524.0,692.7 526.7,705.2 515.1,711.5 487.4,717.8 481.5,720.5 487.6,732.8" fill="none" stroke="#ff0000" stroke-width="1.0" />
<polyline points="497.2,665.9 497.2,665.3 497.2,664.6 497.2,664.0 497.2,663.4 497.1,662.7 497.1,662.1 497.1,661.4 497.1,660.8 497.1,660.1 497.1,659.5 497.1,658.8 497.1,658.2 497.0,657.5 497.0,656.8 497.0,656.2 497.0,655.5 497.0,654.8 497.0,654.2 497.0,653.5 496.9,652.8 496.9,652.1 496.9,651.5 496.9,650.8 496.9,650.1 496.9,649.4 496.8,648.7 496.8,648.0 496.8,647.3 496.8,646.6 496.8,645.9 496.8,645.2 496.7,644.5 496.7,643.8 496.7,643.0 496.7,642.3 496.7,641.6 496.7,640.9 496.6,640.1 496.6,639.4 496.6,638.7 496.6,637.9 496.6,637.2 496.6,636.4 496.5,635.7 496.5,634.9 496.5,634.2 496.5,633.4 496.5,632.6 496.4,631.9 496.4,631.1 496.4,630.3 496.4,629.6 496.4,628.8 496.4,628.0 496.3,627.2 496.3,626.4 496.3,625.6 496.3,624.8 496.3,624.0 496.2,623.2 496.2,622.4 496.2,621.6 496.2,620.7 496.2,619.9 496.1,619.1 496.1,618.2 496.1,617.4 496.1,616.6 496.1,615.7 496.0,614.9 496.0,614.0 496.0,613.2 496.0,612.3 495.9,611.4 495.9,610.6 495.9,609.7 495.9,608.8 495.8,607.9 495.8,607.1 495.8,606.2 495.7,605.3 495.7,604.4 495.7,603.5 495.6,602.6 495.6,601.6 495.6,600.7 495.5,599.8 495.5,598.9 495.5,597.9 495.4,597.0 495.4,596.1 495.4,595.1 495.3,594.2 495.3,593.2 495.2,592.3 495.2,591.3 495.2,590.3 495.1,589.4 495.1,588.4 495.0,587.4 495.0,586.4 494.9,585.4 494.9,584.4 494.8,583.4 494.8,582.4 494.7,581.4 494.6,580.4 494.6,579.4 494.5,578.3 494.5,577.3 494.4,576.3 494.3,575.2 494.3,574.2 494.2,573.1 494.1,572.1 494.0,571.0 494.0,569.9 493.9,568.9 493.8,567.8 493.7,566.7 493.6,565.6 493.6,564.5 493.5,563.4 493.4,562.3 493.3,561.2 493.2,560.1 493.1,558.9 493.0,557.8 492.9,556.6 492.8,555.5 492.7,554.3 492.6,553.2 492.5,552.0 492.4,550.8 492.3,549.6 492.1,548.4 492.0,547.2 491.9,546.0 491.8,544.8 491.7,543.6 491.6,542.4 491.4,541.1 491.3,539.9 491.2,538.6 491.0,537.3 490.9,536.1 490.8,534.8 490.6,533.5 490.5,532.2 490.4,530.9 490.2,529.6 490.1,528.2 489.9,526.9 489.8,525.5 489.6,524.2 489.4,522.8 489.3,521.5 489.1,520.1 488.9,518.7 488.8,517.3 488.6,515.9 488.4,514.5 488.2,513.0 488.0,511.6 487.8,510.2 487.6,508.7 487.4,507.2 487.2,505.8 487.0,504.3 486.8,502.8 486.6,501.3 486.4,499.7 486.1,498.2 485.9,496.7 485.7,495.1 485.4,493.6 485.2,492.0 485.0,490.4 484.7,488.8 484.5,487.2 484.2,485.5 483.9,483.9 483.7,482.2 483.4,480.6 483.1,478.9 482.9,477.2 482.6,475.5 482.3,473.8 482.0,472.0 481.7,470.3 481.4,468.5 481.1,466.7 480.8,464.9 480.5,463.1 480.2,461.2 479.9,459.4 479.6,457.5 479.3,455.6 479.0,453.7 478.7,451.8 478.3,449.8 478.0,447.9 477.7,445.9 477.4,443.9 477.0,441.9 476.7,439.8 476.3,437.8 476.0,435.7 475.6,433.6 475.2,431.5 474.9,429.4 474.5,427.3 474.1,425.1 473.7,422.9 473.4,420.7 473.0,418.5 472.6,416.3 472.2,414.0 471.8,411.7 471.4,409.4 471.0,407.1 470.6,404.7 470.2,402.3 469.8,399.9 469.3,397.5 468.9,395.0 468.5,392.5 468.1,390.0 467.7,387.5 467.3,384.9 466.9,382.3 466.5,379.7 466.1,377.0 465.7,374.3 465.4,371.6 465.0,368.8 464.6,366.0 464.2,363.2 463.9,360.3 463.5,357.4 463.2,354.4 462.9,351.4 462.6,348.4 462.3,345.3 462.0,342.2 461.7,339.0 461.4,335.8 461.2,332.5 461.0,329.2 460.7,325.9 460.6,322.5 460.4,319.0 460.2,315.5 460.1,311.9 460.0,308.3 459.9,304.7 459.8,300.9 459.7,297.2 459.6,293.4 459.6,289.5 459.6,285.5 459.6,281.5 459.7,277.5 459.7,273.4 459.8,269.2 459.9,264.9 460.1,260.6 460.3,256.2 460.5,251.8 460.7,247.3 461.0,242.6 461.3,238.0 461.7,233.2 462.1,228.4 462.5,223.4 463.0,218.4 463.5,213.3 464.1,208.1 464.7,202.8 465.3,197.4 466.1,191.9 466.8,186.3 467.7,180.6 468.6,174.8 469.5,168.8 470.5,162.8 471.6,156.6 472.8,150.3 474.0,143.8 475.4,137.2 476.8,130.5 478.2,123.6 479.8,116.5 481.5,109.3 483.3,102.0 485.1,94.4 487.1,86.7 489.2,78.7 491.5,70.6 493.8,62.3 496.3,53.7 497.4,50.0" fill="none" stroke="#f8b8f8" stroke-width="1.1" />
<polyline points="497.2,665.9 500.5,668.7 503.9,671.4 507.2,674.1 510.5,676.7 513.8,679.3 517.1,681.8 520.4,684.4 523.6,686.8 526.9,689.3 530.1,691.7 533.3,694.1 536.5,696.5 539.7,698.8 542.9,701.1 546.0,703.4 549.2,705.7 552.3,707.9 555.4,710.1 558.5,712.3 561.7,714.4 564.8,716.5 567.9,718.5 571.0,720.5 574.1,722.5 577.2,724.5 580.3,726.4 583.4,728.3 586.5,730.2 589.6,732.0" fill="none" stroke="#f8b8f8" stroke-width="1.1" />
<polyline points="473.0,708.0 497.2,665.9" fill="none" stroke="#f8b8f8" stroke-width="1" />
<polyline points="473.0,708.0 473.0,707.5 472.9,707.0 472.9,706.5 472.8,706.0 472.8,705.5 472.8,705.0 472.7,704.5 472.7,704.0 472.6,703.4 472.6,702.9 472.5,702.4 472.5,701.9 472.5,701.4 472.4,700.9 472.4,700.3 472.3,699.8 472.3,699.3 472.2,698.8 472.2,698.2 472.1,697.7 472.1,697.2 472.1,696.7 472.0,696.1 472.0,695.6 471.9,695.1 471.9,694.5 471.8,694.0 471.8,693.5 471.7,692.9 471.6,692.4 471.6,691.8 471.5,691.3 471.5,690.7 471.4,690.2 471.4,689.7 471.3,689.1 471.3,688.6 471.2,688.0 471.1,687.5 471.1,686.9 471.0,686.3 471.0,685.8 470.9,685.2 470.8,684.7 470.8,684.1 470.7,683.5 470.7,683.0 470.6,682.4 470.5,681.8 470.5,681.2 470.4,680.7 470.3,680.1 470.3,679.5 470.2,678.9 470.1,678.4 470.1,677.8 470.0,677.2 469.9,676.6 469.9,676.0 469.8,675.4 469.7,674.8 469.7,674.2 469.6,673.6 469.5,673.0 469.4,672.4 469.4,671.8 469.3,671.2 469.2,670.6 469.2,670.0 469.1,669.4 469.0,668.8 468.9,668.1 468.9,667.5 468.8,666.9 468.7,666.3 468.6,665.6 468.6,665.0 468.5,664.4 468.4,663.7 468.3,663.1 468.3,662.4 468.2,661.8 468.1,661.1 468.0,660.5 467.9,659.8 467.9,659.2 467.8,658.5 467.7,657.9 467.6,657.2 467.5,656.6 467.4,655.9 467.4,655.2 467.3,654.6 467.2,653.9 467.1,653.2 467.0,652.5 466.9,651.8 466.8,651.2 466.7,650.5 466.7,649.8 466.6,649.1 466.5,648.4 466.4,647.7 466.3,647.0 466.2,646.3 466.1,645.6 466.0,644.9 465.9,644.2 465.8,643.4 465.7,642.7 465.6,642.0 465.5,641.3 465.4,640.5 465.3,639.8 465.2,639.1 465.1,638.3 465.0,637.6 464.9,636.9 464.8,636.1 464.7,635.4 464.6,634.6 464.5,633.8 464.4,633.1 464.3,632.3 464.2,631.5 464.1,630.8 463.9,630.0 463.8,629.2 463.7,628.4 463.6,627.6 463.5,626.8 463.4,626.1 463.3,625.3 463.2,624.4 463.0,623.6 462.9,622.8 462.8,622.0 462.7,621.2 462.6,620.4 462.4,619.5 462.3,618.7 462.2,617.9 462.1,617.0 461.9,616.2 461.8,615.4 461.7,614.5 461.5,613.7 461.4,612.8 461.3,611.9 461.2,611.1 461.0,610.2 460.9,609.3 460.7,608.4 460.6,607.6 460.5,606.7 460.3,605.8 460.2,604.9 460.0,604.0 459.9,603.1 459.7,602.2 459.6,601.2 459.4,600.3 459.3,599.4 459.1,598.5 458.9,597.5 458.8,596.6 458.6,595.7 458.5,594.7 458.3,593.8 458.1,592.8 458.0,591.9 457.8,590.9 457.6,589.9 457.4,588.9 457.3,588.0 457.1,587.0 456.9,586.0 456.7,585.0 456.5,584.0 456.3,583.0 456.1,582.0 455.9,581.0 455.7,580.0 455.5,578.9 455.3,577.9 455.1,576.9 454.9,575.8 454.7,574.8 454.5,573.7 454.2,572.7 454.0,571.6 453.8,570.6 453.6,569.5 453.3,568.4 453.1,567.3 452.9,566.2 452.6,565.1 452.4,564.0 452.1,562.9 451.9,561.8 451.6,560.7 451.4,559.6 451.1,558.4 450.8,557.3 450.6,556.1 450.3,555.0 450.0,553.8 449.8,552.7 449.5,551.5 449.2,550.3 448.9,549.1 448.6,547.9 448.3,546.7 448.0,545.5 447.8,544.3 447.5,543.1 447.2,541.8 446.8,540.6 446.5,539.3 446.2,538.1 445.9,536.8 445.6,535.5 445.3,534.2 445.0,532.9 444.6,531.6 444.3,530.3 444.0,529.0 443.6,527.7 443.3,526.3 443.0,525.0 442.6,523.6 442.3,522.2 441.9,520.9 441.5,519.5 441.2,518.1 440.8,516.7 440.4,515.3 440.1,513.9 439.7,512.4 439.3,511.0 438.9,509.5 438.5,508.1 438.1,506.6 437.7,505.1 437.3,503.6 436.9,502.1 436.5,500.6 436.1,499.1 435.6,497.6 435.2,496.0 434.8,494.4 434.4,492.9 433.9,491.3 433.5,489.7 433.0,488.1 432.6,486.5 432.2,484.8 431.7,483.2 431.2,481.5 430.8,479.8 430.3,478.2 429.9,476.5 429.4,474.7 428.9,473.0 428.5,471.3 428.0,469.5 427.5,467.7 427.1,465.9 426.6,464.1 426.1,462.3 425.7,460.4 425.2,458.6 424.7,456.7 424.2,454.8 423.8,452.9 423.3,450.9 422.8,449.0 422.3,447.0 421.9,445.0 421.4,443.0 420.9,441.0 420.4,439.0 419.9,436.9 419.4,434.8 418.9,432.7 418.5,430.6 418.0,428.5 417.5,426.3 417.0,424.2 416.5,422.0 416.0,419.8 415.5,417.5 415.0,415.3 414.5,413.0 414.1,410.7 413.6,408.4 413.1,406.1 412.6,403.7 412.2,401.3 411.7,398.9 411.2,396.4 410.8,394.0 410.3,391.5 409.9,388.9 409.4,386.4 409.0,383.8 408.6,381.2 408.2,378.5 407.8,375.8 407.4,373.1 407.0,370.4 406.6,367.6 406.3,364.8 405.9,361.9 405.6,359.0 405.3,356.1 405.0,353.1 404.7,350.1 404.4,347.1 404.1,344.0 403.9,340.8 403.7,337.6 403.5,334.4 403.3,331.1 403.2,327.8 403.0,324.4 402.9,321.0 402.9,317.5 402.8,313.9 402.8,310.4 402.8,306.7 402.8,303.1 402.8,299.3 402.8,295.5 402.9,291.7 403.0,287.8 403.1,283.8 403.3,279.8 403.5,275.7 403.7,271.6 404.0,267.4 404.2,263.1 404.5,258.7 404.9,254.3 405.3,249.8 405.7,245.3 406.2,240.6 406.7,235.9 407.2,231.1 407.8,226.2 408.4,221.3 409.1,216.2 409.8,211.1 410.6,205.8 411.4,200.5 412.3,195.0 413.3,189.5 414.3,183.8 415.3,178.1 416.5,172.2 417.7,166.2 418.9,160.1 420.3,153.9 421.7,147.5 423.2,141.0 424.8,134.3 426.4,127.5 428.2,120.5 430.1,113.4 432.0,106.2 434.1,98.7 436.3,91.1 438.6,83.2 441.0,75.2 443.5,67.0 446.2,58.6 449.0,50.0" fill="none" stroke="#ff00ff" stroke-width="1.0" />
<polyline points="473.3,709.2 459.9,732.8" fill="none" stroke="#ff00ff" stroke-width="1" />
<polyline points="473.3,709.2 507.6,732.8" fill="none" stroke="#ff00ff" stroke-width="1" />
<rect x="61" y="708" width="564" height="1" fill="#ff00ff" stroke="none" stroke-width="1"/>
<path d="M631 111h5v1h-5zM633 109h1v5h-1z" fill="#fff"/>
<path d="M626 120h5v1h-5zM628 118h1v5h-1z" fill="#fff"/>
<path d="M590 180h5v1h-5zM592 178h1v5h-1z" fill="#fff"/>
<path d="M580 194h5v1h-5zM582 192h1v5h-1z" fill="#fff"/>
<path d="M535 217h5v1h-5zM537 215h1v5h-1z" fill="#fff"/>
<path d="M509 258h5v1h-5zM511 256h1v5h-1z" fill="#fff"/>
<path d="M495 271h5v1h-5zM497 269h1v5h-1z" fill="#fff"/>
<path d="M484 280h5v1h-5zM486 278h1v5h-1z" fill="#fff"/>
<path d="M437 294h5v1h-5zM439 292h1v5h-1z" fill="#fff"/>
<path d="M400 318h5v1h-5zM402 316h1v5h-1z" fill="#fff"/>
<path d="M386 357h5v1h-5zM388 355h1v5h-1z" fill="#fff"/>
<path d="M375 385h5v1h-5zM377 383h1v5h-1z" fill="#fff"/>
<path d="M372 395h5v1h-5zM374 393h1v5h-1z" fill="#fff"/>
<path d="M374 433h5v1h-5zM376 431h1v5h-1z" fill="#fff"/>
<path d="M380 456h5v1h-5zM382 454h1v5h-1z" fill="#fff"/>
<path d="M398 502h5v1h-5zM400 500h1v5h-1z" fill="#fff"/>
<path d="M402 518h5v1h-5zM404 516h1v5h-1z" fill="#fff"/>
<path d="M408 540h5v1h-5zM410 538h1v5h-1z" fill="#fff"/>
<path d="M415 552h5v1h-5zM417 550h1v5h-1z" fill="#fff"/>
<path d="M416 560h5v1h-5zM418 558h1v5h-1z" fill="#fff"/>
<path d="M421 572h5v1h-5zM423 570h1v5h-1z" fill="#fff"/>
<path d="M426 582h5v1h-5zM428 580h1v5h-1z" fill="#fff"/>
<path d="M428 599h5v1h-5zM430 597h1v5h-1z" fill="#fff"/>
<path d="M440 611h5v1h-5zM442 609h1v5h-1z" fill="#fff"/>
<path d="M457 628h5v1h-5zM459 626h1v5h-1z" fill="#fff"/>
<path d="M463 636h5v1h-5zM465 634h1v5h-1z" fill="#fff"/>
<path d="M476 647h5v1h-5zM478 645h1v5h-1z" fill="#fff"/>
<path d="M495 666h5v1h-5zM497 664h1v5h-1z" fill="#fff"/>
<path d="M502 673h5v1h-5zM504 671h1v5h-1z" fill="#fff"/>
<path d="M510 680h5v1h-5zM512 678h1v5h-1z" fill="#fff"/>
<path d="M519 688h5v1h-5zM521 686h1v5h-1z" fill="#fff"/>
<path d="M522 693h5v1h-5zM524 691h1v5h-1z" fill="#fff"/>
<path d="M525 705h5v1h-5zM527 703h1v5h-1z" fill="#fff"/>
<path d="M513 712h5v1h-5zM515 710h1v5h-1z" fill="#fff"/>
<path d="M485 718h5v1h-5zM487 716h1v5h-1z" fill="#fff"/>
<path d="M480 720h5v1h-5zM482 718h1v5h-1z" fill="#fff"/>
<path d="M486 733h5v1h-5zM488 731h1v5h-1z" fill="#fff"/>
<path d="M481 79h5v1h-5zM483 77h1v5h-1z" fill="#fff"/>
<path d="M446 112h5v1h-5zM448 110h1v5h-1z" fill="#fff"/>
<path d="M438 120h5v1h-5zM440 118h1v5h-1z" fill="#fff"/>
<path d="M394 180h5v1h-5zM396 178h1v5h-1z" fill="#fff"/>
<path d="M383 194h5v1h-5zM385 192h1v5h-1z" fill="#fff"/>
<path d="M349 218h5v1h-5zM351 216h1v5h-1z" fill="#fff"/>
<path d="M324 258h5v1h-5zM326 256h1v5h-1z" fill="#fff"/>
<path d="M328 271h5v1h-5zM330 269h1v5h-1z" fill="#fff"/>
<path d="M335 280h5v1h-5zM337 278h1v5h-1z" fill="#fff"/>
<path d="M353 294h5v1h-5zM355 292h1v5h-1z" fill="#fff"/>
<path d="M335 318h5v1h-5zM337 316h1v5h-1z" fill="#fff"/>
<path d="M335 354h5v1h-5zM337 352h1v5h-1z" fill="#fff"/>
<path d="M334 358h5v1h-5zM336 356h1v5h-1z" fill="#fff"/>
<path d="M336 385h5v1h-5zM338 383h1v5h-1z" fill="#fff"/>
<path d="M336 394h5v1h-5zM338 392h1v5h-1z" fill="#fff"/>
<path d="M343 434h5v1h-5zM345 432h1v5h-1z" fill="#fff"/>
<path d="M330 450h5v1h-5zM332 448h1v5h-1z" fill="#fff"/>
<path d="M321 456h5v1h-5zM323 454h1v5h-1z" fill="#fff"/>
<path d="M273 501h5v1h-5zM275 499h1v5h-1z" fill="#fff"/>
<path d="M280 517h5v1h-5zM282 515h1v5h-1z" fill="#fff"/>
<path d="M286 529h5v1h-5zM288 527h1v5h-1z" fill="#fff"/>
<path d="M278 540h5v1h-5zM280 538h1v5h-1z" fill="#fff"/>
<path d="M270 552h5v1h-5zM272 550h1v5h-1z" fill="#fff"/>
<path d="M337 560h5v1h-5zM339 558h1v5h-1z" fill="#fff"/>
<path d="M312 582h5v1h-5zM314 580h1v5h-1z" fill="#fff"/>
<path d="M330 587h5v1h-5zM332 585h1v5h-1z" fill="#fff"/>
<path d="M363 598h5v1h-5zM365 596h1v5h-1z" fill="#fff"/>
<path d="M357 612h5v1h-5zM359 610h1v5h-1z" fill="#fff"/>
<path d="M341 647h5v1h-5zM343 645h1v5h-1z" fill="#fff"/>
<path d="M329 673h5v1h-5zM331 671h1v5h-1z" fill="#fff"/>
<path d="M324 680h5v1h-5zM326 678h1v5h-1z" fill="#fff"/>
<path d="M318 690h5v1h-5zM320 688h1v5h-1z" fill="#fff"/>
<path d="M326 696h5v1h-5zM328 694h1v5h-1z" fill="#fff"/>
<path d="M344 705h5v1h-5zM346 703h1v5h-1z" fill="#fff"/>
<path d="M353 705h5v1h-5zM355 703h1v5h-1z" fill="#fff"/>
<path d="M365 706h5v1h-5zM367 704h1v5h-1z" fill="#fff"/>
<path d="M384 708h5v1h-5zM386 706h1v5h-1z" fill="#fff"/>
<path d="M402 710h5v1h-5zM404 708h1v5h-1z" fill="#fff"/>
<path d="M428 712h5v1h-5zM430 710h1v5h-1z" fill="#fff"/>
<path d="M138 80h5v1h-5zM140 78h1v5h-1z" fill="#fff"/>
<path d="M138 111h5v1h-5zM140 109h1v5h-1z" fill="#fff"/>
<path d="M191 120h5v1h-5zM193 118h1v5h-1z" fill="#fff"/>
<path d="M257 180h5v1h-5zM259 178h1v5h-1z" fill="#fff"/>
<path d="M305 194h5v1h-5zM307 192h1v5h-1z" fill="#fff"/>
<path d="M353 207h5v1h-5zM355 205h1v5h-1z" fill="#fff"/>
<path d="M384 217h5v1h-5zM386 215h1v5h-1z" fill="#fff"/>
<path d="M365 219h5v1h-5zM367 217h1v5h-1z" fill="#fff"/>
<path d="M402 258h5v1h-5zM404 256h1v5h-1z" fill="#fff"/>
<path d="M413 271h5v1h-5zM415 269h1v5h-1z" fill="#fff"/>
<path d="M426 280h5v1h-5zM428 278h1v5h-1z" fill="#fff"/>
<path d="M437 294h5v1h-5zM439 292h1v5h-1z" fill="#fff"/>
<path d="M467 318h5v1h-5zM469 316h1v5h-1z" fill="#fff"/>
<path d="M473 357h5v1h-5zM475 355h1v5h-1z" fill="#fff"/>
<path d="M407 385h5v1h-5zM409 383h1v5h-1z" fill="#fff"/>
<path d="M358 418h5v1h-5zM360 416h1v5h-1z" fill="#fff"/>
<path d="M336 429h5v1h-5zM338 427h1v5h-1z" fill="#fff"/>
<path d="M340 456h5v1h-5zM342 454h1v5h-1z" fill="#fff"/>
<path d="M348 504h5v1h-5zM350 502h1v5h-1z" fill="#fff"/>
<path d="M317 517h5v1h-5zM319 515h1v5h-1z" fill="#fff"/>
<path d="M306 540h5v1h-5zM308 538h1v5h-1z" fill="#fff"/>
<path d="M317 552h5v1h-5zM319 550h1v5h-1z" fill="#fff"/>
<path d="M329 572h5v1h-5zM331 570h1v5h-1z" fill="#fff"/>
<path d="M371 583h5v1h-5zM373 581h1v5h-1z" fill="#fff"/>
<path d="M371 586h5v1h-5zM373 584h1v5h-1z" fill="#fff"/>
<path d="M335 598h5v1h-5zM337 596h1v5h-1z" fill="#fff"/>
<path d="M299 612h5v1h-5zM301 610h1v5h-1z" fill="#fff"/>
<path d="M270 629h5v1h-5zM272 627h1v5h-1z" fill="#fff"/>
<path d="M263 647h5v1h-5zM265 645h1v5h-1z" fill="#fff"/>
<path d="M270 665h5v1h-5zM272 663h1v5h-1z" fill="#fff"/>
<path d="M263 673h5v1h-5zM265 671h1v5h-1z" fill="#fff"/>
<path d="M257 680h5v1h-5zM259 678h1v5h-1z" fill="#fff"/>
<path d="M251 687h5v1h-5zM253 685h1v5h-1z" fill="#fff"/>
<path d="M263 691h5v1h-5zM265 689h1v5h-1z" fill="#fff"/>
<path d="M282 696h5v1h-5zM284 694h1v5h-1z" fill="#fff"/>
<path d="M338 703h5v1h-5zM340 701h1v5h-1z" fill="#fff"/>
<path d="M383 708h5v1h-5zM385 706h1v5h-1z" fill="#fff"/>
<path d="M402 710h5v1h-5zM404 708h1v5h-1z" fill="#fff"/>
<path d="M261 79h5v1h-5zM263 77h1v5h-1z" fill="#fff"/>
<path d="M244 112h5v1h-5zM246 110h1v5h-1z" fill="#fff"/>
<path d="M192 121h5v1h-5zM194 119h1v5h-1z" fill="#fff"/>
<path d="M173 120h5v1h-5zM175 118h1v5h-1z" fill="#fff"/>
<path d="M157 181h5v1h-5zM159 179h1v5h-1z" fill="#fff"/>
<path d="M134 195h5v1h-5zM136 193h1v5h-1z" fill="#fff"/>
<path d="M155 217h5v1h-5zM157 215h1v5h-1z" fill="#fff"/>
<path d="M138 219h5v1h-5zM140 217h1v5h-1z" fill="#fff"/>
<path d="M182 259h5v1h-5zM184 257h1v5h-1z" fill="#fff"/>
<path d="M218 272h5v1h-5zM220 270h1v5h-1z" fill="#fff"/>
<path d="M230 280h5v1h-5zM232 278h1v5h-1z" fill="#fff"/>
<path d="M244 294h5v1h-5zM246 292h1v5h-1z" fill="#fff"/>
<path d="M281 319h5v1h-5zM283 317h1v5h-1z" fill="#fff"/>
<path d="M286 355h5v1h-5zM288 353h1v5h-1z" fill="#fff"/>
<path d="M286 360h5v1h-5zM288 358h1v5h-1z" fill="#fff"/>
<path d="M270 385h5v1h-5zM272 383h1v5h-1z" fill="#fff"/>
<path d="M270 394h5v1h-5zM272 392h1v5h-1z" fill="#fff"/>
<path d="M203 429h5v1h-5zM205 427h1v5h-1z" fill="#fff"/>
<path d="M203 434h5v1h-5zM205 432h1v5h-1z" fill="#fff"/>
<path d="M206 456h5v1h-5zM208 454h1v5h-1z" fill="#fff"/>
<path d="M188 504h5v1h-5zM190 502h1v5h-1z" fill="#fff"/>
<path d="M215 517h5v1h-5zM217 515h1v5h-1z" fill="#fff"/>
<path d="M233 529h5v1h-5zM235 527h1v5h-1z" fill="#fff"/>
<path d="M230 540h5v1h-5zM232 538h1v5h-1z" fill="#fff"/>
<path d="M203 552h5v1h-5zM205 550h1v5h-1z" fill="#fff"/>
<path d="M184 560h5v1h-5zM186 558h1v5h-1z" fill="#fff"/>
<path d="M158 572h5v1h-5zM160 570h1v5h-1z" fill="#fff"/>
<path d="M183 582h5v1h-5zM185 580h1v5h-1z" fill="#fff"/>
<path d="M168 585h5v1h-5zM170 583h1v5h-1z" fill="#fff"/>
<path d="M161 599h5v1h-5zM163 597h1v5h-1z" fill="#fff"/>
<path d="M168 612h5v1h-5zM170 610h1v5h-1z" fill="#fff"/>
<path d="M183 630h5v1h-5zM185 628h1v5h-1z" fill="#fff"/>
<path d="M149 646h5v1h-5zM151 644h1v5h-1z" fill="#fff"/>
<path d="M130 666h5v1h-5zM132 664h1v5h-1z" fill="#fff"/>
<path d="M115 672h5v1h-5zM117 670h1v5h-1z" fill="#fff"/>
<path d="M107 680h5v1h-5zM109 678h1v5h-1z" fill="#fff"/>
<path d="M107 687h5v1h-5zM109 685h1v5h-1z" fill="#fff"/>
<path d="M95 690h5v1h-5zM97 688h1v5h-1z" fill="#fff"/>
<path d="M76 694h5v1h-5zM78 692h1v5h-1z" fill="#fff"/>
<path d="M160 705h5v1h-5zM162 703h1v5h-1z" fill="#fff"/>
<path d="M180 707h5v1h-5zM182 705h1v5h-1z" fill="#fff"/>
<path d="M97 711h5v1h-5zM99 709h1v5h-1z" fill="#fff"/>
<path d="M189 713h5v1h-5zM191 711h1v5h-1z" fill="#fff"/>
<path d="M230 711h5v1h-5zM232 709h1v5h-1z" fill="#fff"/>
<path d="M246 712h5v1h-5zM248 710h1v5h-1z" fill="#fff"/>
<path d="M210 732h5v1h-5zM212 730h1v5h-1z" fill="#fff"/>
<path d="M270 732h5v1h-5zM272 730h1v5h-1z" fill="#fff"/>
<path d="M316 720h5v1h-5zM318 718h1v5h-1z" fill="#fff"/>
<path d="M322 724h5v1h-5zM324 722h1v5h-1z" fill="#fff"/>
<path d="M329 725h5v1h-5zM331 723h1v5h-1z" fill="#fff"/>
<path d="M335 725h5v1h-5zM337 723h1v5h-1z" fill="#fff"/>
<path d="M344 706h5v1h-5zM346 704h1v5h-1z" fill="#fff"/>
<path d="M353 706h5v1h-5zM355 704h1v5h-1z" fill="#fff"/>
<path d="M365 707h5v1h-5zM367 705h1v5h-1z" fill="#fff"/>
<path d="M380 707h5v1h-5zM382 705h1v5h-1z" fill="#fff"/>
<path d="M377 732h5v1h-5zM379 730h1v5h-1z" fill="#fff"/>
<path d="M408 711h5v1h-5zM410 709h1v5h-1z" fill="#fff"/>
<path d="M413 713h5v1h-5zM415 711h1v5h-1z" fill="#fff"/>
<path d="M428 712h5v1h-5zM430 710h1v5h-1z" fill="#fff"/>
<path d="M437 717h5v1h-5zM439 715h1v5h-1z" fill="#fff"/>
<path d="M448 718h5v1h-5zM450 716h1v5h-1z" fill="#fff"/>
<path d="M463 717h5v1h-5zM465 715h1v5h-1z" fill="#fff"/>
<path d="M471 717h5v1h-5zM473 715h1v5h-1z" fill="#fff"/>
<path d="M486 717h5v1h-5zM488 715h1v5h-1z" fill="#fff"/>
<path d="M408 720h5v1h-5zM410 718h1v5h-1z" fill="#fff"/>
<path d="M425 725h5v1h-5zM427 723h1v5h-1z" fill="#fff"/>
<path d="M432 725h5v1h-5zM434 723h1v5h-1z" fill="#fff"/>
<path d="M440 720h5v1h-5zM442 718h1v5h-1z" fill="#fff"/>
<path d="M486 725h5v1h-5zM488 723h1v5h-1z" fill="#fff"/>
<path d="M500 725h5v1h-5zM502 723h1v5h-1z" fill="#fff"/>
<path d="M469 733h5v1h-5zM471 731h1v5h-1z" fill="#fff"/>
<path d="M485 733h5v1h-5zM487 731h1v5h-1z" fill="#fff"/>
<path d="M513 711h5v1h-5zM515 709h1v5h-1z" fill="#fff"/>
<path d="M519 705h5v1h-5zM521 703h1v5h-1z" fill="#fff"/>
<path d="M586 718h5v1h-5zM588 716h1v5h-1z" fill="#fff"/>
<path d="M599 718h5v1h-5zM601 716h1v5h-1z" fill="#fff"/>
<path d="M631 724h5v1h-5zM633 722h1v5h-1z" fill="#fff"/>
<path d="M640 725h5v1h-5zM642 723h1v5h-1z" fill="#fff"/>
<rect x="61" y="672" width="2" height="1" fill="#fff"/>
<rect x="61" y="680" width="2" height="1" fill="#fff"/>
<rect x="61" y="687" width="2" height="1" fill="#fff"/>
<rect x="61" y="705" width="2" height="1" fill="#fff"/>
</g>
<g shape-rendering="crispEdges">
<rect x="67.5" y="607.5" width="43" height="17" fill="#000" stroke="#ffff00" stroke-width="1"/>
<rect x="67.5" y="636.5" width="57" height="17" fill="#000" stroke="#e06800" stroke-width="1"/>
<rect x="625.5" y="699.5" width="30" height="16" fill="#000" stroke="#ff00ff" stroke-width="1"/>
</g>
<g shape-rendering="crispEdges">
<rect x="761" y="40" width="1" height="730" fill="#00ff00" stroke="none" stroke-width="1"/>
<rect x="826" y="40" width="1" height="730" fill="#ff0080" stroke="none" stroke-width="1"/>
<line x1="761.5" y1="79.4" x2="740.9" y2="59.1" stroke="#fff" stroke-width="1" />
<line x1="761.5" y1="111.0" x2="736.0" y2="97.0" stroke="#fff" stroke-width="1" />
<line x1="761.5" y1="120.5" x2="731.8" y2="117.3" stroke="#fff" stroke-width="1" />
<line x1="761.5" y1="180.4" x2="733.3" y2="172.8" stroke="#fff" stroke-width="1" />
<line x1="761.5" y1="194.4" x2="731.8" y2="189.3" stroke="#fff" stroke-width="1" />
<line x1="761.5" y1="217.7" x2="731.8" y2="217.7" stroke="#fff" stroke-width="1" />
<line x1="761.5" y1="218.6" x2="731.8" y2="218.6" stroke="#fff" stroke-width="1" />
<line x1="761.5" y1="258.2" x2="734.1" y2="269.5" stroke="#fff" stroke-width="1" />
<line x1="761.5" y1="271.4" x2="736.0" y2="285.6" stroke="#fff" stroke-width="1" />
<line x1="761.5" y1="280.9" x2="736.0" y2="294.7" stroke="#fff" stroke-width="1" />
<line x1="761.5" y1="294.7" x2="737.1" y2="309.3" stroke="#fff" stroke-width="1" />
<line x1="761.5" y1="319.8" x2="737.1" y2="336.8" stroke="#fff" stroke-width="1" />
<line x1="761.5" y1="318.6" x2="737.1" y2="336.0" stroke="#fff" stroke-width="1" />
<line x1="761.5" y1="354.8" x2="737.1" y2="370.5" stroke="#fff" stroke-width="1" />
<line x1="761.5" y1="359.5" x2="737.1" y2="375.7" stroke="#fff" stroke-width="1" />
<line x1="761.5" y1="385.7" x2="741.3" y2="405.6" stroke="#fff" stroke-width="1" />
<line x1="761.5" y1="394.8" x2="741.3" y2="414.5" stroke="#fff" stroke-width="1" />
<line x1="761.5" y1="429.6" x2="739.4" y2="447.3" stroke="#fff" stroke-width="1" />
<line x1="761.5" y1="435.0" x2="739.4" y2="452.4" stroke="#fff" stroke-width="1" />
<line x1="761.5" y1="449.7" x2="739.4" y2="467.5" stroke="#fff" stroke-width="1" />
<line x1="761.5" y1="456.7" x2="739.4" y2="474.4" stroke="#fff" stroke-width="1" />
<line x1="761.5" y1="502.2" x2="737.1" y2="516.8" stroke="#fff" stroke-width="1" />
<line x1="761.5" y1="506.0" x2="737.1" y2="521.2" stroke="#fff" stroke-width="1" />
<line x1="761.5" y1="518.0" x2="741.3" y2="537.7" stroke="#fff" stroke-width="1" />
<line x1="761.5" y1="529.7" x2="743.2" y2="551.5" stroke="#fff" stroke-width="1" />
<line x1="761.5" y1="540.8" x2="743.4" y2="562.4" stroke="#fff" stroke-width="1" />
<line x1="761.5" y1="552.6" x2="740.0" y2="571.6" stroke="#fff" stroke-width="1" />
<line x1="761.5" y1="560.8" x2="738.1" y2="577.6" stroke="#fff" stroke-width="1" />
<line x1="761.5" y1="573.1" x2="736.2" y2="586.7" stroke="#fff" stroke-width="1" />
<line x1="761.5" y1="583.6" x2="735.6" y2="598.7" stroke="#fff" stroke-width="1" />
<line x1="761.5" y1="586.5" x2="735.6" y2="599.4" stroke="#fff" stroke-width="1" />
<line x1="761.5" y1="599.1" x2="736.2" y2="612.6" stroke="#fff" stroke-width="1" />
<line x1="761.5" y1="612.0" x2="737.1" y2="627.8" stroke="#fff" stroke-width="1" />
<line x1="761.5" y1="629.7" x2="739.1" y2="647.6" stroke="#fff" stroke-width="1" />
<line x1="761.5" y1="647.1" x2="738.1" y2="659.8" stroke="#fff" stroke-width="1" />
<line x1="761.5" y1="665.5" x2="735.2" y2="678.3" stroke="#fff" stroke-width="1" />
<line x1="761.5" y1="672.6" x2="734.3" y2="682.2" stroke="#fff" stroke-width="1" />
<line x1="761.5" y1="680.5" x2="733.3" y2="688.4" stroke="#fff" stroke-width="1" />
<line x1="761.5" y1="687.5" x2="732.6" y2="692.4" stroke="#fff" stroke-width="1" />
<line x1="761.5" y1="690.1" x2="732.2" y2="695.4" stroke="#fff" stroke-width="1" />
<line x1="761.5" y1="695.4" x2="732.2" y2="700.7" stroke="#fff" stroke-width="1" />
<line x1="761.5" y1="705.9" x2="735.2" y2="718.4" stroke="#fff" stroke-width="1" />
<line x1="761.5" y1="707.9" x2="736.2" y2="721.7" stroke="#fff" stroke-width="1" />
<line x1="761.5" y1="711.8" x2="737.2" y2="726.3" stroke="#fff" stroke-width="1" />
<line x1="761.5" y1="713.8" x2="738.3" y2="729.6" stroke="#fff" stroke-width="1" />
<line x1="761.5" y1="719.1" x2="743.8" y2="740.8" stroke="#fff" stroke-width="1" />
<line x1="761.5" y1="721.1" x2="745.1" y2="744.7" stroke="#fff" stroke-width="1" />
<line x1="761.5" y1="725.0" x2="751.7" y2="752.6" stroke="#fff" stroke-width="1" />
<line x1="761.5" y1="731.6" x2="751.4" y2="759.9" stroke="#fff" stroke-width="1" />
<line x1="826.5" y1="79.4" x2="853.1" y2="66.1" stroke="#fff" stroke-width="1" />
<line x1="826.5" y1="111.6" x2="853.1" y2="99.6" stroke="#fff" stroke-width="1" />
<line x1="826.5" y1="120.5" x2="853.1" y2="108.4" stroke="#fff" stroke-width="1" />
<line x1="826.5" y1="180.4" x2="839.8" y2="154.2" stroke="#fff" stroke-width="1" />
<line x1="826.5" y1="194.4" x2="823.1" y2="165.2" stroke="#fff" stroke-width="1" />
<line x1="826.5" y1="217.7" x2="799.6" y2="205.8" stroke="#fff" stroke-width="1" />
<line x1="826.5" y1="218.7" x2="799.6" y2="206.8" stroke="#fff" stroke-width="1" />
<line x1="826.5" y1="258.2" x2="807.2" y2="280.0" stroke="#fff" stroke-width="1" />
<line x1="826.5" y1="271.4" x2="813.3" y2="298.0" stroke="#fff" stroke-width="1" />
<line x1="826.5" y1="280.0" x2="813.3" y2="306.5" stroke="#fff" stroke-width="1" />
<line x1="826.5" y1="294.7" x2="813.3" y2="320.7" stroke="#fff" stroke-width="1" />
<line x1="826.5" y1="319.8" x2="813.3" y2="347.2" stroke="#fff" stroke-width="1" />
<line x1="826.5" y1="318.8" x2="813.8" y2="346.2" stroke="#fff" stroke-width="1" />
<line x1="826.5" y1="354.8" x2="813.3" y2="380.8" stroke="#fff" stroke-width="1" />
<line x1="826.5" y1="359.5" x2="813.3" y2="385.7" stroke="#fff" stroke-width="1" />
<line x1="826.5" y1="399.0" x2="825.6" y2="423.6" stroke="#fff" stroke-width="1" />
<line x1="826.5" y1="434.0" x2="831.2" y2="463.4" stroke="#fff" stroke-width="1" />
<line x1="826.5" y1="450.0" x2="830.3" y2="485.2" stroke="#fff" stroke-width="1" />
<line x1="826.5" y1="501.3" x2="826.5" y2="518.3" stroke="#fff" stroke-width="1" />
<line x1="826.5" y1="519.3" x2="837.9" y2="546.8" stroke="#fff" stroke-width="1" />
<line x1="826.5" y1="531.6" x2="839.8" y2="556.2" stroke="#fff" stroke-width="1" />
<line x1="826.5" y1="540.7" x2="834.0" y2="560.0" stroke="#fff" stroke-width="1" />
<line x1="826.5" y1="541.3" x2="839.8" y2="555.8" stroke="#fff" stroke-width="1" />
<line x1="826.5" y1="552.0" x2="839.8" y2="566.5" stroke="#fff" stroke-width="1" />
<line x1="826.5" y1="563.4" x2="835.4" y2="580.7" stroke="#fff" stroke-width="1" />
<line x1="826.5" y1="572.2" x2="832.6" y2="588.6" stroke="#fff" stroke-width="1" />
<line x1="826.5" y1="584.2" x2="826.3" y2="598.0" stroke="#fff" stroke-width="1" />
<line x1="826.5" y1="588.0" x2="813.3" y2="612.6" stroke="#fff" stroke-width="1" />
<line x1="826.5" y1="599.4" x2="817.7" y2="611.4" stroke="#fff" stroke-width="1" />
<line x1="826.5" y1="613.0" x2="826.3" y2="627.2" stroke="#fff" stroke-width="1" />
<line x1="826.5" y1="613.0" x2="837.7" y2="638.5" stroke="#fff" stroke-width="1" />
<line x1="826.5" y1="629.7" x2="843.6" y2="652.4" stroke="#fff" stroke-width="1" />
<line x1="826.5" y1="647.1" x2="839.2" y2="660.0" stroke="#fff" stroke-width="1" />
<line x1="826.5" y1="665.5" x2="853.7" y2="690.1" stroke="#fff" stroke-width="1" />
<line x1="826.5" y1="672.6" x2="843.8" y2="686.2" stroke="#fff" stroke-width="1" />
<line x1="826.5" y1="680.5" x2="843.8" y2="685.8" stroke="#fff" stroke-width="1" />
<line x1="826.5" y1="687.5" x2="856.3" y2="685.3" stroke="#fff" stroke-width="1" />
<line x1="826.5" y1="690.1" x2="856.3" y2="690.5" stroke="#fff" stroke-width="1" />
<line x1="826.5" y1="695.4" x2="856.3" y2="700.7" stroke="#fff" stroke-width="1" />
<line x1="826.5" y1="705.3" x2="817.5" y2="738.8" stroke="#fff" stroke-width="1" />
<line x1="826.5" y1="711.8" x2="818.8" y2="740.8" stroke="#fff" stroke-width="1" />
<line x1="826.5" y1="715.8" x2="826.4" y2="748.0" stroke="#fff" stroke-width="1" />
<line x1="826.5" y1="727.6" x2="851.7" y2="746.7" stroke="#fff" stroke-width="1" />
<line x1="826.5" y1="731.6" x2="841.8" y2="749.3" stroke="#fff" stroke-width="1" />
<line x1="826.5" y1="731.6" x2="832.0" y2="749.3" stroke="#fff" stroke-width="1" />
<rect x="729" y="827" width="15" height="8" fill="#ff0000" stroke="none" stroke-width="1"/>
<rect x="729" y="847" width="15" height="8" fill="#00ffff" stroke="none" stroke-width="1"/>
<rect x="729" y="867" width="15" height="8" fill="#00ff00" stroke="none" stroke-width="1"/>
<rect x="729" y="887" width="15" height="8" fill="#ff0080" stroke="none" stroke-width="1"/>
<rect x="729" y="907" width="15" height="8" fill="#c8c800" stroke="none" stroke-width="1"/>
<rect x="729" y="927" width="15" height="8" fill="#3e3c00" stroke="none" stroke-width="1"/>
<rect x="1079" y="827" width="15" height="8" fill="#00ff00" stroke="none" stroke-width="1"/>
<rect x="1079" y="847" width="15" height="8" fill="#ffff00" stroke="none" stroke-width="1"/>
<rect x="1079" y="867" width="15" height="8" fill="#ff0000" stroke="none" stroke-width="1"/>
</g>
<g filter="url(#crisp)">
<text transform="translate(53 55) scale(1 1.1)" fill="#fff" font-size="12.6" text-anchor="end" >100</text>
<text transform="translate(53 326) scale(1 1.1)" fill="#fff" font-size="12.6" text-anchor="end" >200</text>
<text transform="translate(53 454) scale(1 1.1)" fill="#fff" font-size="12.6" text-anchor="end" >300</text>
<text transform="translate(53 534) scale(1 1.1)" fill="#fff" font-size="12.6" text-anchor="end" >400</text>
<text transform="translate(53 591) scale(1 1.1)" fill="#fff" font-size="12.6" text-anchor="end" >500</text>
<text transform="translate(53 635) scale(1 1.1)" fill="#fff" font-size="12.6" text-anchor="end" >600</text>
<text transform="translate(53 670) scale(1 1.1)" fill="#fff" font-size="12.6" text-anchor="end" >700</text>
<text transform="translate(53 699) scale(1 1.1)" fill="#fff" font-size="12.6" text-anchor="end" >800</text>
<text transform="translate(53 724) scale(1 1.1)" fill="#fff" font-size="12.6" text-anchor="end" >900</text>
<text transform="translate(53 745) scale(1 1.1)" fill="#fff" font-size="12.6" text-anchor="end" >1000</text>
<text transform="translate(670 50) scale(1 1.1)" fill="#fff" font-size="12.6" text-anchor="start" >16270m</text>
<text transform="translate(670 321) scale(1 1.1)" fill="#fff" font-size="12.6" text-anchor="start" >11900m</text>
<text transform="translate(670 449) scale(1 1.1)" fill="#fff" font-size="12.6" text-anchor="start" >9310m</text>
<text transform="translate(670 529) scale(1 1.1)" fill="#fff" font-size="12.6" text-anchor="start" >7310m</text>
<text transform="translate(670 586) scale(1 1.1)" fill="#fff" font-size="12.6" text-anchor="start" >5670m</text>
<text transform="translate(670 630) scale(1 1.1)" fill="#fff" font-size="12.6" text-anchor="start" >4223m</text>
<text transform="translate(670 665) scale(1 1.1)" fill="#fff" font-size="12.6" text-anchor="start" >3001m</text>
<text transform="translate(670 694) scale(1 1.1)" fill="#fff" font-size="12.6" text-anchor="start" >1866m</text>
<text transform="translate(670 719) scale(1 1.1)" fill="#fff" font-size="12.6" text-anchor="start" >858m</text>
<text transform="translate(59 768) scale(1 1.1)" fill="#fff" font-size="12.6" text-anchor="middle" >-50</text>
<text transform="translate(61 806) scale(1 1.1)" fill="#fff" font-size="12.6" text-anchor="middle" >0</text>
<text transform="translate(61 843) scale(1 1.1)" fill="#fff" font-size="12.6" text-anchor="middle" >0</text>
<text transform="translate(119 768) scale(1 1.1)" fill="#fff" font-size="12.6" text-anchor="middle" >-40</text>
<text transform="translate(121 806) scale(1 1.1)" fill="#fff" font-size="12.6" text-anchor="middle" >10</text>
<text transform="translate(121 843) scale(1 1.1)" fill="#fff" font-size="12.6" text-anchor="middle" >300</text>
<text transform="translate(179 768) scale(1 1.1)" fill="#fff" font-size="12.6" text-anchor="middle" >-30</text>
<text transform="translate(181 806) scale(1 1.1)" fill="#fff" font-size="12.6" text-anchor="middle" >20</text>
<text transform="translate(181 843) scale(1 1.1)" fill="#fff" font-size="12.6" text-anchor="middle" >600</text>
<text transform="translate(239 768) scale(1 1.1)" fill="#fff" font-size="12.6" text-anchor="middle" >-20</text>
<text transform="translate(241 806) scale(1 1.1)" fill="#fff" font-size="12.6" text-anchor="middle" >30</text>
<text transform="translate(241 843) scale(1 1.1)" fill="#fff" font-size="12.6" text-anchor="middle" >900</text>
<text transform="translate(299 768) scale(1 1.1)" fill="#fff" font-size="12.6" text-anchor="middle" >-10</text>
<text transform="translate(301 806) scale(1 1.1)" fill="#fff" font-size="12.6" text-anchor="middle" >40</text>
<text transform="translate(301 843) scale(1 1.1)" fill="#fff" font-size="12.6" text-anchor="middle" >1200</text>
<text transform="translate(361 768) scale(1 1.1)" fill="#fff" font-size="12.6" text-anchor="middle" >0</text>
<text transform="translate(361 806) scale(1 1.1)" fill="#fff" font-size="12.6" text-anchor="middle" >50</text>
<text transform="translate(361 843) scale(1 1.1)" fill="#fff" font-size="12.6" text-anchor="middle" >1500</text>
<text transform="translate(421 768) scale(1 1.1)" fill="#fff" font-size="12.6" text-anchor="middle" >10</text>
<text transform="translate(421 806) scale(1 1.1)" fill="#fff" font-size="12.6" text-anchor="middle" >60</text>
<text transform="translate(421 843) scale(1 1.1)" fill="#fff" font-size="12.6" text-anchor="middle" >1800</text>
<text transform="translate(481 768) scale(1 1.1)" fill="#fff" font-size="12.6" text-anchor="middle" >20</text>
<text transform="translate(481 806) scale(1 1.1)" fill="#fff" font-size="12.6" text-anchor="middle" >70</text>
<text transform="translate(481 843) scale(1 1.1)" fill="#fff" font-size="12.6" text-anchor="middle" >2100</text>
<text transform="translate(541 768) scale(1 1.1)" fill="#fff" font-size="12.6" text-anchor="middle" >30</text>
<text transform="translate(541 806) scale(1 1.1)" fill="#fff" font-size="12.6" text-anchor="middle" >80</text>
<text transform="translate(541 843) scale(1 1.1)" fill="#fff" font-size="12.6" text-anchor="middle" >2400</text>
<text transform="translate(601 768) scale(1 1.1)" fill="#fff" font-size="12.6" text-anchor="middle" >40</text>
<text transform="translate(601 806) scale(1 1.1)" fill="#fff" font-size="12.6" text-anchor="middle" >90</text>
<text transform="translate(601 843) scale(1 1.1)" fill="#fff" font-size="12.6" text-anchor="middle" >2700</text>
<text transform="translate(661 768) scale(1 1.1)" fill="#fff" font-size="12.6" text-anchor="middle" >50</text>
<text transform="translate(661 806) scale(1 1.1)" fill="#fff" font-size="12.6" text-anchor="middle" >100</text>
<text transform="translate(661 843) scale(1 1.1)" fill="#fff" font-size="12.6" text-anchor="middle" >3000</text>
<text transform="translate(59 880) scale(1 1.1)" fill="#fff" font-size="12.6" text-anchor="middle" >-100</text>
<text transform="translate(134 880) scale(1 1.1)" fill="#fff" font-size="12.6" text-anchor="middle" >-50</text>
<text transform="translate(211 880) scale(1 1.1)" fill="#fff" font-size="12.6" text-anchor="middle" >0</text>
<text transform="translate(286 880) scale(1 1.1)" fill="#fff" font-size="12.6" text-anchor="middle" >50</text>
<text transform="translate(361 880) scale(1 1.1)" fill="#fff" font-size="12.6" text-anchor="middle" >100</text>
<text transform="translate(436 880) scale(1 1.1)" fill="#fff" font-size="12.6" text-anchor="middle" >150</text>
<text transform="translate(511 880) scale(1 1.1)" fill="#fff" font-size="12.6" text-anchor="middle" >200</text>
<text transform="translate(586 880) scale(1 1.1)" fill="#fff" font-size="12.6" text-anchor="middle" >250</text>
<text transform="translate(661 880) scale(1 1.1)" fill="#fff" font-size="12.6" text-anchor="middle" >300</text>
<text transform="translate(361 781) scale(1 1.1)" fill="#fff" font-size="13" text-anchor="middle" >Temperature, Dewpoint  [ °C ]</text>
<text transform="translate(361 819) scale(1 1.1)" fill="#fff" font-size="13" text-anchor="middle" >Windspeed  [ knt ]</text>
<text transform="translate(361 857) scale(1 1.1)" fill="#fff" font-size="13" text-anchor="middle" >CAPE, CINH * 5  [ J/kg ]</text>
<text transform="translate(361 893) scale(1 1.1)" fill="#fff" font-size="13" text-anchor="middle" >Storm Relative Helicity  [ m^2/s^2 ]</text>
<text transform="translate(89 621) scale(1 1.1)" fill="#ffff00" font-size="13" text-anchor="middle" >CAPE</text>
<text transform="translate(96 650) scale(1 1.1)" fill="#e06800" font-size="12.5" text-anchor="middle" >CINH * 5</text>
<text transform="translate(640.5 713) scale(1 1.1)" fill="#ff00ff" font-size="13" text-anchor="middle" >LCL</text>
<text transform="translate(753 836) scale(1 1.1)" fill="#ff0000" font-size="13" text-anchor="start" >Temperature Profile</text>
<text transform="translate(753 856) scale(1 1.1)" fill="#00ffff" font-size="13" text-anchor="start" >Dewpoint Profile</text>
<text transform="translate(753 876) scale(1 1.1)" fill="#00ff00" font-size="13" text-anchor="start" >OBS Windspeed Profile</text>
<text transform="translate(753 896) scale(1 1.1)" fill="#ff0080" font-size="13" text-anchor="start" >SR Windspeed Profile</text>
<text transform="translate(753 916) scale(1 1.1)" fill="#c8c800" font-size="13" text-anchor="start" >Sfc-3km Storm Relative Helicity Profile</text>
<text transform="translate(753 936) scale(1 1.1)" fill="#3e3c00" font-size="13" text-anchor="start" >Effective Layer (CAPE &gt;= 100 J/kg)</text>
<text transform="translate(1103 836) scale(1 1.1)" fill="#00ff00" font-size="13" text-anchor="start" >No / Non Severe Thunderstorms</text>
<text transform="translate(1103 856) scale(1 1.1)" fill="#ffff00" font-size="13" text-anchor="start" >Scattered / Moderate Thunderstorms</text>
<text transform="translate(1103 876) scale(1 1.1)" fill="#ff0000" font-size="13" text-anchor="start" >Widespread / Severe Thunderstorms</text>
<text transform="translate(894 40) scale(1 1.1)" fill="#fff" font-size="13" text-anchor="start" text-decoration="underline">Parameter</text>
<text transform="translate(1064 40) scale(1 1.1)" fill="#fff" font-size="13" text-anchor="start" text-decoration="underline">Value LCL</text>
<text transform="translate(1152 40) scale(1 1.1)" fill="#fff" font-size="13" text-anchor="start" text-decoration="underline">Value CCL</text>
<text transform="translate(1230 40) scale(1 1.1)" fill="#fff" font-size="13" text-anchor="start" text-decoration="underline">Unit</text>
<text transform="translate(894 104) scale(1 1.1)" fill="#fff" font-size="13" text-anchor="start" text-decoration="underline">Parcels: Using 100mB mean layer LCL + CCL</text>
<text transform="translate(894 339) scale(1 1.1)" fill="#fff" font-size="13" text-anchor="start" text-decoration="underline">Convective Indices</text>
<text transform="translate(894 587) scale(1 1.1)" fill="#fff" font-size="13" text-anchor="start" text-decoration="underline">Wind Parameters</text>
<text transform="translate(894 62) scale(1 1.1)" fill="#fff" font-size="13" text-anchor="start" >Convective Temperature:</text>
<text transform="translate(1123 62) scale(1 1.1)" fill="#ff0000" font-size="13" text-anchor="end" >36.87</text>
<text transform="translate(1230 62) scale(1 1.1)" fill="#fff" font-size="13" text-anchor="start" >[°C]</text>
<text transform="translate(894 79) scale(1 1.1)" fill="#fff" font-size="13" text-anchor="start" >Snowfall Height:</text>
<text transform="translate(1123 79) scale(1 1.1)" fill="#ffffff" font-size="13" text-anchor="end" >3329.48</text>
<text transform="translate(1230 79) scale(1 1.1)" fill="#fff" font-size="13" text-anchor="start" >[m]</text>
<text transform="translate(894 124) scale(1 1.1)" fill="#fff" font-size="13" text-anchor="start" >Lifted Index:</text>
<text transform="translate(1123 124) scale(1 1.1)" fill="#ff0000" font-size="13" text-anchor="end" >-4.61</text>
<text transform="translate(1213 124) scale(1 1.1)" fill="#ff0000" font-size="13" text-anchor="end" >-11.11</text>
<text transform="translate(1230 124) scale(1 1.1)" fill="#fff" font-size="13" text-anchor="start" >[°C]</text>
<text transform="translate(894 141) scale(1 1.1)" fill="#fff" font-size="13" text-anchor="start" >CAPE:</text>
<text transform="translate(1123 141) scale(1 1.1)" fill="#ff0000" font-size="13" text-anchor="end" >1514.59</text>
<text transform="translate(1213 141) scale(1 1.1)" fill="#ff0000" font-size="13" text-anchor="end" >4306.74</text>
<text transform="translate(1230 141) scale(1 1.1)" fill="#fff" font-size="13" text-anchor="start" >[J/kg]</text>
<text transform="translate(894 158) scale(1 1.1)" fill="#fff" font-size="13" text-anchor="start" >CINH:</text>
<text transform="translate(1123 158) scale(1 1.1)" fill="#00ff00" font-size="13" text-anchor="end" >630.82</text>
<text transform="translate(1230 158) scale(1 1.1)" fill="#fff" font-size="13" text-anchor="start" >[J/kg]</text>
<text transform="translate(894 175) scale(1 1.1)" fill="#fff" font-size="13" text-anchor="start" >CAPE Virt.:</text>
<text transform="translate(1123 175) scale(1 1.1)" fill="#ff0000" font-size="13" text-anchor="end" >1585.39</text>
<text transform="translate(1213 175) scale(1 1.1)" fill="#ff0000" font-size="13" text-anchor="end" >4081.25</text>
<text transform="translate(1230 175) scale(1 1.1)" fill="#fff" font-size="13" text-anchor="start" >[J/kg]</text>
<text transform="translate(894 192) scale(1 1.1)" fill="#fff" font-size="13" text-anchor="start" >CINH Virt.:</text>
<text transform="translate(1123 192) scale(1 1.1)" fill="#00ff00" font-size="13" text-anchor="end" >499.29</text>
<text transform="translate(1230 192) scale(1 1.1)" fill="#fff" font-size="13" text-anchor="start" >[J/kg]</text>
<text transform="translate(894 209) scale(1 1.1)" fill="#fff" font-size="13" text-anchor="start" >DCAPE (LFS = 525mB):</text>
<text transform="translate(1123 209) scale(1 1.1)" fill="#ff0000" font-size="13" text-anchor="end" >1362.74</text>
<text transform="translate(1230 209) scale(1 1.1)" fill="#fff" font-size="13" text-anchor="start" >[J/kg]</text>
<text transform="translate(894 226) scale(1 1.1)" fill="#fff" font-size="13" text-anchor="start" >850-600 Lapse Rate:</text>
<text transform="translate(1123 226) scale(1 1.1)" fill="#ff0000" font-size="13" text-anchor="end" >22.48</text>
<text transform="translate(1230 226) scale(1 1.1)" fill="#fff" font-size="13" text-anchor="start" >[°C]</text>
<text transform="translate(894 243) scale(1 1.1)" fill="#fff" font-size="13" text-anchor="start" >Fawbush-Miller Hail Size:</text>
<text transform="translate(1123 243) scale(1 1.1)" fill="#ffff00" font-size="13" text-anchor="end" >1.9 - 2.5</text>
<text transform="translate(1230 243) scale(1 1.1)" fill="#fff" font-size="13" text-anchor="start" >[cm]</text>
<text transform="translate(894 260) scale(1 1.1)" fill="#fff" font-size="13" text-anchor="start" >Sig. Hail Param. (SHIP):</text>
<text transform="translate(1123 260) scale(1 1.1)" fill="#ff0000" font-size="13" text-anchor="end" >2.10</text>
<text transform="translate(1230 260) scale(1 1.1)" fill="#fff" font-size="13" text-anchor="start" >[1]</text>
<text transform="translate(894 277) scale(1 1.1)" fill="#fff" font-size="13" text-anchor="start" >Max. Hail Size (new, new2, old):</text>
<text transform="translate(1123 277) scale(1 1.1)" fill="#ff0000" font-size="13" text-anchor="end" >6.78</text>
<text transform="translate(1124.2 277) scale(1 1.1)" fill="#ffffff" font-size="13" text-anchor="start" >,</text>
<text transform="translate(1136 277) scale(1 1.1)" fill="#ff0000" font-size="13" text-anchor="start" >7.43</text>
<text transform="translate(1161.5 277) scale(1 1.1)" fill="#ffffff" font-size="13" text-anchor="start" >,</text>
<text transform="translate(1172.6 277) scale(1 1.1)" fill="#ff0000" font-size="13" text-anchor="start" >6.50</text>
<text transform="translate(1230 277) scale(1 1.1)" fill="#fff" font-size="13" text-anchor="start" >[cm]</text>
<text transform="translate(894 297) scale(1 1.1)" fill="#fff" font-size="13" text-anchor="start" >LCL / CCL (AGL):</text>
<text transform="translate(1123 297) scale(1 1.1)" fill="#ff0000" font-size="13" text-anchor="end" >988.14</text>
<text transform="translate(1213 297) scale(1 1.1)" fill="#00ff00" font-size="13" text-anchor="end" >2665.86</text>
<text transform="translate(1230 297) scale(1 1.1)" fill="#fff" font-size="13" text-anchor="start" >[m]</text>
<text transform="translate(894 314) scale(1 1.1)" fill="#fff" font-size="13" text-anchor="start" >Convective Height:</text>
<text transform="translate(1123 314) scale(1 1.1)" fill="#ff0000" font-size="13" text-anchor="end" >10.52</text>
<text transform="translate(1213 314) scale(1 1.1)" fill="#ff0000" font-size="13" text-anchor="end" >9.51</text>
<text transform="translate(1230 314) scale(1 1.1)" fill="#fff" font-size="13" text-anchor="start" >[km]</text>
<text transform="translate(894 359) scale(1 1.1)" fill="#fff" font-size="13" text-anchor="start" >Showalter Index:</text>
<text transform="translate(1123 359) scale(1 1.1)" fill="#ffff00" font-size="13" text-anchor="end" >1.96</text>
<text transform="translate(1230 359) scale(1 1.1)" fill="#fff" font-size="13" text-anchor="start" >[°C]</text>
<text transform="translate(894 376) scale(1 1.1)" fill="#fff" font-size="13" text-anchor="start" >Modified Thompson Index:</text>
<text transform="translate(1123 376) scale(1 1.1)" fill="#00ff00" font-size="13" text-anchor="end" >23.64</text>
<text transform="translate(1230 376) scale(1 1.1)" fill="#fff" font-size="13" text-anchor="start" >[°C]</text>
<text transform="translate(894 393) scale(1 1.1)" fill="#fff" font-size="13" text-anchor="start" >Total Totals Index:</text>
<text transform="translate(1123 393) scale(1 1.1)" fill="#ffff00" font-size="13" text-anchor="end" >47.60</text>
<text transform="translate(1230 393) scale(1 1.1)" fill="#fff" font-size="13" text-anchor="start" >[°C]</text>
<text transform="translate(894 410) scale(1 1.1)" fill="#fff" font-size="13" text-anchor="start" >KO Index:</text>
<text transform="translate(1123 410) scale(1 1.1)" fill="#ff0000" font-size="13" text-anchor="end" >-10.67</text>
<text transform="translate(1230 410) scale(1 1.1)" fill="#fff" font-size="13" text-anchor="start" >[1]</text>
<text transform="translate(894 427) scale(1 1.1)" fill="#fff" font-size="13" text-anchor="start" >Craven SigSvr / 1000:</text>
<text transform="translate(1123 427) scale(1 1.1)" fill="#ff0000" font-size="13" text-anchor="end" >21.76</text>
<text transform="translate(1230 427) scale(1 1.1)" fill="#fff" font-size="13" text-anchor="start" >[m^3/s^3]</text>
<text transform="translate(894 444) scale(1 1.1)" fill="#fff" font-size="13" text-anchor="start" >SCP RM (new, old):</text>
<text transform="translate(1123 444) scale(1 1.1)" fill="#ff0000" font-size="13" text-anchor="end" >17.89</text>
<text transform="translate(1124.2 444) scale(1 1.1)" fill="#ffffff" font-size="13" text-anchor="start" >,</text>
<text transform="translate(1136 444) scale(1 1.1)" fill="#ff0000" font-size="13" text-anchor="start" >19.59</text>
<text transform="translate(1230 444) scale(1 1.1)" fill="#fff" font-size="13" text-anchor="start" >[1]</text>
<text transform="translate(894 461) scale(1 1.1)" fill="#fff" font-size="13" text-anchor="start" >SCP LM (new, old):</text>
<text transform="translate(1123 461) scale(1 1.1)" fill="#ff0000" font-size="13" text-anchor="end" >7.50</text>
<text transform="translate(1124.2 461) scale(1 1.1)" fill="#ffffff" font-size="13" text-anchor="start" >,</text>
<text transform="translate(1136 461) scale(1 1.1)" fill="#ff0000" font-size="13" text-anchor="start" >15.10</text>
<text transform="translate(1230 461) scale(1 1.1)" fill="#fff" font-size="13" text-anchor="start" >[1]</text>
<text transform="translate(894 478) scale(1 1.1)" fill="#fff" font-size="13" text-anchor="start" >STP (new, old):</text>
<text transform="translate(1123 478) scale(1 1.1)" fill="#ff0000" font-size="13" text-anchor="end" >3.83</text>
<text transform="translate(1124.2 478) scale(1 1.1)" fill="#ffffff" font-size="13" text-anchor="start" >,</text>
<text transform="translate(1136 478) scale(1 1.1)" fill="#ff0000" font-size="13" text-anchor="start" >4.12</text>
<text transform="translate(1230 478) scale(1 1.1)" fill="#fff" font-size="13" text-anchor="start" >[1]</text>
<text transform="translate(894 495) scale(1 1.1)" fill="#fff" font-size="13" text-anchor="start" >SB STP (fix):</text>
<text transform="translate(1123 495) scale(1 1.1)" fill="#ff0000" font-size="13" text-anchor="end" >8.90</text>
<text transform="translate(1230 495) scale(1 1.1)" fill="#fff" font-size="13" text-anchor="start" >[1]</text>
<text transform="translate(894 512) scale(1 1.1)" fill="#fff" font-size="13" text-anchor="start" >Derecho Comp Param:</text>
<text transform="translate(1123 512) scale(1 1.1)" fill="#ff0000" font-size="13" text-anchor="end" >5.02</text>
<text transform="translate(1230 512) scale(1 1.1)" fill="#fff" font-size="13" text-anchor="start" >[1]</text>
<text transform="translate(894 529) scale(1 1.1)" fill="#fff" font-size="13" text-anchor="start" >MCS 18m/s (MMP, MSP):</text>
<text transform="translate(1123 529) scale(1 1.1)" fill="#ff0000" font-size="13" text-anchor="end" >97.89</text>
<text transform="translate(1124.2 529) scale(1 1.1)" fill="#ffffff" font-size="13" text-anchor="start" >,</text>
<text transform="translate(1136 529) scale(1 1.1)" fill="#ffffff" font-size="13" text-anchor="start" >---</text>
<text transform="translate(1230 529) scale(1 1.1)" fill="#fff" font-size="13" text-anchor="start" >[%]</text>
<text transform="translate(894 546) scale(1 1.1)" fill="#fff" font-size="13" text-anchor="start" >Exp. Supercell Index CH:</text>
<text transform="translate(1123 546) scale(1 1.1)" fill="#ff0000" font-size="13" text-anchor="end" >8.73</text>
<text transform="translate(1230 546) scale(1 1.1)" fill="#fff" font-size="13" text-anchor="start" >[1]</text>
<text transform="translate(894 563) scale(1 1.1)" fill="#fff" font-size="13" text-anchor="start" >SWISS 12 Index:</text>
<text transform="translate(1123 563) scale(1 1.1)" fill="#ff0000" font-size="13" text-anchor="end" >-4.95</text>
<text transform="translate(1230 563) scale(1 1.1)" fill="#fff" font-size="13" text-anchor="start" >[1]</text>
<text transform="translate(894 608) scale(1 1.1)" fill="#fff" font-size="13" text-anchor="start" >Storm Direction:</text>
<text transform="translate(1123 608) scale(1 1.1)" fill="#ffffff" font-size="13" text-anchor="end" >261.33</text>
<text transform="translate(1230 608) scale(1 1.1)" fill="#fff" font-size="13" text-anchor="start" >[°]</text>
<text transform="translate(894 625) scale(1 1.1)" fill="#fff" font-size="13" text-anchor="start" >Storm Motion:</text>
<text transform="translate(1123 625) scale(1 1.1)" fill="#ff0000" font-size="13" text-anchor="end" >39.73</text>
<text transform="translate(1230 625) scale(1 1.1)" fill="#fff" font-size="13" text-anchor="start" >[knt]</text>
<text transform="translate(894 645) scale(1 1.1)" fill="#fff" font-size="13" text-anchor="start" >SR Wind Sfc-2km:</text>
<text transform="translate(1123 645) scale(1 1.1)" fill="#ff0000" font-size="13" text-anchor="end" >20.91</text>
<text transform="translate(1230 645) scale(1 1.1)" fill="#fff" font-size="13" text-anchor="start" >[knt]</text>
<text transform="translate(894 662) scale(1 1.1)" fill="#fff" font-size="13" text-anchor="start" >SR Wind 4km-6km:</text>
<text transform="translate(1123 662) scale(1 1.1)" fill="#ff0000" font-size="13" text-anchor="end" >17.29</text>
<text transform="translate(1230 662) scale(1 1.1)" fill="#fff" font-size="13" text-anchor="start" >[knt]</text>
<text transform="translate(894 679) scale(1 1.1)" fill="#fff" font-size="13" text-anchor="start" >SR Wind 9km-11km:</text>
<text transform="translate(1123 679) scale(1 1.1)" fill="#ff0000" font-size="13" text-anchor="end" >29.76</text>
<text transform="translate(1230 679) scale(1 1.1)" fill="#fff" font-size="13" text-anchor="start" >[knt] HP</text>
<text transform="translate(894 699) scale(1 1.1)" fill="#fff" font-size="13" text-anchor="start" >Effective Shear 6000:</text>
<text transform="translate(1123 699) scale(1 1.1)" fill="#ffff00" font-size="13" text-anchor="end" >27.91</text>
<text transform="translate(1230 699) scale(1 1.1)" fill="#fff" font-size="13" text-anchor="start" >[knt]</text>
<text transform="translate(894 719) scale(1 1.1)" fill="#fff" font-size="13" text-anchor="start" >Bulk Richardson Number:</text>
<text transform="translate(1123 719) scale(1 1.1)" fill="#ff0000" font-size="13" text-anchor="end" >21.98</text>
<text transform="translate(1213 719) scale(1 1.1)" fill="#ffff00" font-size="13" text-anchor="end" >62.49</text>
<text transform="translate(1230 719) scale(1 1.1)" fill="#fff" font-size="13" text-anchor="start" >[1]</text>
<text transform="translate(894 739) scale(1 1.1)" fill="#fff" font-size="13" text-anchor="start" >3km Effective SRH:</text>
<text transform="translate(1123 739) scale(1 1.1)" fill="#ff0000" font-size="13" text-anchor="end" >563.98</text>
<text transform="translate(1230 739) scale(1 1.1)" fill="#fff" font-size="13" text-anchor="start" >[m^2/s^2]</text>
<text transform="translate(894 756) scale(1 1.1)" fill="#fff" font-size="13" text-anchor="start" >Max 3km SRH (Sfc-2km):</text>
<text transform="translate(1123 756) scale(1 1.1)" fill="#ff0000" font-size="13" text-anchor="end" >563.98</text>
<text transform="translate(1230 756) scale(1 1.1)" fill="#fff" font-size="13" text-anchor="start" >[m^2/s^2]</text>
<text transform="translate(894 773) scale(1 1.1)" fill="#fff" font-size="13" text-anchor="start" >Max 3km SRH Level AGL:</text>
<text transform="translate(1123 773) scale(1 1.1)" fill="#ff0000" font-size="13" text-anchor="end" >0.00</text>
<text transform="translate(1230 773) scale(1 1.1)" fill="#fff" font-size="13" text-anchor="start" >[m]</text>
<text transform="translate(894 792) scale(1 1.1)" fill="#fff" font-size="13" text-anchor="start" >3km Energy Helicity Index:</text>
<text transform="translate(1123 792) scale(1 1.1)" fill="#ff0000" font-size="13" text-anchor="end" >5.34</text>
<text transform="translate(1213 792) scale(1 1.1)" fill="#ff0000" font-size="13" text-anchor="end" >15.18</text>
<text transform="translate(1230 792) scale(1 1.1)" fill="#fff" font-size="13" text-anchor="start" >[1]</text>
<text transform="translate(894 809) scale(1 1.1)" fill="#fff" font-size="13" text-anchor="start" >3km Vorticity Gen. Pot.:</text>
<text transform="translate(1123 809) scale(1 1.1)" fill="#ff0000" font-size="13" text-anchor="end" >0.16</text>
<text transform="translate(1213 809) scale(1 1.1)" fill="#ff0000" font-size="13" text-anchor="end" >0.26</text>
<text transform="translate(1230 809) scale(1 1.1)" fill="#fff" font-size="13" text-anchor="start" >[m/s^2]</text>
</g>
<g>
<text x="62" y="29" fill="#fff" font-size="16.3" text-anchor="start" font-weight="bold" >Station: 74646 Lamont</text>
<text x="258" y="29" fill="#fff" font-size="16.3" text-anchor="start" font-weight="bold" >Date: 01.05.2008</text>
<text x="406" y="29" fill="#fff" font-size="16.3" text-anchor="start" font-weight="bold" >Time: 1100Z</text>
<text x="761" y="32" fill="#00ff00" font-size="12.5" text-anchor="middle" font-weight="bold" >OBS</text>
<text x="826" y="32" fill="#ff0080" font-size="12.5" text-anchor="middle" font-weight="bold" >SR</text>
</g>
</svg>
</body></html>
